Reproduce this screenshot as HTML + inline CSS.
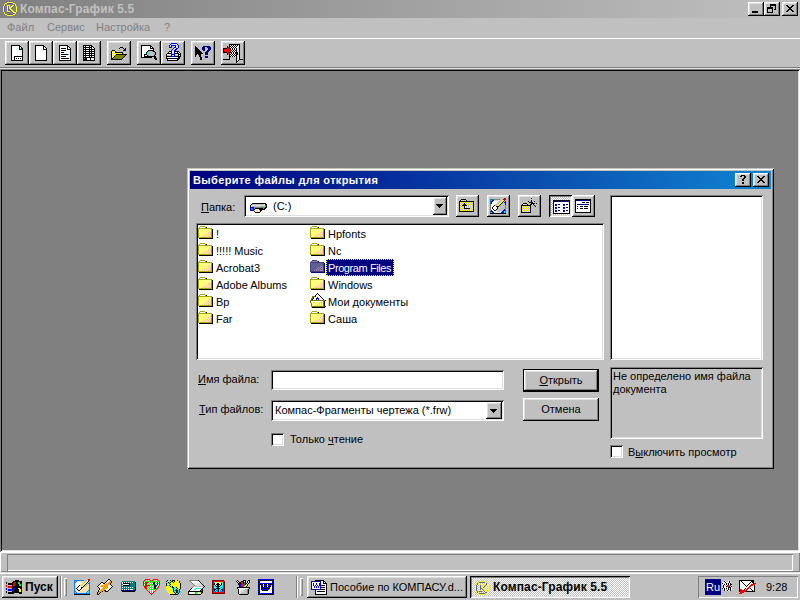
<!DOCTYPE html>
<html><head><meta charset="utf-8"><style>
*{margin:0;padding:0;box-sizing:border-box}
html,body{width:800px;height:600px;overflow:hidden;background:#c0c0c0;font-family:"Liberation Sans",sans-serif;font-size:11px;color:#000}
.a{position:absolute}
.t{position:absolute;white-space:nowrap;font-size:11px;line-height:13px}
.b{font-weight:bold}
.raised{background:#c0c0c0;box-shadow:inset -1px -1px #000,inset 1px 1px #fff,inset -2px -2px #808080,inset 2px 2px #dfdfdf}
.sunk{box-shadow:inset 1px 1px #808080,inset -1px -1px #fff,inset 2px 2px #000,inset -2px -2px #dfdfdf}
.u{text-decoration:underline}
.dith{background-color:#fff;background-image:linear-gradient(45deg,#c0c0c0 25%,transparent 25%,transparent 75%,#c0c0c0 75%),linear-gradient(45deg,#c0c0c0 25%,transparent 25%,transparent 75%,#c0c0c0 75%);background-size:2px 2px;background-position:0 0,1px 1px}
</style></head><body>
<div class="a" style="left:0px;top:0px;width:800px;height:18px;background:linear-gradient(to right,#808080,#c0c0c0)"></div>
<svg class="a" style="left:0px;top:0px" width="20" height="16" shape-rendering="crispEdges"><rect x="7" y="2" width="6" height="1" fill="#ffff00"/><rect x="5" y="3" width="2" height="1" fill="#ffff00"/><rect x="7" y="3" width="6" height="1" fill="#606090"/><rect x="13" y="3" width="2" height="1" fill="#ffff00"/><rect x="4" y="4" width="1" height="1" fill="#ffff00"/><rect x="5" y="4" width="1" height="1" fill="#606090"/><rect x="14" y="4" width="1" height="1" fill="#606090"/><rect x="15" y="4" width="1" height="1" fill="#ffff00"/><rect x="4" y="5" width="1" height="1" fill="#ffff00"/><rect x="5" y="5" width="1" height="1" fill="#606090"/><rect x="7" y="5" width="3" height="1" fill="#ffff00"/><rect x="12" y="5" width="2" height="1" fill="#ffff00"/><rect x="14" y="5" width="1" height="1" fill="#606090"/><rect x="15" y="5" width="1" height="1" fill="#ffff00"/><rect x="3" y="6" width="1" height="1" fill="#ffff00"/><rect x="4" y="6" width="1" height="1" fill="#606090"/><rect x="7" y="6" width="1" height="1" fill="#ffff00"/><rect x="8" y="6" width="1" height="1" fill="#606090"/><rect x="9" y="6" width="1" height="1" fill="#ffff00"/><rect x="11" y="6" width="2" height="1" fill="#ffff00"/><rect x="13" y="6" width="1" height="1" fill="#606090"/><rect x="16" y="6" width="1" height="1" fill="#ffff00"/><rect x="3" y="7" width="1" height="1" fill="#ffff00"/><rect x="4" y="7" width="1" height="1" fill="#606090"/><rect x="7" y="7" width="1" height="1" fill="#ffff00"/><rect x="8" y="7" width="1" height="1" fill="#606090"/><rect x="9" y="7" width="3" height="1" fill="#ffff00"/><rect x="12" y="7" width="1" height="1" fill="#606090"/><rect x="16" y="7" width="1" height="1" fill="#ffff00"/><rect x="3" y="8" width="1" height="1" fill="#ffff00"/><rect x="4" y="8" width="1" height="1" fill="#606090"/><rect x="7" y="8" width="1" height="1" fill="#ffff00"/><rect x="8" y="8" width="1" height="1" fill="#606090"/><rect x="9" y="8" width="2" height="1" fill="#ffff00"/><rect x="11" y="8" width="1" height="1" fill="#606090"/><rect x="16" y="8" width="1" height="1" fill="#ffff00"/><rect x="3" y="9" width="1" height="1" fill="#ffff00"/><rect x="4" y="9" width="1" height="1" fill="#606090"/><rect x="7" y="9" width="1" height="1" fill="#ffff00"/><rect x="8" y="9" width="2" height="1" fill="#606090"/><rect x="10" y="9" width="2" height="1" fill="#ffff00"/><rect x="16" y="9" width="1" height="1" fill="#ffff00"/><rect x="3" y="10" width="1" height="1" fill="#ffff00"/><rect x="4" y="10" width="1" height="1" fill="#606090"/><rect x="7" y="10" width="1" height="1" fill="#ffff00"/><rect x="8" y="10" width="1" height="1" fill="#606090"/><rect x="10" y="10" width="1" height="1" fill="#606090"/><rect x="11" y="10" width="2" height="1" fill="#ffff00"/><rect x="16" y="10" width="1" height="1" fill="#ffff00"/><rect x="3" y="11" width="1" height="1" fill="#ffff00"/><rect x="4" y="11" width="1" height="1" fill="#606090"/><rect x="7" y="11" width="3" height="1" fill="#ffff00"/><rect x="11" y="11" width="1" height="1" fill="#606090"/><rect x="12" y="11" width="2" height="1" fill="#ffff00"/><rect x="16" y="11" width="1" height="1" fill="#ffff00"/><rect x="4" y="12" width="1" height="1" fill="#ffff00"/><rect x="5" y="12" width="1" height="1" fill="#606090"/><rect x="7" y="12" width="3" height="1" fill="#606090"/><rect x="12" y="12" width="1" height="1" fill="#606090"/><rect x="13" y="12" width="3" height="1" fill="#ffff00"/><rect x="4" y="13" width="1" height="1" fill="#ffff00"/><rect x="5" y="13" width="1" height="1" fill="#606090"/><rect x="13" y="13" width="2" height="1" fill="#606090"/><rect x="15" y="13" width="1" height="1" fill="#ffff00"/><rect x="5" y="14" width="2" height="1" fill="#ffff00"/><rect x="7" y="14" width="6" height="1" fill="#606090"/><rect x="13" y="14" width="2" height="1" fill="#ffff00"/><rect x="7" y="15" width="6" height="1" fill="#ffff00"/></svg>
<div class="t b" style="left:20px;top:3px;font-size:12px;color:#c0c0c0;letter-spacing:0.12px">Компас-График 5.5</div>
<div class="a raised" style="left:748px;top:2px;width:16px;height:14px;"></div>
<div class="a raised" style="left:764px;top:2px;width:16px;height:14px;"></div>
<div class="a raised" style="left:782px;top:2px;width:16px;height:14px;"></div>
<div class="a" style="left:752px;top:11px;width:6px;height:2px;background:#000"></div>
<svg class="a" style="left:764px;top:2px" width="16" height="14" shape-rendering="crispEdges"><rect x="6" y="2" width="6" height="1" fill="#000"/><rect x="6" y="3" width="6" height="1" fill="#000"/><rect x="6" y="4" width="1" height="1" fill="#000"/><rect x="11" y="4" width="1" height="4" fill="#000"/><rect x="10" y="7" width="1" height="1" fill="#000"/><rect x="3" y="5" width="6" height="2" fill="#000"/><rect x="3" y="7" width="1" height="4" fill="#000"/><rect x="8" y="7" width="1" height="4" fill="#000"/><rect x="3" y="10" width="6" height="1" fill="#000"/></svg>
<svg class="a" style="left:782px;top:2px" width="16" height="14" shape-rendering="crispEdges"><rect x="4" y="3" width="2" height="1" fill="#000"/><rect x="10" y="3" width="2" height="1" fill="#000"/><rect x="5" y="4" width="2" height="1" fill="#000"/><rect x="9" y="4" width="2" height="1" fill="#000"/><rect x="6" y="5" width="2" height="1" fill="#000"/><rect x="8" y="5" width="2" height="1" fill="#000"/><rect x="7" y="6" width="2" height="1" fill="#000"/><rect x="7" y="6" width="2" height="1" fill="#000"/><rect x="8" y="7" width="2" height="1" fill="#000"/><rect x="6" y="7" width="2" height="1" fill="#000"/><rect x="9" y="8" width="2" height="1" fill="#000"/><rect x="5" y="8" width="2" height="1" fill="#000"/><rect x="10" y="9" width="2" height="1" fill="#000"/><rect x="4" y="9" width="2" height="1" fill="#000"/></svg>
<div class="t " style="left:7px;top:21px;color:#808080">Файл</div>
<div class="t " style="left:47px;top:21px;color:#808080">Сервис</div>
<div class="t " style="left:96px;top:21px;color:#808080">Настройка</div>
<div class="t " style="left:164px;top:21px;color:#808080">?</div>
<div class="a" style="left:0px;top:38px;width:800px;height:1px;background:#fff"></div>
<div class="a raised" style="left:5px;top:41px;width:24px;height:24px;"></div>
<svg class="a" style="left:9px;top:45px" width="16" height="16" shape-rendering="crispEdges"><rect x="2" y="0" width="9" height="1" fill="#000000"/><rect x="2" y="1" width="1" height="1" fill="#000000"/><rect x="3" y="1" width="7" height="1" fill="#ffffff"/><rect x="10" y="1" width="2" height="1" fill="#000000"/><rect x="2" y="2" width="1" height="1" fill="#000000"/><rect x="3" y="2" width="7" height="1" fill="#ffffff"/><rect x="10" y="2" width="1" height="1" fill="#000000"/><rect x="11" y="2" width="1" height="1" fill="#ffffff"/><rect x="12" y="2" width="1" height="1" fill="#000000"/><rect x="2" y="3" width="1" height="1" fill="#000000"/><rect x="3" y="3" width="7" height="1" fill="#ffffff"/><rect x="10" y="3" width="1" height="1" fill="#000000"/><rect x="11" y="3" width="1" height="1" fill="#00ffff"/><rect x="12" y="3" width="2" height="1" fill="#000000"/><rect x="2" y="4" width="1" height="1" fill="#000000"/><rect x="3" y="4" width="7" height="1" fill="#ffffff"/><rect x="10" y="4" width="4" height="1" fill="#000000"/><rect x="2" y="5" width="1" height="1" fill="#000000"/><rect x="3" y="5" width="10" height="1" fill="#ffffff"/><rect x="13" y="5" width="1" height="1" fill="#000000"/><rect x="2" y="6" width="1" height="1" fill="#000000"/><rect x="3" y="6" width="10" height="1" fill="#ffffff"/><rect x="13" y="6" width="1" height="1" fill="#000000"/><rect x="2" y="7" width="1" height="1" fill="#000000"/><rect x="3" y="7" width="10" height="1" fill="#ffffff"/><rect x="13" y="7" width="1" height="1" fill="#000000"/><rect x="2" y="8" width="1" height="1" fill="#000000"/><rect x="3" y="8" width="10" height="1" fill="#ffffff"/><rect x="13" y="8" width="1" height="1" fill="#000000"/><rect x="2" y="9" width="1" height="1" fill="#000000"/><rect x="3" y="9" width="10" height="1" fill="#ffffff"/><rect x="13" y="9" width="1" height="1" fill="#000000"/><rect x="2" y="10" width="1" height="1" fill="#000000"/><rect x="3" y="10" width="10" height="1" fill="#ffffff"/><rect x="13" y="10" width="1" height="1" fill="#000000"/><rect x="2" y="11" width="1" height="1" fill="#000000"/><rect x="3" y="11" width="2" height="1" fill="#ffffff"/><rect x="5" y="11" width="9" height="1" fill="#000000"/><rect x="2" y="12" width="1" height="1" fill="#000000"/><rect x="3" y="12" width="2" height="1" fill="#ffffff"/><rect x="5" y="12" width="1" height="1" fill="#000000"/><rect x="6" y="12" width="7" height="1" fill="#ffffff"/><rect x="13" y="12" width="1" height="1" fill="#000000"/><rect x="2" y="13" width="1" height="1" fill="#000000"/><rect x="3" y="13" width="2" height="1" fill="#ffffff"/><rect x="5" y="13" width="1" height="1" fill="#000000"/><rect x="6" y="13" width="1" height="1" fill="#ffffff"/><rect x="7" y="13" width="1" height="1" fill="#000000"/><rect x="8" y="13" width="1" height="1" fill="#ffffff"/><rect x="9" y="13" width="1" height="1" fill="#000000"/><rect x="10" y="13" width="1" height="1" fill="#ffffff"/><rect x="11" y="13" width="1" height="1" fill="#000000"/><rect x="12" y="13" width="1" height="1" fill="#ffffff"/><rect x="13" y="13" width="1" height="1" fill="#000000"/><rect x="2" y="14" width="1" height="1" fill="#000000"/><rect x="3" y="14" width="2" height="1" fill="#ffffff"/><rect x="5" y="14" width="1" height="1" fill="#000000"/><rect x="6" y="14" width="7" height="1" fill="#ffffff"/><rect x="13" y="14" width="1" height="1" fill="#000000"/><rect x="2" y="15" width="12" height="1" fill="#000000"/></svg>
<div class="a raised" style="left:29px;top:41px;width:24px;height:24px;"></div>
<svg class="a" style="left:33px;top:45px" width="16" height="16" shape-rendering="crispEdges"><rect x="2" y="0" width="9" height="1" fill="#000000"/><rect x="2" y="1" width="1" height="1" fill="#000000"/><rect x="3" y="1" width="7" height="1" fill="#ffffff"/><rect x="10" y="1" width="2" height="1" fill="#000000"/><rect x="2" y="2" width="1" height="1" fill="#000000"/><rect x="3" y="2" width="7" height="1" fill="#ffffff"/><rect x="10" y="2" width="1" height="1" fill="#000000"/><rect x="11" y="2" width="1" height="1" fill="#ffffff"/><rect x="12" y="2" width="1" height="1" fill="#000000"/><rect x="2" y="3" width="1" height="1" fill="#000000"/><rect x="3" y="3" width="7" height="1" fill="#ffffff"/><rect x="10" y="3" width="1" height="1" fill="#000000"/><rect x="11" y="3" width="2" height="1" fill="#ffffff"/><rect x="13" y="3" width="1" height="1" fill="#000000"/><rect x="2" y="4" width="1" height="1" fill="#000000"/><rect x="3" y="4" width="7" height="1" fill="#ffffff"/><rect x="10" y="4" width="4" height="1" fill="#000000"/><rect x="2" y="5" width="1" height="1" fill="#000000"/><rect x="3" y="5" width="10" height="1" fill="#ffffff"/><rect x="13" y="5" width="1" height="1" fill="#000000"/><rect x="2" y="6" width="1" height="1" fill="#000000"/><rect x="3" y="6" width="10" height="1" fill="#ffffff"/><rect x="13" y="6" width="1" height="1" fill="#000000"/><rect x="2" y="7" width="1" height="1" fill="#000000"/><rect x="3" y="7" width="10" height="1" fill="#ffffff"/><rect x="13" y="7" width="1" height="1" fill="#000000"/><rect x="2" y="8" width="1" height="1" fill="#000000"/><rect x="3" y="8" width="10" height="1" fill="#ffffff"/><rect x="13" y="8" width="1" height="1" fill="#000000"/><rect x="2" y="9" width="1" height="1" fill="#000000"/><rect x="3" y="9" width="10" height="1" fill="#ffffff"/><rect x="13" y="9" width="1" height="1" fill="#000000"/><rect x="2" y="10" width="1" height="1" fill="#000000"/><rect x="3" y="10" width="10" height="1" fill="#ffffff"/><rect x="13" y="10" width="1" height="1" fill="#000000"/><rect x="2" y="11" width="1" height="1" fill="#000000"/><rect x="3" y="11" width="10" height="1" fill="#ffffff"/><rect x="13" y="11" width="1" height="1" fill="#000000"/><rect x="2" y="12" width="1" height="1" fill="#000000"/><rect x="3" y="12" width="10" height="1" fill="#ffffff"/><rect x="13" y="12" width="1" height="1" fill="#000000"/><rect x="2" y="13" width="1" height="1" fill="#000000"/><rect x="3" y="13" width="10" height="1" fill="#ffffff"/><rect x="13" y="13" width="1" height="1" fill="#000000"/><rect x="2" y="14" width="1" height="1" fill="#000000"/><rect x="3" y="14" width="10" height="1" fill="#ffffff"/><rect x="13" y="14" width="1" height="1" fill="#000000"/><rect x="2" y="15" width="12" height="1" fill="#000000"/></svg>
<div class="a raised" style="left:53px;top:41px;width:24px;height:24px;"></div>
<svg class="a" style="left:57px;top:45px" width="16" height="16" shape-rendering="crispEdges"><rect x="2" y="0" width="9" height="1" fill="#000000"/><rect x="2" y="1" width="1" height="1" fill="#000000"/><rect x="3" y="1" width="7" height="1" fill="#ffffff"/><rect x="10" y="1" width="2" height="1" fill="#000000"/><rect x="2" y="2" width="1" height="1" fill="#000000"/><rect x="3" y="2" width="7" height="1" fill="#ffffff"/><rect x="10" y="2" width="1" height="1" fill="#000000"/><rect x="11" y="2" width="1" height="1" fill="#ffffff"/><rect x="12" y="2" width="1" height="1" fill="#000000"/><rect x="2" y="3" width="1" height="1" fill="#000000"/><rect x="3" y="3" width="1" height="1" fill="#ffffff"/><rect x="4" y="3" width="5" height="1" fill="#000000"/><rect x="9" y="3" width="1" height="1" fill="#ffffff"/><rect x="10" y="3" width="1" height="1" fill="#000000"/><rect x="11" y="3" width="2" height="1" fill="#ffffff"/><rect x="13" y="3" width="1" height="1" fill="#000000"/><rect x="2" y="4" width="1" height="1" fill="#000000"/><rect x="3" y="4" width="7" height="1" fill="#ffffff"/><rect x="10" y="4" width="4" height="1" fill="#000000"/><rect x="2" y="5" width="1" height="1" fill="#000000"/><rect x="3" y="5" width="1" height="1" fill="#ffffff"/><rect x="4" y="5" width="5" height="1" fill="#000000"/><rect x="9" y="5" width="4" height="1" fill="#ffffff"/><rect x="13" y="5" width="1" height="1" fill="#000000"/><rect x="2" y="6" width="1" height="1" fill="#000000"/><rect x="3" y="6" width="10" height="1" fill="#ffffff"/><rect x="13" y="6" width="1" height="1" fill="#000000"/><rect x="2" y="7" width="1" height="1" fill="#000000"/><rect x="3" y="7" width="1" height="1" fill="#ffffff"/><rect x="4" y="7" width="3" height="1" fill="#000000"/><rect x="7" y="7" width="6" height="1" fill="#ffffff"/><rect x="13" y="7" width="1" height="1" fill="#000000"/><rect x="2" y="8" width="1" height="1" fill="#000000"/><rect x="3" y="8" width="10" height="1" fill="#ffffff"/><rect x="13" y="8" width="1" height="1" fill="#000000"/><rect x="2" y="9" width="1" height="1" fill="#000000"/><rect x="3" y="9" width="1" height="1" fill="#ffffff"/><rect x="4" y="9" width="7" height="1" fill="#000000"/><rect x="11" y="9" width="1" height="1" fill="#00ffff"/><rect x="12" y="9" width="1" height="1" fill="#ffffff"/><rect x="13" y="9" width="1" height="1" fill="#000000"/><rect x="2" y="10" width="1" height="1" fill="#000000"/><rect x="3" y="10" width="10" height="1" fill="#ffffff"/><rect x="13" y="10" width="1" height="1" fill="#000000"/><rect x="2" y="11" width="1" height="1" fill="#000000"/><rect x="3" y="11" width="1" height="1" fill="#ffffff"/><rect x="4" y="11" width="5" height="1" fill="#000000"/><rect x="9" y="11" width="4" height="1" fill="#ffffff"/><rect x="13" y="11" width="1" height="1" fill="#000000"/><rect x="2" y="12" width="1" height="1" fill="#000000"/><rect x="3" y="12" width="10" height="1" fill="#ffffff"/><rect x="13" y="12" width="1" height="1" fill="#000000"/><rect x="2" y="13" width="1" height="1" fill="#000000"/><rect x="3" y="13" width="1" height="1" fill="#ffffff"/><rect x="4" y="13" width="8" height="1" fill="#000000"/><rect x="12" y="13" width="1" height="1" fill="#ffffff"/><rect x="13" y="13" width="1" height="1" fill="#000000"/><rect x="2" y="14" width="1" height="1" fill="#000000"/><rect x="3" y="14" width="10" height="1" fill="#ffffff"/><rect x="13" y="14" width="1" height="1" fill="#000000"/><rect x="2" y="15" width="12" height="1" fill="#000000"/></svg>
<div class="a raised" style="left:77px;top:41px;width:24px;height:24px;"></div>
<svg class="a" style="left:81px;top:45px" width="16" height="16" shape-rendering="crispEdges"><rect x="2" y="0" width="9" height="1" fill="#000000"/><rect x="2" y="1" width="1" height="1" fill="#000000"/><rect x="3" y="1" width="1" height="1" fill="#ffffff"/><rect x="4" y="1" width="1" height="1" fill="#000000"/><rect x="5" y="1" width="3" height="1" fill="#ffffff"/><rect x="8" y="1" width="1" height="1" fill="#000000"/><rect x="9" y="1" width="1" height="1" fill="#ffffff"/><rect x="10" y="1" width="2" height="1" fill="#000000"/><rect x="2" y="2" width="9" height="1" fill="#000000"/><rect x="11" y="2" width="1" height="1" fill="#ffffff"/><rect x="12" y="2" width="1" height="1" fill="#000000"/><rect x="2" y="3" width="1" height="1" fill="#000000"/><rect x="3" y="3" width="1" height="1" fill="#ffffff"/><rect x="4" y="3" width="1" height="1" fill="#000000"/><rect x="5" y="3" width="3" height="1" fill="#ffffff"/><rect x="8" y="3" width="1" height="1" fill="#000000"/><rect x="9" y="3" width="1" height="1" fill="#ffffff"/><rect x="10" y="3" width="1" height="1" fill="#000000"/><rect x="11" y="3" width="2" height="1" fill="#ffffff"/><rect x="13" y="3" width="1" height="1" fill="#000000"/><rect x="2" y="4" width="12" height="1" fill="#000000"/><rect x="2" y="5" width="1" height="1" fill="#000000"/><rect x="3" y="5" width="1" height="1" fill="#ffffff"/><rect x="4" y="5" width="1" height="1" fill="#000000"/><rect x="5" y="5" width="3" height="1" fill="#ffffff"/><rect x="8" y="5" width="1" height="1" fill="#000000"/><rect x="9" y="5" width="1" height="1" fill="#ffffff"/><rect x="10" y="5" width="1" height="1" fill="#000000"/><rect x="11" y="5" width="2" height="1" fill="#ffffff"/><rect x="13" y="5" width="1" height="1" fill="#000000"/><rect x="2" y="6" width="12" height="1" fill="#000000"/><rect x="2" y="7" width="1" height="1" fill="#000000"/><rect x="3" y="7" width="1" height="1" fill="#ffffff"/><rect x="4" y="7" width="1" height="1" fill="#000000"/><rect x="5" y="7" width="3" height="1" fill="#ffffff"/><rect x="8" y="7" width="1" height="1" fill="#000000"/><rect x="9" y="7" width="1" height="1" fill="#ffffff"/><rect x="10" y="7" width="1" height="1" fill="#000000"/><rect x="11" y="7" width="2" height="1" fill="#ffffff"/><rect x="13" y="7" width="1" height="1" fill="#000000"/><rect x="2" y="8" width="12" height="1" fill="#000000"/><rect x="2" y="9" width="1" height="1" fill="#000000"/><rect x="3" y="9" width="1" height="1" fill="#ffffff"/><rect x="4" y="9" width="1" height="1" fill="#000000"/><rect x="5" y="9" width="3" height="1" fill="#ffffff"/><rect x="8" y="9" width="1" height="1" fill="#000000"/><rect x="9" y="9" width="1" height="1" fill="#ffffff"/><rect x="10" y="9" width="1" height="1" fill="#000000"/><rect x="11" y="9" width="2" height="1" fill="#ffffff"/><rect x="13" y="9" width="1" height="1" fill="#000000"/><rect x="2" y="10" width="12" height="1" fill="#000000"/><rect x="2" y="11" width="1" height="1" fill="#000000"/><rect x="3" y="11" width="1" height="1" fill="#ffffff"/><rect x="4" y="11" width="1" height="1" fill="#000000"/><rect x="5" y="11" width="3" height="1" fill="#ffffff"/><rect x="8" y="11" width="1" height="1" fill="#000000"/><rect x="9" y="11" width="1" height="1" fill="#ffffff"/><rect x="10" y="11" width="1" height="1" fill="#000000"/><rect x="11" y="11" width="2" height="1" fill="#ffffff"/><rect x="13" y="11" width="1" height="1" fill="#000000"/><rect x="2" y="12" width="12" height="1" fill="#000000"/><rect x="2" y="13" width="1" height="1" fill="#000000"/><rect x="3" y="13" width="1" height="1" fill="#808080"/><rect x="4" y="13" width="2" height="1" fill="#000000"/><rect x="6" y="13" width="3" height="1" fill="#ffffff"/><rect x="9" y="13" width="1" height="1" fill="#000000"/><rect x="10" y="13" width="3" height="1" fill="#ffffff"/><rect x="13" y="13" width="1" height="1" fill="#000000"/><rect x="2" y="14" width="4" height="1" fill="#000000"/><rect x="6" y="14" width="3" height="1" fill="#ffffff"/><rect x="9" y="14" width="1" height="1" fill="#000000"/><rect x="10" y="14" width="3" height="1" fill="#ffffff"/><rect x="13" y="14" width="1" height="1" fill="#000000"/><rect x="2" y="15" width="12" height="1" fill="#000000"/></svg>
<div class="a raised" style="left:107px;top:41px;width:24px;height:24px;"></div>
<svg class="a" style="left:111px;top:45px" width="16" height="16" shape-rendering="crispEdges"><rect x="9" y="2" width="3" height="1" fill="#000000"/><rect x="8" y="3" width="1" height="1" fill="#000000"/><rect x="12" y="3" width="1" height="1" fill="#000000"/><rect x="14" y="3" width="1" height="1" fill="#000000"/><rect x="13" y="4" width="2" height="1" fill="#000000"/><rect x="1" y="5" width="3" height="1" fill="#000000"/><rect x="12" y="5" width="3" height="1" fill="#000000"/><rect x="0" y="6" width="1" height="1" fill="#000000"/><rect x="1" y="6" width="1" height="1" fill="#ffff00"/><rect x="2" y="6" width="1" height="1" fill="#ffffff"/><rect x="3" y="6" width="1" height="1" fill="#ffff00"/><rect x="4" y="6" width="1" height="1" fill="#000000"/><rect x="0" y="7" width="1" height="1" fill="#000000"/><rect x="1" y="7" width="1" height="1" fill="#ffffff"/><rect x="2" y="7" width="1" height="1" fill="#ffff00"/><rect x="3" y="7" width="1" height="1" fill="#ffffff"/><rect x="4" y="7" width="8" height="1" fill="#000000"/><rect x="0" y="8" width="1" height="1" fill="#000000"/><rect x="1" y="8" width="1" height="1" fill="#ffff00"/><rect x="2" y="8" width="1" height="1" fill="#ffffff"/><rect x="3" y="8" width="1" height="1" fill="#ffff00"/><rect x="4" y="8" width="1" height="1" fill="#ffffff"/><rect x="5" y="8" width="1" height="1" fill="#ffff00"/><rect x="6" y="8" width="1" height="1" fill="#ffffff"/><rect x="7" y="8" width="1" height="1" fill="#ffff00"/><rect x="8" y="8" width="1" height="1" fill="#ffffff"/><rect x="9" y="8" width="1" height="1" fill="#ffff00"/><rect x="10" y="8" width="1" height="1" fill="#ffffff"/><rect x="11" y="8" width="1" height="1" fill="#000000"/><rect x="0" y="9" width="1" height="1" fill="#000000"/><rect x="1" y="9" width="1" height="1" fill="#ffffff"/><rect x="2" y="9" width="1" height="1" fill="#ffff00"/><rect x="3" y="9" width="1" height="1" fill="#ffffff"/><rect x="4" y="9" width="1" height="1" fill="#ffff00"/><rect x="5" y="9" width="11" height="1" fill="#000000"/><rect x="0" y="10" width="1" height="1" fill="#000000"/><rect x="1" y="10" width="1" height="1" fill="#ffff00"/><rect x="2" y="10" width="1" height="1" fill="#ffffff"/><rect x="3" y="10" width="1" height="1" fill="#ffff00"/><rect x="4" y="10" width="1" height="1" fill="#000000"/><rect x="5" y="10" width="9" height="1" fill="#808000"/><rect x="14" y="10" width="1" height="1" fill="#000000"/><rect x="0" y="11" width="1" height="1" fill="#000000"/><rect x="1" y="11" width="1" height="1" fill="#ffffff"/><rect x="2" y="11" width="1" height="1" fill="#ffff00"/><rect x="3" y="11" width="1" height="1" fill="#000000"/><rect x="4" y="11" width="9" height="1" fill="#808000"/><rect x="13" y="11" width="1" height="1" fill="#000000"/><rect x="0" y="12" width="1" height="1" fill="#000000"/><rect x="1" y="12" width="1" height="1" fill="#ffff00"/><rect x="2" y="12" width="1" height="1" fill="#000000"/><rect x="3" y="12" width="9" height="1" fill="#808000"/><rect x="12" y="12" width="1" height="1" fill="#000000"/><rect x="0" y="13" width="2" height="1" fill="#000000"/><rect x="2" y="13" width="9" height="1" fill="#808000"/><rect x="11" y="13" width="1" height="1" fill="#000000"/><rect x="0" y="14" width="11" height="1" fill="#000000"/></svg>
<div class="a raised" style="left:137px;top:41px;width:24px;height:24px;"></div>
<svg class="a" style="left:141px;top:45px" width="16" height="16" shape-rendering="crispEdges"><rect x="0" y="0" width="10" height="1" fill="#000000"/><rect x="0" y="1" width="1" height="1" fill="#000000"/><rect x="1" y="1" width="8" height="1" fill="#ffffff"/><rect x="9" y="1" width="2" height="1" fill="#000000"/><rect x="0" y="2" width="1" height="1" fill="#000000"/><rect x="1" y="2" width="8" height="1" fill="#ffffff"/><rect x="9" y="2" width="1" height="1" fill="#000000"/><rect x="10" y="2" width="1" height="1" fill="#ffffff"/><rect x="11" y="2" width="1" height="1" fill="#000000"/><rect x="0" y="3" width="1" height="1" fill="#000000"/><rect x="1" y="3" width="8" height="1" fill="#ffffff"/><rect x="9" y="3" width="4" height="1" fill="#000000"/><rect x="0" y="4" width="1" height="1" fill="#000000"/><rect x="1" y="4" width="11" height="1" fill="#ffffff"/><rect x="12" y="4" width="1" height="1" fill="#000000"/><rect x="0" y="5" width="1" height="1" fill="#000000"/><rect x="1" y="5" width="6" height="1" fill="#ffffff"/><rect x="7" y="5" width="6" height="1" fill="#000000"/><rect x="0" y="6" width="1" height="1" fill="#000000"/><rect x="1" y="6" width="5" height="1" fill="#ffffff"/><rect x="6" y="6" width="1" height="1" fill="#000000"/><rect x="7" y="6" width="1" height="1" fill="#808080"/><rect x="8" y="6" width="3" height="1" fill="#c0c0c0"/><rect x="11" y="6" width="1" height="1" fill="#808080"/><rect x="12" y="6" width="2" height="1" fill="#000000"/><rect x="0" y="7" width="1" height="1" fill="#000000"/><rect x="1" y="7" width="4" height="1" fill="#ffffff"/><rect x="5" y="7" width="1" height="1" fill="#000000"/><rect x="6" y="7" width="1" height="1" fill="#808080"/><rect x="7" y="7" width="2" height="1" fill="#00ffff"/><rect x="9" y="7" width="4" height="1" fill="#c0c0c0"/><rect x="13" y="7" width="1" height="1" fill="#808080"/><rect x="14" y="7" width="1" height="1" fill="#000000"/><rect x="0" y="8" width="1" height="1" fill="#000000"/><rect x="1" y="8" width="4" height="1" fill="#ffffff"/><rect x="5" y="8" width="1" height="1" fill="#000000"/><rect x="6" y="8" width="1" height="1" fill="#c0c0c0"/><rect x="7" y="8" width="2" height="1" fill="#00ffff"/><rect x="9" y="8" width="5" height="1" fill="#c0c0c0"/><rect x="14" y="8" width="1" height="1" fill="#000000"/><rect x="0" y="9" width="1" height="1" fill="#000000"/><rect x="1" y="9" width="2" height="1" fill="#ffffff"/><rect x="3" y="9" width="3" height="1" fill="#000000"/><rect x="6" y="9" width="7" height="1" fill="#c0c0c0"/><rect x="13" y="9" width="1" height="1" fill="#808080"/><rect x="14" y="9" width="1" height="1" fill="#000000"/><rect x="0" y="10" width="1" height="1" fill="#000000"/><rect x="1" y="10" width="2" height="1" fill="#ffffff"/><rect x="3" y="10" width="1" height="1" fill="#000000"/><rect x="4" y="10" width="2" height="1" fill="#ffffff"/><rect x="6" y="10" width="1" height="1" fill="#000000"/><rect x="7" y="10" width="1" height="1" fill="#808080"/><rect x="8" y="10" width="5" height="1" fill="#c0c0c0"/><rect x="13" y="10" width="1" height="1" fill="#000000"/><rect x="0" y="11" width="1" height="1" fill="#000000"/><rect x="1" y="11" width="2" height="1" fill="#ffffff"/><rect x="3" y="11" width="12" height="1" fill="#000000"/><rect x="0" y="12" width="11" height="1" fill="#000000"/><rect x="13" y="12" width="2" height="1" fill="#000000"/><rect x="13" y="13" width="3" height="1" fill="#000000"/><rect x="14" y="14" width="2" height="1" fill="#000000"/></svg>
<div class="a raised" style="left:161px;top:41px;width:24px;height:24px;"></div>
<svg class="a" style="left:165px;top:43px" width="16" height="18" shape-rendering="crispEdges"><rect x="6" y="0" width="6" height="1" fill="#0000ff"/><rect x="5" y="1" width="1" height="1" fill="#0000ff"/><rect x="6" y="1" width="6" height="1" fill="#dfdfdf"/><rect x="12" y="1" width="1" height="1" fill="#0000ff"/><rect x="4" y="2" width="1" height="1" fill="#0000ff"/><rect x="5" y="2" width="1" height="1" fill="#dfdfdf"/><rect x="6" y="2" width="5" height="1" fill="#0000ff"/><rect x="11" y="2" width="2" height="1" fill="#dfdfdf"/><rect x="13" y="2" width="1" height="1" fill="#0000ff"/><rect x="4" y="3" width="1" height="1" fill="#0000ff"/><rect x="5" y="3" width="1" height="1" fill="#dfdfdf"/><rect x="6" y="3" width="1" height="1" fill="#0000ff"/><rect x="10" y="3" width="1" height="1" fill="#0000ff"/><rect x="11" y="3" width="2" height="1" fill="#dfdfdf"/><rect x="13" y="3" width="1" height="1" fill="#0000ff"/><rect x="4" y="4" width="3" height="1" fill="#0000ff"/><rect x="9" y="4" width="2" height="1" fill="#0000ff"/><rect x="11" y="4" width="2" height="1" fill="#dfdfdf"/><rect x="13" y="4" width="1" height="1" fill="#0000ff"/><rect x="8" y="5" width="1" height="1" fill="#0000ff"/><rect x="9" y="5" width="2" height="1" fill="#dfdfdf"/><rect x="11" y="5" width="2" height="1" fill="#0000ff"/><rect x="7" y="6" width="1" height="1" fill="#0000ff"/><rect x="8" y="6" width="2" height="1" fill="#dfdfdf"/><rect x="10" y="6" width="2" height="1" fill="#0000ff"/><rect x="6" y="7" width="1" height="1" fill="#0000ff"/><rect x="7" y="7" width="2" height="1" fill="#dfdfdf"/><rect x="9" y="7" width="2" height="1" fill="#0000ff"/><rect x="4" y="8" width="2" height="1" fill="#000000"/><rect x="6" y="8" width="1" height="1" fill="#0000ff"/><rect x="7" y="8" width="2" height="1" fill="#dfdfdf"/><rect x="9" y="8" width="1" height="1" fill="#0000ff"/><rect x="10" y="8" width="4" height="1" fill="#000000"/><rect x="3" y="9" width="1" height="1" fill="#000000"/><rect x="4" y="9" width="2" height="1" fill="#ffffff"/><rect x="6" y="9" width="1" height="1" fill="#0000ff"/><rect x="7" y="9" width="2" height="1" fill="#dfdfdf"/><rect x="9" y="9" width="1" height="1" fill="#0000ff"/><rect x="10" y="9" width="2" height="1" fill="#ffffff"/><rect x="12" y="9" width="1" height="1" fill="#000000"/><rect x="13" y="9" width="1" height="1" fill="#ffffff"/><rect x="14" y="9" width="1" height="1" fill="#000000"/><rect x="2" y="10" width="4" height="1" fill="#000000"/><rect x="6" y="10" width="1" height="1" fill="#0000ff"/><rect x="7" y="10" width="2" height="1" fill="#dfdfdf"/><rect x="9" y="10" width="1" height="1" fill="#0000ff"/><rect x="10" y="10" width="4" height="1" fill="#000000"/><rect x="14" y="10" width="1" height="1" fill="#ffffff"/><rect x="15" y="10" width="1" height="1" fill="#000000"/><rect x="1" y="11" width="1" height="1" fill="#000000"/><rect x="2" y="11" width="4" height="1" fill="#ffffff"/><rect x="6" y="11" width="4" height="1" fill="#0000ff"/><rect x="10" y="11" width="3" height="1" fill="#ffffff"/><rect x="13" y="11" width="3" height="1" fill="#000000"/><rect x="1" y="12" width="1" height="1" fill="#000000"/><rect x="2" y="12" width="4" height="1" fill="#c0c0c0"/><rect x="6" y="12" width="1" height="1" fill="#0000ff"/><rect x="7" y="12" width="2" height="1" fill="#dfdfdf"/><rect x="9" y="12" width="1" height="1" fill="#0000ff"/><rect x="10" y="12" width="3" height="1" fill="#c0c0c0"/><rect x="13" y="12" width="1" height="1" fill="#000000"/><rect x="14" y="12" width="1" height="1" fill="#ffffff"/><rect x="15" y="12" width="1" height="1" fill="#000000"/><rect x="1" y="13" width="5" height="1" fill="#000000"/><rect x="6" y="13" width="4" height="1" fill="#0000ff"/><rect x="10" y="13" width="6" height="1" fill="#000000"/><rect x="1" y="14" width="1" height="1" fill="#000000"/><rect x="2" y="14" width="11" height="1" fill="#ffffff"/><rect x="13" y="14" width="2" height="1" fill="#000000"/><rect x="1" y="15" width="14" height="1" fill="#000000"/><rect x="2" y="16" width="1" height="1" fill="#000000"/><rect x="3" y="16" width="9" height="1" fill="#ffffff"/><rect x="12" y="16" width="2" height="1" fill="#000000"/><rect x="2" y="17" width="11" height="1" fill="#000000"/></svg>
<div class="a raised" style="left:191px;top:41px;width:24px;height:24px;"></div>
<svg class="a" style="left:195px;top:46px" width="16" height="14" shape-rendering="crispEdges"><rect x="0" y="0" width="1" height="1" fill="#000000"/><rect x="8" y="0" width="7" height="1" fill="#000080"/><rect x="0" y="1" width="2" height="1" fill="#000000"/><rect x="7" y="1" width="3" height="1" fill="#000080"/><rect x="12" y="1" width="4" height="1" fill="#000080"/><rect x="0" y="2" width="3" height="1" fill="#000000"/><rect x="7" y="2" width="3" height="1" fill="#000080"/><rect x="13" y="2" width="3" height="1" fill="#000080"/><rect x="0" y="3" width="4" height="1" fill="#000000"/><rect x="7" y="3" width="3" height="1" fill="#000080"/><rect x="13" y="3" width="3" height="1" fill="#000080"/><rect x="0" y="4" width="5" height="1" fill="#000000"/><rect x="8" y="4" width="2" height="1" fill="#000080"/><rect x="12" y="4" width="3" height="1" fill="#000080"/><rect x="0" y="5" width="6" height="1" fill="#000000"/><rect x="11" y="5" width="3" height="1" fill="#000080"/><rect x="0" y="6" width="7" height="1" fill="#000000"/><rect x="10" y="6" width="3" height="1" fill="#000080"/><rect x="0" y="7" width="8" height="1" fill="#000000"/><rect x="10" y="7" width="3" height="1" fill="#000080"/><rect x="0" y="8" width="2" height="1" fill="#000000"/><rect x="3" y="8" width="3" height="1" fill="#000000"/><rect x="10" y="8" width="3" height="1" fill="#000080"/><rect x="0" y="9" width="1" height="1" fill="#000000"/><rect x="4" y="9" width="2" height="1" fill="#000000"/><rect x="0" y="10" width="1" height="1" fill="#000000"/><rect x="4" y="10" width="2" height="1" fill="#000000"/><rect x="10" y="10" width="3" height="1" fill="#000080"/><rect x="5" y="11" width="2" height="1" fill="#000000"/><rect x="10" y="11" width="3" height="1" fill="#000080"/><rect x="5" y="12" width="2" height="1" fill="#000000"/><rect x="5" y="13" width="2" height="1" fill="#000000"/></svg>
<div class="a raised" style="left:221px;top:41px;width:24px;height:24px;"></div>
<svg class="a" style="left:222px;top:42px" width="22" height="21" shape-rendering="crispEdges"><rect x="7" y="2" width="11" height="1" fill="#000000"/><rect x="7" y="3" width="1" height="1" fill="#000000"/><rect x="8" y="3" width="1" height="1" fill="#ffffff"/><rect x="9" y="3" width="1" height="1" fill="#000000"/><rect x="10" y="3" width="1" height="1" fill="#ffffff"/><rect x="11" y="3" width="1" height="1" fill="#000000"/><rect x="12" y="3" width="1" height="1" fill="#ffffff"/><rect x="13" y="3" width="1" height="1" fill="#000000"/><rect x="14" y="3" width="1" height="1" fill="#ffffff"/><rect x="15" y="3" width="1" height="1" fill="#000000"/><rect x="16" y="3" width="1" height="1" fill="#ffffff"/><rect x="17" y="3" width="1" height="1" fill="#000000"/><rect x="5" y="4" width="1" height="1" fill="#000000"/><rect x="7" y="4" width="2" height="1" fill="#000000"/><rect x="9" y="4" width="1" height="1" fill="#ffffff"/><rect x="10" y="4" width="1" height="1" fill="#000000"/><rect x="11" y="4" width="1" height="1" fill="#ffffff"/><rect x="12" y="4" width="1" height="1" fill="#000000"/><rect x="13" y="4" width="1" height="1" fill="#ffffff"/><rect x="14" y="4" width="1" height="1" fill="#000000"/><rect x="15" y="4" width="2" height="1" fill="#ffffff"/><rect x="17" y="4" width="1" height="1" fill="#000000"/><rect x="5" y="5" width="1" height="1" fill="#000000"/><rect x="6" y="5" width="1" height="1" fill="#ff0000"/><rect x="7" y="5" width="1" height="1" fill="#000000"/><rect x="8" y="5" width="1" height="1" fill="#ffffff"/><rect x="9" y="5" width="1" height="1" fill="#000000"/><rect x="10" y="5" width="1" height="1" fill="#ffffff"/><rect x="11" y="5" width="1" height="1" fill="#000000"/><rect x="12" y="5" width="1" height="1" fill="#ffffff"/><rect x="13" y="5" width="1" height="1" fill="#000000"/><rect x="14" y="5" width="2" height="1" fill="#ffffff"/><rect x="16" y="5" width="1" height="1" fill="#dfdfdf"/><rect x="17" y="5" width="1" height="1" fill="#000000"/><rect x="1" y="6" width="4" height="1" fill="#000000"/><rect x="5" y="6" width="2" height="1" fill="#ff0000"/><rect x="7" y="6" width="2" height="1" fill="#000000"/><rect x="9" y="6" width="1" height="1" fill="#ffffff"/><rect x="10" y="6" width="1" height="1" fill="#000000"/><rect x="11" y="6" width="1" height="1" fill="#ffffff"/><rect x="12" y="6" width="1" height="1" fill="#000000"/><rect x="13" y="6" width="1" height="1" fill="#ffffff"/><rect x="14" y="6" width="1" height="1" fill="#000000"/><rect x="15" y="6" width="2" height="1" fill="#dfdfdf"/><rect x="17" y="6" width="1" height="1" fill="#000000"/><rect x="1" y="7" width="1" height="1" fill="#000000"/><rect x="2" y="7" width="6" height="1" fill="#ff0000"/><rect x="8" y="7" width="1" height="1" fill="#000000"/><rect x="9" y="7" width="1" height="1" fill="#ffffff"/><rect x="10" y="7" width="1" height="1" fill="#000000"/><rect x="11" y="7" width="1" height="1" fill="#ffffff"/><rect x="12" y="7" width="1" height="1" fill="#000000"/><rect x="13" y="7" width="1" height="1" fill="#ffffff"/><rect x="14" y="7" width="1" height="1" fill="#000000"/><rect x="15" y="7" width="2" height="1" fill="#dfdfdf"/><rect x="17" y="7" width="1" height="1" fill="#000000"/><rect x="1" y="8" width="1" height="1" fill="#000000"/><rect x="2" y="8" width="7" height="1" fill="#ff0000"/><rect x="9" y="8" width="1" height="1" fill="#000000"/><rect x="10" y="8" width="1" height="1" fill="#ffffff"/><rect x="11" y="8" width="1" height="1" fill="#000000"/><rect x="12" y="8" width="1" height="1" fill="#ffffff"/><rect x="13" y="8" width="2" height="1" fill="#000000"/><rect x="15" y="8" width="2" height="1" fill="#dfdfdf"/><rect x="17" y="8" width="1" height="1" fill="#000000"/><rect x="1" y="9" width="1" height="1" fill="#000000"/><rect x="2" y="9" width="6" height="1" fill="#ff0000"/><rect x="8" y="9" width="1" height="1" fill="#000000"/><rect x="9" y="9" width="1" height="1" fill="#ffffff"/><rect x="10" y="9" width="1" height="1" fill="#000000"/><rect x="11" y="9" width="1" height="1" fill="#ffffff"/><rect x="12" y="9" width="1" height="1" fill="#000000"/><rect x="13" y="9" width="1" height="1" fill="#ffffff"/><rect x="14" y="9" width="1" height="1" fill="#000000"/><rect x="15" y="9" width="2" height="1" fill="#dfdfdf"/><rect x="17" y="9" width="1" height="1" fill="#000000"/><rect x="1" y="10" width="4" height="1" fill="#000000"/><rect x="5" y="10" width="2" height="1" fill="#ff0000"/><rect x="7" y="10" width="3" height="1" fill="#000000"/><rect x="10" y="10" width="1" height="1" fill="#ffffff"/><rect x="11" y="10" width="1" height="1" fill="#000000"/><rect x="12" y="10" width="1" height="1" fill="#ffffff"/><rect x="13" y="10" width="3" height="1" fill="#000000"/><rect x="16" y="10" width="1" height="1" fill="#dfdfdf"/><rect x="17" y="10" width="1" height="1" fill="#000000"/><rect x="5" y="11" width="1" height="1" fill="#000000"/><rect x="6" y="11" width="1" height="1" fill="#ff0000"/><rect x="7" y="11" width="1" height="1" fill="#000000"/><rect x="8" y="11" width="1" height="1" fill="#ffffff"/><rect x="9" y="11" width="1" height="1" fill="#000000"/><rect x="10" y="11" width="1" height="1" fill="#ffffff"/><rect x="11" y="11" width="1" height="1" fill="#000000"/><rect x="12" y="11" width="1" height="1" fill="#ffffff"/><rect x="13" y="11" width="3" height="1" fill="#000000"/><rect x="16" y="11" width="1" height="1" fill="#dfdfdf"/><rect x="17" y="11" width="1" height="1" fill="#000000"/><rect x="5" y="12" width="1" height="1" fill="#000000"/><rect x="7" y="12" width="2" height="1" fill="#000000"/><rect x="9" y="12" width="1" height="1" fill="#ffffff"/><rect x="10" y="12" width="1" height="1" fill="#000000"/><rect x="11" y="12" width="1" height="1" fill="#ffffff"/><rect x="12" y="12" width="1" height="1" fill="#000000"/><rect x="13" y="12" width="1" height="1" fill="#ffffff"/><rect x="14" y="12" width="2" height="1" fill="#000000"/><rect x="16" y="12" width="1" height="1" fill="#dfdfdf"/><rect x="17" y="12" width="1" height="1" fill="#000000"/><rect x="7" y="13" width="1" height="1" fill="#000000"/><rect x="8" y="13" width="1" height="1" fill="#ffffff"/><rect x="9" y="13" width="1" height="1" fill="#000000"/><rect x="10" y="13" width="1" height="1" fill="#ffffff"/><rect x="11" y="13" width="1" height="1" fill="#000000"/><rect x="12" y="13" width="1" height="1" fill="#ffffff"/><rect x="13" y="13" width="2" height="1" fill="#000000"/><rect x="15" y="13" width="2" height="1" fill="#dfdfdf"/><rect x="17" y="13" width="1" height="1" fill="#000000"/><rect x="7" y="14" width="2" height="1" fill="#000000"/><rect x="9" y="14" width="1" height="1" fill="#ffffff"/><rect x="10" y="14" width="1" height="1" fill="#000000"/><rect x="11" y="14" width="1" height="1" fill="#ffffff"/><rect x="12" y="14" width="1" height="1" fill="#000000"/><rect x="13" y="14" width="1" height="1" fill="#ffffff"/><rect x="14" y="14" width="1" height="1" fill="#000000"/><rect x="15" y="14" width="2" height="1" fill="#dfdfdf"/><rect x="17" y="14" width="1" height="1" fill="#000000"/><rect x="7" y="15" width="1" height="1" fill="#000000"/><rect x="14" y="15" width="1" height="1" fill="#000000"/><rect x="15" y="15" width="2" height="1" fill="#dfdfdf"/><rect x="17" y="15" width="1" height="1" fill="#000000"/><rect x="7" y="16" width="1" height="1" fill="#000000"/><rect x="14" y="16" width="1" height="1" fill="#000000"/><rect x="15" y="16" width="2" height="1" fill="#dfdfdf"/><rect x="17" y="16" width="1" height="1" fill="#000000"/><rect x="1" y="17" width="7" height="1" fill="#000000"/><rect x="14" y="17" width="1" height="1" fill="#000000"/><rect x="15" y="17" width="2" height="1" fill="#dfdfdf"/><rect x="17" y="17" width="4" height="1" fill="#000000"/><rect x="14" y="18" width="1" height="1" fill="#000000"/><rect x="15" y="18" width="1" height="1" fill="#dfdfdf"/><rect x="16" y="18" width="1" height="1" fill="#000000"/><rect x="14" y="19" width="2" height="1" fill="#000000"/><rect x="14" y="20" width="1" height="1" fill="#000000"/></svg>
<div class="a" style="left:0px;top:67px;width:800px;height:1px;background:#808080"></div>
<div class="a" style="left:0px;top:68px;width:800px;height:1px;background:#dfdfdf"></div>
<div class="a sunk" style="left:0px;top:69px;width:800px;height:483px;background:#808080"></div>
<div class="a" style="left:0px;top:552px;width:800px;height:20px;box-shadow:inset 1px 1px #fff,inset -1px -1px #808080"></div>
<div class="a" style="left:7px;top:554px;width:786px;height:17px;box-shadow:inset 1px 1px #808080,inset -1px -1px #fff"></div>
<div class="a" style="left:187px;top:168px;width:587px;height:301px;background:#c0c0c0;box-shadow:inset 1px 1px #c0c0c0,inset -1px -1px #000,inset 2px 2px #fff,inset -2px -2px #808080"></div>
<div class="a" style="left:190px;top:171px;width:581px;height:18px;background:linear-gradient(to right,#000080,#1084d0)"></div>
<div class="t b" style="left:193px;top:174px;color:#fff;letter-spacing:0.35px">Выберите файлы для открытия</div>
<div class="a raised" style="left:735px;top:173px;width:16px;height:14px;"></div>
<div class="a raised" style="left:753px;top:173px;width:16px;height:14px;"></div>
<svg class="a" style="left:740px;top:175px" width="6" height="9" shape-rendering="crispEdges"><rect x="1" y="0" width="4" height="1" fill="#000000"/><rect x="0" y="1" width="2" height="1" fill="#000000"/><rect x="4" y="1" width="2" height="1" fill="#000000"/><rect x="4" y="2" width="2" height="1" fill="#000000"/><rect x="3" y="3" width="2" height="1" fill="#000000"/><rect x="2" y="4" width="2" height="1" fill="#000000"/><rect x="2" y="5" width="2" height="1" fill="#000000"/><rect x="2" y="7" width="2" height="1" fill="#000000"/><rect x="2" y="8" width="2" height="1" fill="#000000"/></svg>
<svg class="a" style="left:753px;top:173px" width="16" height="14" shape-rendering="crispEdges"><rect x="4" y="3" width="2" height="1" fill="#000"/><rect x="10" y="3" width="2" height="1" fill="#000"/><rect x="5" y="4" width="2" height="1" fill="#000"/><rect x="9" y="4" width="2" height="1" fill="#000"/><rect x="6" y="5" width="2" height="1" fill="#000"/><rect x="8" y="5" width="2" height="1" fill="#000"/><rect x="7" y="6" width="2" height="1" fill="#000"/><rect x="7" y="6" width="2" height="1" fill="#000"/><rect x="8" y="7" width="2" height="1" fill="#000"/><rect x="6" y="7" width="2" height="1" fill="#000"/><rect x="9" y="8" width="2" height="1" fill="#000"/><rect x="5" y="8" width="2" height="1" fill="#000"/><rect x="10" y="9" width="2" height="1" fill="#000"/><rect x="4" y="9" width="2" height="1" fill="#000"/></svg>
<div class="t " style="left:201px;top:201px;"><span class="u">П</span>апка:</div>
<div class="a sunk" style="left:244px;top:195px;width:205px;height:22px;background:#fff"></div>
<div class="a raised" style="left:433px;top:197px;width:14px;height:18px;"></div>
<svg class="a" style="left:436px;top:204px" width="8" height="4" shape-rendering="crispEdges"><rect x="0" y="0" width="7" height="1"/><rect x="1" y="1" width="5" height="1"/><rect x="2" y="2" width="3" height="1"/><rect x="3" y="3" width="1" height="1"/></svg>
<svg class="a" style="left:250px;top:203px" width="17" height="10" shape-rendering="crispEdges"><rect x="2" y="0" width="14" height="1" fill="#000000"/><rect x="1" y="1" width="1" height="1" fill="#000000"/><rect x="2" y="1" width="12" height="1" fill="#c0c0c0"/><rect x="14" y="1" width="1" height="1" fill="#dfdfdf"/><rect x="15" y="1" width="2" height="1" fill="#000000"/><rect x="0" y="2" width="1" height="1" fill="#000000"/><rect x="1" y="2" width="14" height="1" fill="#dfdfdf"/><rect x="15" y="2" width="1" height="1" fill="#808080"/><rect x="16" y="2" width="1" height="1" fill="#000000"/><rect x="0" y="3" width="1" height="1" fill="#000000"/><rect x="1" y="3" width="10" height="1" fill="#c0c0c0"/><rect x="11" y="3" width="2" height="1" fill="#00ff00"/><rect x="13" y="3" width="2" height="1" fill="#c0c0c0"/><rect x="15" y="3" width="1" height="1" fill="#808080"/><rect x="16" y="3" width="1" height="1" fill="#000000"/><rect x="0" y="4" width="4" height="1" fill="#0000ff"/><rect x="4" y="4" width="11" height="1" fill="#808080"/><rect x="15" y="4" width="2" height="1" fill="#000000"/><rect x="0" y="5" width="1" height="1" fill="#0000ff"/><rect x="1" y="5" width="2" height="1" fill="#0080ff"/><rect x="3" y="5" width="1" height="1" fill="#0000ff"/><rect x="4" y="5" width="1" height="1" fill="#808080"/><rect x="5" y="5" width="8" height="1" fill="#000000"/><rect x="13" y="5" width="1" height="1" fill="#808080"/><rect x="14" y="5" width="2" height="1" fill="#000000"/><rect x="0" y="6" width="1" height="1" fill="#0000ff"/><rect x="1" y="6" width="2" height="1" fill="#0080ff"/><rect x="3" y="6" width="1" height="1" fill="#0000ff"/><rect x="4" y="6" width="1" height="1" fill="#000000"/><rect x="5" y="6" width="2" height="1" fill="#ffe0b0"/><rect x="7" y="6" width="2" height="1" fill="#ffffff"/><rect x="9" y="6" width="6" height="1" fill="#000000"/><rect x="0" y="7" width="1" height="1" fill="#0000ff"/><rect x="1" y="7" width="2" height="1" fill="#000080"/><rect x="3" y="7" width="1" height="1" fill="#0000ff"/><rect x="4" y="7" width="1" height="1" fill="#ffe0b0"/><rect x="5" y="7" width="1" height="1" fill="#ffffff"/><rect x="6" y="7" width="4" height="1" fill="#ffe0b0"/><rect x="10" y="7" width="2" height="1" fill="#000000"/><rect x="4" y="8" width="1" height="1" fill="#000000"/><rect x="5" y="8" width="5" height="1" fill="#ffe0b0"/><rect x="10" y="8" width="1" height="1" fill="#000000"/><rect x="5" y="9" width="5" height="1" fill="#000000"/></svg>
<div class="t " style="left:273px;top:200px;">(C:)</div>
<div class="a raised" style="left:456px;top:195px;width:23px;height:22px;"></div>
<svg class="a" style="left:459px;top:199px" width="16" height="13" shape-rendering="crispEdges"><rect x="2" y="0" width="5" height="1" fill="#000000"/><rect x="1" y="1" width="1" height="1" fill="#000000"/><rect x="2" y="1" width="1" height="1" fill="#ffff00"/><rect x="3" y="1" width="1" height="1" fill="#c0c0c0"/><rect x="4" y="1" width="1" height="1" fill="#ffff00"/><rect x="5" y="1" width="1" height="1" fill="#c0c0c0"/><rect x="6" y="1" width="1" height="1" fill="#ffff00"/><rect x="7" y="1" width="1" height="1" fill="#000000"/><rect x="0" y="2" width="15" height="1" fill="#000000"/><rect x="0" y="3" width="1" height="1" fill="#000000"/><rect x="1" y="3" width="1" height="1" fill="#ffff00"/><rect x="2" y="3" width="1" height="1" fill="#c0c0c0"/><rect x="3" y="3" width="1" height="1" fill="#ffff00"/><rect x="4" y="3" width="1" height="1" fill="#c0c0c0"/><rect x="5" y="3" width="1" height="1" fill="#ffff00"/><rect x="6" y="3" width="1" height="1" fill="#c0c0c0"/><rect x="7" y="3" width="1" height="1" fill="#ffff00"/><rect x="8" y="3" width="1" height="1" fill="#c0c0c0"/><rect x="9" y="3" width="1" height="1" fill="#ffff00"/><rect x="10" y="3" width="1" height="1" fill="#c0c0c0"/><rect x="11" y="3" width="1" height="1" fill="#ffff00"/><rect x="12" y="3" width="1" height="1" fill="#c0c0c0"/><rect x="13" y="3" width="1" height="1" fill="#ffff00"/><rect x="14" y="3" width="1" height="1" fill="#000000"/><rect x="0" y="4" width="1" height="1" fill="#000000"/><rect x="1" y="4" width="1" height="1" fill="#c0c0c0"/><rect x="2" y="4" width="1" height="1" fill="#ffff00"/><rect x="3" y="4" width="1" height="1" fill="#c0c0c0"/><rect x="4" y="4" width="1" height="1" fill="#ffff00"/><rect x="5" y="4" width="1" height="1" fill="#000000"/><rect x="6" y="4" width="1" height="1" fill="#ffff00"/><rect x="7" y="4" width="1" height="1" fill="#c0c0c0"/><rect x="8" y="4" width="1" height="1" fill="#ffff00"/><rect x="9" y="4" width="1" height="1" fill="#c0c0c0"/><rect x="10" y="4" width="1" height="1" fill="#ffff00"/><rect x="11" y="4" width="1" height="1" fill="#c0c0c0"/><rect x="12" y="4" width="1" height="1" fill="#ffff00"/><rect x="13" y="4" width="1" height="1" fill="#c0c0c0"/><rect x="14" y="4" width="1" height="1" fill="#000000"/><rect x="0" y="5" width="1" height="1" fill="#000000"/><rect x="1" y="5" width="1" height="1" fill="#ffff00"/><rect x="2" y="5" width="1" height="1" fill="#c0c0c0"/><rect x="3" y="5" width="1" height="1" fill="#ffff00"/><rect x="4" y="5" width="3" height="1" fill="#000000"/><rect x="7" y="5" width="1" height="1" fill="#ffff00"/><rect x="8" y="5" width="1" height="1" fill="#c0c0c0"/><rect x="9" y="5" width="1" height="1" fill="#ffff00"/><rect x="10" y="5" width="1" height="1" fill="#c0c0c0"/><rect x="11" y="5" width="1" height="1" fill="#ffff00"/><rect x="12" y="5" width="1" height="1" fill="#c0c0c0"/><rect x="13" y="5" width="1" height="1" fill="#ffff00"/><rect x="14" y="5" width="1" height="1" fill="#000000"/><rect x="0" y="6" width="1" height="1" fill="#000000"/><rect x="1" y="6" width="1" height="1" fill="#c0c0c0"/><rect x="2" y="6" width="1" height="1" fill="#ffff00"/><rect x="3" y="6" width="5" height="1" fill="#000000"/><rect x="8" y="6" width="1" height="1" fill="#ffff00"/><rect x="9" y="6" width="1" height="1" fill="#c0c0c0"/><rect x="10" y="6" width="1" height="1" fill="#ffff00"/><rect x="11" y="6" width="1" height="1" fill="#c0c0c0"/><rect x="12" y="6" width="1" height="1" fill="#ffff00"/><rect x="13" y="6" width="1" height="1" fill="#c0c0c0"/><rect x="14" y="6" width="1" height="1" fill="#000000"/><rect x="0" y="7" width="1" height="1" fill="#000000"/><rect x="1" y="7" width="1" height="1" fill="#ffff00"/><rect x="2" y="7" width="1" height="1" fill="#c0c0c0"/><rect x="3" y="7" width="1" height="1" fill="#ffff00"/><rect x="4" y="7" width="1" height="1" fill="#c0c0c0"/><rect x="5" y="7" width="1" height="1" fill="#000000"/><rect x="6" y="7" width="1" height="1" fill="#ffff00"/><rect x="7" y="7" width="1" height="1" fill="#c0c0c0"/><rect x="8" y="7" width="1" height="1" fill="#ffff00"/><rect x="9" y="7" width="1" height="1" fill="#c0c0c0"/><rect x="10" y="7" width="1" height="1" fill="#ffff00"/><rect x="11" y="7" width="1" height="1" fill="#c0c0c0"/><rect x="12" y="7" width="2" height="1" fill="#ffff00"/><rect x="14" y="7" width="1" height="1" fill="#000000"/><rect x="0" y="8" width="1" height="1" fill="#000000"/><rect x="1" y="8" width="1" height="1" fill="#c0c0c0"/><rect x="2" y="8" width="1" height="1" fill="#ffff00"/><rect x="3" y="8" width="1" height="1" fill="#c0c0c0"/><rect x="4" y="8" width="1" height="1" fill="#ffff00"/><rect x="5" y="8" width="1" height="1" fill="#000000"/><rect x="6" y="8" width="1" height="1" fill="#ffff00"/><rect x="7" y="8" width="1" height="1" fill="#c0c0c0"/><rect x="8" y="8" width="1" height="1" fill="#ffff00"/><rect x="9" y="8" width="1" height="1" fill="#c0c0c0"/><rect x="10" y="8" width="1" height="1" fill="#ffff00"/><rect x="11" y="8" width="1" height="1" fill="#c0c0c0"/><rect x="12" y="8" width="1" height="1" fill="#ffff00"/><rect x="13" y="8" width="1" height="1" fill="#c0c0c0"/><rect x="14" y="8" width="1" height="1" fill="#000000"/><rect x="0" y="9" width="1" height="1" fill="#000000"/><rect x="1" y="9" width="1" height="1" fill="#ffff00"/><rect x="2" y="9" width="1" height="1" fill="#c0c0c0"/><rect x="3" y="9" width="1" height="1" fill="#ffff00"/><rect x="4" y="9" width="1" height="1" fill="#c0c0c0"/><rect x="5" y="9" width="6" height="1" fill="#000000"/><rect x="11" y="9" width="1" height="1" fill="#ffff00"/><rect x="12" y="9" width="1" height="1" fill="#c0c0c0"/><rect x="13" y="9" width="1" height="1" fill="#ffff00"/><rect x="14" y="9" width="1" height="1" fill="#000000"/><rect x="0" y="10" width="1" height="1" fill="#000000"/><rect x="1" y="10" width="1" height="1" fill="#c0c0c0"/><rect x="2" y="10" width="1" height="1" fill="#ffff00"/><rect x="3" y="10" width="1" height="1" fill="#c0c0c0"/><rect x="4" y="10" width="1" height="1" fill="#ffff00"/><rect x="5" y="10" width="1" height="1" fill="#c0c0c0"/><rect x="6" y="10" width="1" height="1" fill="#ffff00"/><rect x="7" y="10" width="1" height="1" fill="#c0c0c0"/><rect x="8" y="10" width="1" height="1" fill="#ffff00"/><rect x="9" y="10" width="1" height="1" fill="#c0c0c0"/><rect x="10" y="10" width="1" height="1" fill="#ffff00"/><rect x="11" y="10" width="1" height="1" fill="#c0c0c0"/><rect x="12" y="10" width="1" height="1" fill="#ffff00"/><rect x="13" y="10" width="1" height="1" fill="#c0c0c0"/><rect x="14" y="10" width="1" height="1" fill="#000000"/><rect x="0" y="11" width="1" height="1" fill="#000000"/><rect x="1" y="11" width="1" height="1" fill="#ffff00"/><rect x="2" y="11" width="1" height="1" fill="#c0c0c0"/><rect x="3" y="11" width="1" height="1" fill="#ffff00"/><rect x="4" y="11" width="1" height="1" fill="#c0c0c0"/><rect x="5" y="11" width="1" height="1" fill="#ffff00"/><rect x="6" y="11" width="1" height="1" fill="#c0c0c0"/><rect x="7" y="11" width="1" height="1" fill="#ffff00"/><rect x="8" y="11" width="1" height="1" fill="#c0c0c0"/><rect x="9" y="11" width="1" height="1" fill="#ffff00"/><rect x="10" y="11" width="1" height="1" fill="#c0c0c0"/><rect x="11" y="11" width="1" height="1" fill="#ffff00"/><rect x="12" y="11" width="1" height="1" fill="#c0c0c0"/><rect x="13" y="11" width="1" height="1" fill="#ffff00"/><rect x="14" y="11" width="1" height="1" fill="#000000"/><rect x="0" y="12" width="15" height="1" fill="#000000"/></svg>
<div class="a raised" style="left:487px;top:195px;width:23px;height:22px;"></div>
<svg class="a" style="left:490px;top:198px" width="16" height="16" shape-rendering="crispEdges"><rect x="14" y="0" width="1" height="1" fill="#800000"/><rect x="15" y="0" width="1" height="1" fill="#ff0000"/><rect x="0" y="1" width="4" height="1" fill="#008080"/><rect x="4" y="1" width="6" height="1" fill="#808080"/><rect x="13" y="1" width="1" height="1" fill="#800000"/><rect x="14" y="1" width="1" height="1" fill="#ff0000"/><rect x="15" y="1" width="1" height="1" fill="#800000"/><rect x="0" y="2" width="1" height="1" fill="#008080"/><rect x="1" y="2" width="1" height="1" fill="#00ffff"/><rect x="2" y="2" width="2" height="1" fill="#0000ff"/><rect x="4" y="2" width="6" height="1" fill="#dfdfdf"/><rect x="12" y="2" width="2" height="1" fill="#ffff00"/><rect x="14" y="2" width="1" height="1" fill="#800000"/><rect x="0" y="3" width="1" height="1" fill="#008080"/><rect x="1" y="3" width="2" height="1" fill="#0000ff"/><rect x="3" y="3" width="5" height="1" fill="#ffffff"/><rect x="8" y="3" width="1" height="1" fill="#dfdfdf"/><rect x="11" y="3" width="2" height="1" fill="#ffff00"/><rect x="13" y="3" width="1" height="1" fill="#000000"/><rect x="15" y="3" width="1" height="1" fill="#0000ff"/><rect x="0" y="4" width="1" height="1" fill="#008080"/><rect x="1" y="4" width="1" height="1" fill="#0000ff"/><rect x="2" y="4" width="5" height="1" fill="#ffffff"/><rect x="7" y="4" width="1" height="1" fill="#dfdfdf"/><rect x="10" y="4" width="2" height="1" fill="#ffff00"/><rect x="12" y="4" width="1" height="1" fill="#000000"/><rect x="14" y="4" width="2" height="1" fill="#0000ff"/><rect x="0" y="5" width="1" height="1" fill="#008080"/><rect x="1" y="5" width="1" height="1" fill="#0000ff"/><rect x="2" y="5" width="4" height="1" fill="#ffffff"/><rect x="6" y="5" width="1" height="1" fill="#dfdfdf"/><rect x="9" y="5" width="2" height="1" fill="#ffff00"/><rect x="11" y="5" width="1" height="1" fill="#000000"/><rect x="15" y="5" width="1" height="1" fill="#0000ff"/><rect x="0" y="6" width="1" height="1" fill="#808080"/><rect x="1" y="6" width="4" height="1" fill="#ffffff"/><rect x="5" y="6" width="1" height="1" fill="#dfdfdf"/><rect x="8" y="6" width="2" height="1" fill="#ffff00"/><rect x="10" y="6" width="1" height="1" fill="#000000"/><rect x="15" y="6" width="1" height="1" fill="#0000ff"/><rect x="0" y="7" width="1" height="1" fill="#808080"/><rect x="1" y="7" width="3" height="1" fill="#ffffff"/><rect x="4" y="7" width="1" height="1" fill="#000000"/><rect x="7" y="7" width="2" height="1" fill="#ffff00"/><rect x="9" y="7" width="1" height="1" fill="#000000"/><rect x="15" y="7" width="1" height="1" fill="#808080"/><rect x="0" y="8" width="1" height="1" fill="#808080"/><rect x="1" y="8" width="2" height="1" fill="#ffffff"/><rect x="3" y="8" width="1" height="1" fill="#000000"/><rect x="4" y="8" width="2" height="1" fill="#ffffff"/><rect x="6" y="8" width="3" height="1" fill="#000000"/><rect x="15" y="8" width="1" height="1" fill="#808080"/><rect x="0" y="9" width="1" height="1" fill="#808080"/><rect x="1" y="9" width="1" height="1" fill="#ffffff"/><rect x="2" y="9" width="1" height="1" fill="#000000"/><rect x="3" y="9" width="4" height="1" fill="#ffffff"/><rect x="7" y="9" width="1" height="1" fill="#000000"/><rect x="15" y="9" width="1" height="1" fill="#808080"/><rect x="0" y="10" width="1" height="1" fill="#808080"/><rect x="1" y="10" width="1" height="1" fill="#ffffff"/><rect x="2" y="10" width="1" height="1" fill="#000000"/><rect x="3" y="10" width="4" height="1" fill="#ffffff"/><rect x="7" y="10" width="1" height="1" fill="#000000"/><rect x="15" y="10" width="1" height="1" fill="#808080"/><rect x="0" y="11" width="1" height="1" fill="#808080"/><rect x="1" y="11" width="2" height="1" fill="#ffffff"/><rect x="3" y="11" width="1" height="1" fill="#000000"/><rect x="4" y="11" width="2" height="1" fill="#ffffff"/><rect x="6" y="11" width="1" height="1" fill="#000000"/><rect x="14" y="11" width="1" height="1" fill="#0000ff"/><rect x="15" y="11" width="1" height="1" fill="#808080"/><rect x="0" y="12" width="1" height="1" fill="#808080"/><rect x="1" y="12" width="1" height="1" fill="#0000ff"/><rect x="2" y="12" width="2" height="1" fill="#ffffff"/><rect x="4" y="12" width="2" height="1" fill="#000000"/><rect x="13" y="12" width="2" height="1" fill="#0000ff"/><rect x="15" y="12" width="1" height="1" fill="#008080"/><rect x="0" y="13" width="1" height="1" fill="#008080"/><rect x="1" y="13" width="2" height="1" fill="#0000ff"/><rect x="3" y="13" width="4" height="1" fill="#ffffff"/><rect x="10" y="13" width="2" height="1" fill="#dfdfdf"/><rect x="12" y="13" width="2" height="1" fill="#0000ff"/><rect x="14" y="13" width="1" height="1" fill="#00ffff"/><rect x="15" y="13" width="1" height="1" fill="#008080"/><rect x="0" y="14" width="1" height="1" fill="#008080"/><rect x="1" y="14" width="1" height="1" fill="#00ffff"/><rect x="2" y="14" width="2" height="1" fill="#0000ff"/><rect x="4" y="14" width="7" height="1" fill="#dfdfdf"/><rect x="11" y="14" width="3" height="1" fill="#0000ff"/><rect x="14" y="14" width="1" height="1" fill="#00ffff"/><rect x="15" y="14" width="1" height="1" fill="#008080"/><rect x="0" y="15" width="16" height="1" fill="#000000"/></svg>
<div class="a raised" style="left:518px;top:195px;width:23px;height:22px;"></div>
<svg class="a" style="left:521px;top:198px" width="16" height="15" shape-rendering="crispEdges"><rect x="10" y="0" width="1" height="1" fill="#000000"/><rect x="10" y="2" width="1" height="1" fill="#000000"/><rect x="7" y="3" width="1" height="1" fill="#000000"/><rect x="10" y="3" width="1" height="1" fill="#000000"/><rect x="13" y="3" width="1" height="1" fill="#000000"/><rect x="8" y="4" width="4" height="1" fill="#000000"/><rect x="2" y="5" width="4" height="1" fill="#000000"/><rect x="10" y="5" width="4" height="1" fill="#000000"/><rect x="15" y="5" width="1" height="1" fill="#000000"/><rect x="1" y="6" width="1" height="1" fill="#000000"/><rect x="2" y="6" width="1" height="1" fill="#ffff00"/><rect x="3" y="6" width="1" height="1" fill="#c0c0c0"/><rect x="4" y="6" width="1" height="1" fill="#ffff00"/><rect x="5" y="6" width="1" height="1" fill="#c0c0c0"/><rect x="6" y="6" width="1" height="1" fill="#000000"/><rect x="9" y="6" width="2" height="1" fill="#000000"/><rect x="12" y="6" width="1" height="1" fill="#000000"/><rect x="0" y="7" width="10" height="1" fill="#000000"/><rect x="13" y="7" width="1" height="1" fill="#000000"/><rect x="0" y="8" width="1" height="1" fill="#000000"/><rect x="1" y="8" width="1" height="1" fill="#ffff00"/><rect x="2" y="8" width="1" height="1" fill="#c0c0c0"/><rect x="3" y="8" width="1" height="1" fill="#ffff00"/><rect x="4" y="8" width="1" height="1" fill="#c0c0c0"/><rect x="5" y="8" width="1" height="1" fill="#ffff00"/><rect x="6" y="8" width="1" height="1" fill="#c0c0c0"/><rect x="7" y="8" width="1" height="1" fill="#ffff00"/><rect x="8" y="8" width="1" height="1" fill="#c0c0c0"/><rect x="9" y="8" width="1" height="1" fill="#000000"/><rect x="14" y="8" width="1" height="1" fill="#000000"/><rect x="0" y="9" width="1" height="1" fill="#000000"/><rect x="1" y="9" width="1" height="1" fill="#c0c0c0"/><rect x="2" y="9" width="1" height="1" fill="#ffff00"/><rect x="3" y="9" width="1" height="1" fill="#c0c0c0"/><rect x="4" y="9" width="1" height="1" fill="#ffff00"/><rect x="5" y="9" width="1" height="1" fill="#c0c0c0"/><rect x="6" y="9" width="1" height="1" fill="#ffff00"/><rect x="7" y="9" width="1" height="1" fill="#c0c0c0"/><rect x="8" y="9" width="1" height="1" fill="#ffff00"/><rect x="9" y="9" width="1" height="1" fill="#000000"/><rect x="0" y="10" width="1" height="1" fill="#000000"/><rect x="1" y="10" width="1" height="1" fill="#ffff00"/><rect x="2" y="10" width="1" height="1" fill="#c0c0c0"/><rect x="3" y="10" width="1" height="1" fill="#ffff00"/><rect x="4" y="10" width="1" height="1" fill="#c0c0c0"/><rect x="5" y="10" width="1" height="1" fill="#ffff00"/><rect x="6" y="10" width="1" height="1" fill="#c0c0c0"/><rect x="7" y="10" width="1" height="1" fill="#ffff00"/><rect x="8" y="10" width="1" height="1" fill="#c0c0c0"/><rect x="9" y="10" width="1" height="1" fill="#000000"/><rect x="0" y="11" width="1" height="1" fill="#000000"/><rect x="1" y="11" width="1" height="1" fill="#c0c0c0"/><rect x="2" y="11" width="1" height="1" fill="#ffff00"/><rect x="3" y="11" width="1" height="1" fill="#c0c0c0"/><rect x="4" y="11" width="1" height="1" fill="#ffff00"/><rect x="5" y="11" width="1" height="1" fill="#c0c0c0"/><rect x="6" y="11" width="1" height="1" fill="#ffff00"/><rect x="7" y="11" width="1" height="1" fill="#c0c0c0"/><rect x="8" y="11" width="1" height="1" fill="#ffff00"/><rect x="9" y="11" width="1" height="1" fill="#000000"/><rect x="0" y="12" width="1" height="1" fill="#000000"/><rect x="1" y="12" width="1" height="1" fill="#ffff00"/><rect x="2" y="12" width="1" height="1" fill="#c0c0c0"/><rect x="3" y="12" width="1" height="1" fill="#ffff00"/><rect x="4" y="12" width="1" height="1" fill="#c0c0c0"/><rect x="5" y="12" width="1" height="1" fill="#ffff00"/><rect x="6" y="12" width="1" height="1" fill="#c0c0c0"/><rect x="7" y="12" width="1" height="1" fill="#ffff00"/><rect x="8" y="12" width="1" height="1" fill="#c0c0c0"/><rect x="9" y="12" width="1" height="1" fill="#000000"/><rect x="0" y="13" width="1" height="1" fill="#000000"/><rect x="1" y="13" width="1" height="1" fill="#c0c0c0"/><rect x="2" y="13" width="1" height="1" fill="#ffff00"/><rect x="3" y="13" width="1" height="1" fill="#c0c0c0"/><rect x="4" y="13" width="1" height="1" fill="#ffff00"/><rect x="5" y="13" width="1" height="1" fill="#c0c0c0"/><rect x="6" y="13" width="1" height="1" fill="#ffff00"/><rect x="7" y="13" width="1" height="1" fill="#c0c0c0"/><rect x="8" y="13" width="1" height="1" fill="#ffff00"/><rect x="9" y="13" width="1" height="1" fill="#000000"/><rect x="0" y="14" width="10" height="1" fill="#000000"/></svg>
<div class="a dith" style="left:549px;top:195px;width:23px;height:22px;box-shadow:inset 1px 1px #000,inset -1px -1px #fff,inset 2px 2px #808080,inset -2px -2px #dfdfdf"></div>
<svg class="a" style="left:553px;top:200px" width="17" height="14" shape-rendering="crispEdges"><rect x="0" y="0" width="17" height="1" fill="#000000"/><rect x="0" y="1" width="1" height="1" fill="#000000"/><rect x="1" y="1" width="15" height="1" fill="#000080"/><rect x="16" y="1" width="1" height="1" fill="#000000"/><rect x="0" y="2" width="1" height="1" fill="#000000"/><rect x="1" y="2" width="15" height="1" fill="#ffffff"/><rect x="16" y="2" width="1" height="1" fill="#000000"/><rect x="0" y="3" width="1" height="1" fill="#000000"/><rect x="1" y="3" width="15" height="1" fill="#ffffff"/><rect x="16" y="3" width="1" height="1" fill="#000000"/><rect x="0" y="4" width="1" height="1" fill="#000000"/><rect x="1" y="4" width="1" height="1" fill="#ffffff"/><rect x="2" y="4" width="1" height="1" fill="#000080"/><rect x="3" y="4" width="1" height="1" fill="#0000ff"/><rect x="4" y="4" width="1" height="1" fill="#ffffff"/><rect x="5" y="4" width="2" height="1" fill="#000000"/><rect x="7" y="4" width="3" height="1" fill="#ffffff"/><rect x="10" y="4" width="1" height="1" fill="#000080"/><rect x="11" y="4" width="1" height="1" fill="#0000ff"/><rect x="12" y="4" width="1" height="1" fill="#ffffff"/><rect x="13" y="4" width="2" height="1" fill="#000000"/><rect x="15" y="4" width="1" height="1" fill="#ffffff"/><rect x="16" y="4" width="1" height="1" fill="#000000"/><rect x="0" y="5" width="1" height="1" fill="#000000"/><rect x="1" y="5" width="1" height="1" fill="#ffffff"/><rect x="2" y="5" width="2" height="1" fill="#0000ff"/><rect x="4" y="5" width="6" height="1" fill="#ffffff"/><rect x="10" y="5" width="2" height="1" fill="#0000ff"/><rect x="12" y="5" width="4" height="1" fill="#ffffff"/><rect x="16" y="5" width="1" height="1" fill="#000000"/><rect x="0" y="6" width="1" height="1" fill="#000000"/><rect x="1" y="6" width="15" height="1" fill="#ffffff"/><rect x="16" y="6" width="1" height="1" fill="#000000"/><rect x="0" y="7" width="1" height="1" fill="#000000"/><rect x="1" y="7" width="1" height="1" fill="#ffffff"/><rect x="2" y="7" width="1" height="1" fill="#000080"/><rect x="3" y="7" width="1" height="1" fill="#0000ff"/><rect x="4" y="7" width="1" height="1" fill="#ffffff"/><rect x="5" y="7" width="2" height="1" fill="#000000"/><rect x="7" y="7" width="3" height="1" fill="#ffffff"/><rect x="10" y="7" width="1" height="1" fill="#000080"/><rect x="11" y="7" width="1" height="1" fill="#0000ff"/><rect x="12" y="7" width="1" height="1" fill="#ffffff"/><rect x="13" y="7" width="2" height="1" fill="#000000"/><rect x="15" y="7" width="1" height="1" fill="#ffffff"/><rect x="16" y="7" width="1" height="1" fill="#000000"/><rect x="0" y="8" width="1" height="1" fill="#000000"/><rect x="1" y="8" width="1" height="1" fill="#ffffff"/><rect x="2" y="8" width="2" height="1" fill="#0000ff"/><rect x="4" y="8" width="6" height="1" fill="#ffffff"/><rect x="10" y="8" width="2" height="1" fill="#0000ff"/><rect x="12" y="8" width="4" height="1" fill="#ffffff"/><rect x="16" y="8" width="1" height="1" fill="#000000"/><rect x="0" y="9" width="1" height="1" fill="#000000"/><rect x="1" y="9" width="15" height="1" fill="#ffffff"/><rect x="16" y="9" width="1" height="1" fill="#000000"/><rect x="0" y="10" width="1" height="1" fill="#000000"/><rect x="1" y="10" width="1" height="1" fill="#ffffff"/><rect x="2" y="10" width="1" height="1" fill="#000080"/><rect x="3" y="10" width="1" height="1" fill="#0000ff"/><rect x="4" y="10" width="1" height="1" fill="#ffffff"/><rect x="5" y="10" width="2" height="1" fill="#000000"/><rect x="7" y="10" width="3" height="1" fill="#ffffff"/><rect x="10" y="10" width="1" height="1" fill="#000080"/><rect x="11" y="10" width="1" height="1" fill="#0000ff"/><rect x="12" y="10" width="1" height="1" fill="#ffffff"/><rect x="13" y="10" width="2" height="1" fill="#000000"/><rect x="15" y="10" width="1" height="1" fill="#ffffff"/><rect x="16" y="10" width="1" height="1" fill="#000000"/><rect x="0" y="11" width="1" height="1" fill="#000000"/><rect x="1" y="11" width="1" height="1" fill="#ffffff"/><rect x="2" y="11" width="2" height="1" fill="#0000ff"/><rect x="4" y="11" width="6" height="1" fill="#ffffff"/><rect x="10" y="11" width="2" height="1" fill="#0000ff"/><rect x="12" y="11" width="4" height="1" fill="#ffffff"/><rect x="16" y="11" width="1" height="1" fill="#000000"/><rect x="0" y="12" width="1" height="1" fill="#000000"/><rect x="1" y="12" width="15" height="1" fill="#ffffff"/><rect x="16" y="12" width="1" height="1" fill="#000000"/><rect x="0" y="13" width="17" height="1" fill="#000000"/></svg>
<div class="a raised" style="left:572px;top:195px;width:23px;height:22px;"></div>
<svg class="a" style="left:575px;top:199px" width="16" height="14" shape-rendering="crispEdges"><rect x="0" y="0" width="16" height="1" fill="#000000"/><rect x="0" y="1" width="1" height="1" fill="#000000"/><rect x="1" y="1" width="14" height="1" fill="#000080"/><rect x="15" y="1" width="1" height="1" fill="#000000"/><rect x="0" y="2" width="1" height="1" fill="#000000"/><rect x="1" y="2" width="14" height="1" fill="#ffffff"/><rect x="15" y="2" width="1" height="1" fill="#000000"/><rect x="0" y="3" width="1" height="1" fill="#000000"/><rect x="1" y="3" width="6" height="1" fill="#ffffff"/><rect x="7" y="3" width="3" height="1" fill="#000000"/><rect x="10" y="3" width="1" height="1" fill="#ffffff"/><rect x="11" y="3" width="3" height="1" fill="#000000"/><rect x="14" y="3" width="1" height="1" fill="#ffffff"/><rect x="15" y="3" width="1" height="1" fill="#000000"/><rect x="0" y="4" width="1" height="1" fill="#000000"/><rect x="1" y="4" width="14" height="1" fill="#ffffff"/><rect x="15" y="4" width="1" height="1" fill="#000000"/><rect x="0" y="5" width="1" height="1" fill="#000000"/><rect x="1" y="5" width="1" height="1" fill="#ffffff"/><rect x="2" y="5" width="12" height="1" fill="#000080"/><rect x="14" y="5" width="1" height="1" fill="#ffffff"/><rect x="15" y="5" width="1" height="1" fill="#000000"/><rect x="0" y="6" width="1" height="1" fill="#000000"/><rect x="1" y="6" width="14" height="1" fill="#ffffff"/><rect x="15" y="6" width="1" height="1" fill="#000000"/><rect x="0" y="7" width="1" height="1" fill="#000000"/><rect x="1" y="7" width="1" height="1" fill="#ffffff"/><rect x="2" y="7" width="1" height="1" fill="#000080"/><rect x="3" y="7" width="2" height="1" fill="#ffffff"/><rect x="5" y="7" width="3" height="1" fill="#000000"/><rect x="8" y="7" width="1" height="1" fill="#ffffff"/><rect x="9" y="7" width="4" height="1" fill="#000000"/><rect x="13" y="7" width="2" height="1" fill="#ffffff"/><rect x="15" y="7" width="1" height="1" fill="#000000"/><rect x="0" y="8" width="1" height="1" fill="#000000"/><rect x="1" y="8" width="14" height="1" fill="#ffffff"/><rect x="15" y="8" width="1" height="1" fill="#000000"/><rect x="0" y="9" width="1" height="1" fill="#000000"/><rect x="1" y="9" width="1" height="1" fill="#ffffff"/><rect x="2" y="9" width="1" height="1" fill="#000080"/><rect x="3" y="9" width="2" height="1" fill="#ffffff"/><rect x="5" y="9" width="3" height="1" fill="#000000"/><rect x="8" y="9" width="1" height="1" fill="#ffffff"/><rect x="9" y="9" width="4" height="1" fill="#000000"/><rect x="13" y="9" width="2" height="1" fill="#ffffff"/><rect x="15" y="9" width="1" height="1" fill="#000000"/><rect x="0" y="10" width="1" height="1" fill="#000000"/><rect x="1" y="10" width="14" height="1" fill="#ffffff"/><rect x="15" y="10" width="1" height="1" fill="#000000"/><rect x="0" y="11" width="1" height="1" fill="#000000"/><rect x="1" y="11" width="14" height="1" fill="#ffffff"/><rect x="15" y="11" width="1" height="1" fill="#000000"/><rect x="0" y="12" width="1" height="1" fill="#000000"/><rect x="1" y="12" width="14" height="1" fill="#ffffff"/><rect x="15" y="12" width="1" height="1" fill="#000000"/><rect x="0" y="13" width="16" height="1" fill="#000000"/></svg>
<div class="a sunk" style="left:196px;top:223px;width:408px;height:137px;background:#fff"></div>
<div class="a sunk" style="left:610px;top:195px;width:153px;height:165px;background:#fff"></div>
<svg class="a" style="left:197px;top:226px" width="16" height="13" shape-rendering="crispEdges"><rect x="3" y="0" width="5" height="1" fill="#a8a800"/><rect x="2" y="1" width="1" height="1" fill="#a8a800"/><rect x="3" y="1" width="5" height="1" fill="#ffffff"/><rect x="8" y="1" width="1" height="1" fill="#a8a800"/><rect x="9" y="1" width="1" height="1" fill="#000000"/><rect x="1" y="2" width="14" height="1" fill="#a8a800"/><rect x="1" y="3" width="1" height="1" fill="#a8a800"/><rect x="2" y="3" width="1" height="1" fill="#ffffff"/><rect x="3" y="3" width="11" height="1" fill="#ffff80"/><rect x="14" y="3" width="1" height="1" fill="#a8a800"/><rect x="15" y="3" width="1" height="1" fill="#000000"/><rect x="1" y="4" width="1" height="1" fill="#a8a800"/><rect x="2" y="4" width="12" height="1" fill="#ffff80"/><rect x="14" y="4" width="1" height="1" fill="#a8a800"/><rect x="15" y="4" width="1" height="1" fill="#000000"/><rect x="1" y="5" width="1" height="1" fill="#a8a800"/><rect x="2" y="5" width="10" height="1" fill="#ffff80"/><rect x="12" y="5" width="1" height="1" fill="#ffcc99"/><rect x="13" y="5" width="1" height="1" fill="#ffff80"/><rect x="14" y="5" width="1" height="1" fill="#a8a800"/><rect x="15" y="5" width="1" height="1" fill="#000000"/><rect x="1" y="6" width="1" height="1" fill="#a8a800"/><rect x="2" y="6" width="9" height="1" fill="#ffff80"/><rect x="11" y="6" width="1" height="1" fill="#ffcc99"/><rect x="12" y="6" width="1" height="1" fill="#ffff80"/><rect x="13" y="6" width="1" height="1" fill="#ffcc99"/><rect x="14" y="6" width="1" height="1" fill="#a8a800"/><rect x="15" y="6" width="1" height="1" fill="#000000"/><rect x="1" y="7" width="1" height="1" fill="#a8a800"/><rect x="2" y="7" width="7" height="1" fill="#ffff80"/><rect x="9" y="7" width="1" height="1" fill="#ffcc99"/><rect x="10" y="7" width="1" height="1" fill="#ffff80"/><rect x="11" y="7" width="1" height="1" fill="#ffcc99"/><rect x="12" y="7" width="1" height="1" fill="#ffff80"/><rect x="13" y="7" width="1" height="1" fill="#ffcc99"/><rect x="14" y="7" width="1" height="1" fill="#a8a800"/><rect x="15" y="7" width="1" height="1" fill="#000000"/><rect x="1" y="8" width="1" height="1" fill="#a8a800"/><rect x="2" y="8" width="6" height="1" fill="#ffff80"/><rect x="8" y="8" width="1" height="1" fill="#ffcc99"/><rect x="9" y="8" width="1" height="1" fill="#ffff80"/><rect x="10" y="8" width="1" height="1" fill="#ffcc99"/><rect x="11" y="8" width="1" height="1" fill="#ffff80"/><rect x="12" y="8" width="2" height="1" fill="#ffcc99"/><rect x="14" y="8" width="1" height="1" fill="#a8a800"/><rect x="15" y="8" width="1" height="1" fill="#000000"/><rect x="1" y="9" width="1" height="1" fill="#a8a800"/><rect x="2" y="9" width="5" height="1" fill="#ffff80"/><rect x="7" y="9" width="1" height="1" fill="#ffcc99"/><rect x="8" y="9" width="1" height="1" fill="#ffff80"/><rect x="9" y="9" width="1" height="1" fill="#ffcc99"/><rect x="10" y="9" width="1" height="1" fill="#ffff80"/><rect x="11" y="9" width="1" height="1" fill="#ffcc99"/><rect x="12" y="9" width="1" height="1" fill="#ffff80"/><rect x="13" y="9" width="1" height="1" fill="#ffcc99"/><rect x="14" y="9" width="1" height="1" fill="#a8a800"/><rect x="15" y="9" width="1" height="1" fill="#000000"/><rect x="1" y="10" width="1" height="1" fill="#a8a800"/><rect x="2" y="10" width="3" height="1" fill="#ffff80"/><rect x="5" y="10" width="1" height="1" fill="#ffcc99"/><rect x="6" y="10" width="1" height="1" fill="#ffff80"/><rect x="7" y="10" width="1" height="1" fill="#ffcc99"/><rect x="8" y="10" width="1" height="1" fill="#ffff80"/><rect x="9" y="10" width="1" height="1" fill="#ffcc99"/><rect x="10" y="10" width="1" height="1" fill="#ffff80"/><rect x="11" y="10" width="3" height="1" fill="#ffcc99"/><rect x="14" y="10" width="1" height="1" fill="#a8a800"/><rect x="15" y="10" width="1" height="1" fill="#000000"/><rect x="1" y="11" width="14" height="1" fill="#a8a800"/><rect x="15" y="11" width="1" height="1" fill="#000000"/><rect x="2" y="12" width="14" height="1" fill="#000000"/></svg>
<div class="t " style="left:216px;top:228px;">!</div>
<svg class="a" style="left:197px;top:243px" width="16" height="13" shape-rendering="crispEdges"><rect x="3" y="0" width="5" height="1" fill="#a8a800"/><rect x="2" y="1" width="1" height="1" fill="#a8a800"/><rect x="3" y="1" width="5" height="1" fill="#ffffff"/><rect x="8" y="1" width="1" height="1" fill="#a8a800"/><rect x="9" y="1" width="1" height="1" fill="#000000"/><rect x="1" y="2" width="14" height="1" fill="#a8a800"/><rect x="1" y="3" width="1" height="1" fill="#a8a800"/><rect x="2" y="3" width="1" height="1" fill="#ffffff"/><rect x="3" y="3" width="11" height="1" fill="#ffff80"/><rect x="14" y="3" width="1" height="1" fill="#a8a800"/><rect x="15" y="3" width="1" height="1" fill="#000000"/><rect x="1" y="4" width="1" height="1" fill="#a8a800"/><rect x="2" y="4" width="12" height="1" fill="#ffff80"/><rect x="14" y="4" width="1" height="1" fill="#a8a800"/><rect x="15" y="4" width="1" height="1" fill="#000000"/><rect x="1" y="5" width="1" height="1" fill="#a8a800"/><rect x="2" y="5" width="10" height="1" fill="#ffff80"/><rect x="12" y="5" width="1" height="1" fill="#ffcc99"/><rect x="13" y="5" width="1" height="1" fill="#ffff80"/><rect x="14" y="5" width="1" height="1" fill="#a8a800"/><rect x="15" y="5" width="1" height="1" fill="#000000"/><rect x="1" y="6" width="1" height="1" fill="#a8a800"/><rect x="2" y="6" width="9" height="1" fill="#ffff80"/><rect x="11" y="6" width="1" height="1" fill="#ffcc99"/><rect x="12" y="6" width="1" height="1" fill="#ffff80"/><rect x="13" y="6" width="1" height="1" fill="#ffcc99"/><rect x="14" y="6" width="1" height="1" fill="#a8a800"/><rect x="15" y="6" width="1" height="1" fill="#000000"/><rect x="1" y="7" width="1" height="1" fill="#a8a800"/><rect x="2" y="7" width="7" height="1" fill="#ffff80"/><rect x="9" y="7" width="1" height="1" fill="#ffcc99"/><rect x="10" y="7" width="1" height="1" fill="#ffff80"/><rect x="11" y="7" width="1" height="1" fill="#ffcc99"/><rect x="12" y="7" width="1" height="1" fill="#ffff80"/><rect x="13" y="7" width="1" height="1" fill="#ffcc99"/><rect x="14" y="7" width="1" height="1" fill="#a8a800"/><rect x="15" y="7" width="1" height="1" fill="#000000"/><rect x="1" y="8" width="1" height="1" fill="#a8a800"/><rect x="2" y="8" width="6" height="1" fill="#ffff80"/><rect x="8" y="8" width="1" height="1" fill="#ffcc99"/><rect x="9" y="8" width="1" height="1" fill="#ffff80"/><rect x="10" y="8" width="1" height="1" fill="#ffcc99"/><rect x="11" y="8" width="1" height="1" fill="#ffff80"/><rect x="12" y="8" width="2" height="1" fill="#ffcc99"/><rect x="14" y="8" width="1" height="1" fill="#a8a800"/><rect x="15" y="8" width="1" height="1" fill="#000000"/><rect x="1" y="9" width="1" height="1" fill="#a8a800"/><rect x="2" y="9" width="5" height="1" fill="#ffff80"/><rect x="7" y="9" width="1" height="1" fill="#ffcc99"/><rect x="8" y="9" width="1" height="1" fill="#ffff80"/><rect x="9" y="9" width="1" height="1" fill="#ffcc99"/><rect x="10" y="9" width="1" height="1" fill="#ffff80"/><rect x="11" y="9" width="1" height="1" fill="#ffcc99"/><rect x="12" y="9" width="1" height="1" fill="#ffff80"/><rect x="13" y="9" width="1" height="1" fill="#ffcc99"/><rect x="14" y="9" width="1" height="1" fill="#a8a800"/><rect x="15" y="9" width="1" height="1" fill="#000000"/><rect x="1" y="10" width="1" height="1" fill="#a8a800"/><rect x="2" y="10" width="3" height="1" fill="#ffff80"/><rect x="5" y="10" width="1" height="1" fill="#ffcc99"/><rect x="6" y="10" width="1" height="1" fill="#ffff80"/><rect x="7" y="10" width="1" height="1" fill="#ffcc99"/><rect x="8" y="10" width="1" height="1" fill="#ffff80"/><rect x="9" y="10" width="1" height="1" fill="#ffcc99"/><rect x="10" y="10" width="1" height="1" fill="#ffff80"/><rect x="11" y="10" width="3" height="1" fill="#ffcc99"/><rect x="14" y="10" width="1" height="1" fill="#a8a800"/><rect x="15" y="10" width="1" height="1" fill="#000000"/><rect x="1" y="11" width="14" height="1" fill="#a8a800"/><rect x="15" y="11" width="1" height="1" fill="#000000"/><rect x="2" y="12" width="14" height="1" fill="#000000"/></svg>
<div class="t " style="left:216px;top:245px;">!!!!! Music</div>
<svg class="a" style="left:197px;top:260px" width="16" height="13" shape-rendering="crispEdges"><rect x="3" y="0" width="5" height="1" fill="#a8a800"/><rect x="2" y="1" width="1" height="1" fill="#a8a800"/><rect x="3" y="1" width="5" height="1" fill="#ffffff"/><rect x="8" y="1" width="1" height="1" fill="#a8a800"/><rect x="9" y="1" width="1" height="1" fill="#000000"/><rect x="1" y="2" width="14" height="1" fill="#a8a800"/><rect x="1" y="3" width="1" height="1" fill="#a8a800"/><rect x="2" y="3" width="1" height="1" fill="#ffffff"/><rect x="3" y="3" width="11" height="1" fill="#ffff80"/><rect x="14" y="3" width="1" height="1" fill="#a8a800"/><rect x="15" y="3" width="1" height="1" fill="#000000"/><rect x="1" y="4" width="1" height="1" fill="#a8a800"/><rect x="2" y="4" width="12" height="1" fill="#ffff80"/><rect x="14" y="4" width="1" height="1" fill="#a8a800"/><rect x="15" y="4" width="1" height="1" fill="#000000"/><rect x="1" y="5" width="1" height="1" fill="#a8a800"/><rect x="2" y="5" width="10" height="1" fill="#ffff80"/><rect x="12" y="5" width="1" height="1" fill="#ffcc99"/><rect x="13" y="5" width="1" height="1" fill="#ffff80"/><rect x="14" y="5" width="1" height="1" fill="#a8a800"/><rect x="15" y="5" width="1" height="1" fill="#000000"/><rect x="1" y="6" width="1" height="1" fill="#a8a800"/><rect x="2" y="6" width="9" height="1" fill="#ffff80"/><rect x="11" y="6" width="1" height="1" fill="#ffcc99"/><rect x="12" y="6" width="1" height="1" fill="#ffff80"/><rect x="13" y="6" width="1" height="1" fill="#ffcc99"/><rect x="14" y="6" width="1" height="1" fill="#a8a800"/><rect x="15" y="6" width="1" height="1" fill="#000000"/><rect x="1" y="7" width="1" height="1" fill="#a8a800"/><rect x="2" y="7" width="7" height="1" fill="#ffff80"/><rect x="9" y="7" width="1" height="1" fill="#ffcc99"/><rect x="10" y="7" width="1" height="1" fill="#ffff80"/><rect x="11" y="7" width="1" height="1" fill="#ffcc99"/><rect x="12" y="7" width="1" height="1" fill="#ffff80"/><rect x="13" y="7" width="1" height="1" fill="#ffcc99"/><rect x="14" y="7" width="1" height="1" fill="#a8a800"/><rect x="15" y="7" width="1" height="1" fill="#000000"/><rect x="1" y="8" width="1" height="1" fill="#a8a800"/><rect x="2" y="8" width="6" height="1" fill="#ffff80"/><rect x="8" y="8" width="1" height="1" fill="#ffcc99"/><rect x="9" y="8" width="1" height="1" fill="#ffff80"/><rect x="10" y="8" width="1" height="1" fill="#ffcc99"/><rect x="11" y="8" width="1" height="1" fill="#ffff80"/><rect x="12" y="8" width="2" height="1" fill="#ffcc99"/><rect x="14" y="8" width="1" height="1" fill="#a8a800"/><rect x="15" y="8" width="1" height="1" fill="#000000"/><rect x="1" y="9" width="1" height="1" fill="#a8a800"/><rect x="2" y="9" width="5" height="1" fill="#ffff80"/><rect x="7" y="9" width="1" height="1" fill="#ffcc99"/><rect x="8" y="9" width="1" height="1" fill="#ffff80"/><rect x="9" y="9" width="1" height="1" fill="#ffcc99"/><rect x="10" y="9" width="1" height="1" fill="#ffff80"/><rect x="11" y="9" width="1" height="1" fill="#ffcc99"/><rect x="12" y="9" width="1" height="1" fill="#ffff80"/><rect x="13" y="9" width="1" height="1" fill="#ffcc99"/><rect x="14" y="9" width="1" height="1" fill="#a8a800"/><rect x="15" y="9" width="1" height="1" fill="#000000"/><rect x="1" y="10" width="1" height="1" fill="#a8a800"/><rect x="2" y="10" width="3" height="1" fill="#ffff80"/><rect x="5" y="10" width="1" height="1" fill="#ffcc99"/><rect x="6" y="10" width="1" height="1" fill="#ffff80"/><rect x="7" y="10" width="1" height="1" fill="#ffcc99"/><rect x="8" y="10" width="1" height="1" fill="#ffff80"/><rect x="9" y="10" width="1" height="1" fill="#ffcc99"/><rect x="10" y="10" width="1" height="1" fill="#ffff80"/><rect x="11" y="10" width="3" height="1" fill="#ffcc99"/><rect x="14" y="10" width="1" height="1" fill="#a8a800"/><rect x="15" y="10" width="1" height="1" fill="#000000"/><rect x="1" y="11" width="14" height="1" fill="#a8a800"/><rect x="15" y="11" width="1" height="1" fill="#000000"/><rect x="2" y="12" width="14" height="1" fill="#000000"/></svg>
<div class="t " style="left:216px;top:262px;">Acrobat3</div>
<svg class="a" style="left:197px;top:277px" width="16" height="13" shape-rendering="crispEdges"><rect x="3" y="0" width="5" height="1" fill="#a8a800"/><rect x="2" y="1" width="1" height="1" fill="#a8a800"/><rect x="3" y="1" width="5" height="1" fill="#ffffff"/><rect x="8" y="1" width="1" height="1" fill="#a8a800"/><rect x="9" y="1" width="1" height="1" fill="#000000"/><rect x="1" y="2" width="14" height="1" fill="#a8a800"/><rect x="1" y="3" width="1" height="1" fill="#a8a800"/><rect x="2" y="3" width="1" height="1" fill="#ffffff"/><rect x="3" y="3" width="11" height="1" fill="#ffff80"/><rect x="14" y="3" width="1" height="1" fill="#a8a800"/><rect x="15" y="3" width="1" height="1" fill="#000000"/><rect x="1" y="4" width="1" height="1" fill="#a8a800"/><rect x="2" y="4" width="12" height="1" fill="#ffff80"/><rect x="14" y="4" width="1" height="1" fill="#a8a800"/><rect x="15" y="4" width="1" height="1" fill="#000000"/><rect x="1" y="5" width="1" height="1" fill="#a8a800"/><rect x="2" y="5" width="10" height="1" fill="#ffff80"/><rect x="12" y="5" width="1" height="1" fill="#ffcc99"/><rect x="13" y="5" width="1" height="1" fill="#ffff80"/><rect x="14" y="5" width="1" height="1" fill="#a8a800"/><rect x="15" y="5" width="1" height="1" fill="#000000"/><rect x="1" y="6" width="1" height="1" fill="#a8a800"/><rect x="2" y="6" width="9" height="1" fill="#ffff80"/><rect x="11" y="6" width="1" height="1" fill="#ffcc99"/><rect x="12" y="6" width="1" height="1" fill="#ffff80"/><rect x="13" y="6" width="1" height="1" fill="#ffcc99"/><rect x="14" y="6" width="1" height="1" fill="#a8a800"/><rect x="15" y="6" width="1" height="1" fill="#000000"/><rect x="1" y="7" width="1" height="1" fill="#a8a800"/><rect x="2" y="7" width="7" height="1" fill="#ffff80"/><rect x="9" y="7" width="1" height="1" fill="#ffcc99"/><rect x="10" y="7" width="1" height="1" fill="#ffff80"/><rect x="11" y="7" width="1" height="1" fill="#ffcc99"/><rect x="12" y="7" width="1" height="1" fill="#ffff80"/><rect x="13" y="7" width="1" height="1" fill="#ffcc99"/><rect x="14" y="7" width="1" height="1" fill="#a8a800"/><rect x="15" y="7" width="1" height="1" fill="#000000"/><rect x="1" y="8" width="1" height="1" fill="#a8a800"/><rect x="2" y="8" width="6" height="1" fill="#ffff80"/><rect x="8" y="8" width="1" height="1" fill="#ffcc99"/><rect x="9" y="8" width="1" height="1" fill="#ffff80"/><rect x="10" y="8" width="1" height="1" fill="#ffcc99"/><rect x="11" y="8" width="1" height="1" fill="#ffff80"/><rect x="12" y="8" width="2" height="1" fill="#ffcc99"/><rect x="14" y="8" width="1" height="1" fill="#a8a800"/><rect x="15" y="8" width="1" height="1" fill="#000000"/><rect x="1" y="9" width="1" height="1" fill="#a8a800"/><rect x="2" y="9" width="5" height="1" fill="#ffff80"/><rect x="7" y="9" width="1" height="1" fill="#ffcc99"/><rect x="8" y="9" width="1" height="1" fill="#ffff80"/><rect x="9" y="9" width="1" height="1" fill="#ffcc99"/><rect x="10" y="9" width="1" height="1" fill="#ffff80"/><rect x="11" y="9" width="1" height="1" fill="#ffcc99"/><rect x="12" y="9" width="1" height="1" fill="#ffff80"/><rect x="13" y="9" width="1" height="1" fill="#ffcc99"/><rect x="14" y="9" width="1" height="1" fill="#a8a800"/><rect x="15" y="9" width="1" height="1" fill="#000000"/><rect x="1" y="10" width="1" height="1" fill="#a8a800"/><rect x="2" y="10" width="3" height="1" fill="#ffff80"/><rect x="5" y="10" width="1" height="1" fill="#ffcc99"/><rect x="6" y="10" width="1" height="1" fill="#ffff80"/><rect x="7" y="10" width="1" height="1" fill="#ffcc99"/><rect x="8" y="10" width="1" height="1" fill="#ffff80"/><rect x="9" y="10" width="1" height="1" fill="#ffcc99"/><rect x="10" y="10" width="1" height="1" fill="#ffff80"/><rect x="11" y="10" width="3" height="1" fill="#ffcc99"/><rect x="14" y="10" width="1" height="1" fill="#a8a800"/><rect x="15" y="10" width="1" height="1" fill="#000000"/><rect x="1" y="11" width="14" height="1" fill="#a8a800"/><rect x="15" y="11" width="1" height="1" fill="#000000"/><rect x="2" y="12" width="14" height="1" fill="#000000"/></svg>
<div class="t " style="left:216px;top:279px;">Adobe Albums</div>
<svg class="a" style="left:197px;top:294px" width="16" height="13" shape-rendering="crispEdges"><rect x="3" y="0" width="5" height="1" fill="#a8a800"/><rect x="2" y="1" width="1" height="1" fill="#a8a800"/><rect x="3" y="1" width="5" height="1" fill="#ffffff"/><rect x="8" y="1" width="1" height="1" fill="#a8a800"/><rect x="9" y="1" width="1" height="1" fill="#000000"/><rect x="1" y="2" width="14" height="1" fill="#a8a800"/><rect x="1" y="3" width="1" height="1" fill="#a8a800"/><rect x="2" y="3" width="1" height="1" fill="#ffffff"/><rect x="3" y="3" width="11" height="1" fill="#ffff80"/><rect x="14" y="3" width="1" height="1" fill="#a8a800"/><rect x="15" y="3" width="1" height="1" fill="#000000"/><rect x="1" y="4" width="1" height="1" fill="#a8a800"/><rect x="2" y="4" width="12" height="1" fill="#ffff80"/><rect x="14" y="4" width="1" height="1" fill="#a8a800"/><rect x="15" y="4" width="1" height="1" fill="#000000"/><rect x="1" y="5" width="1" height="1" fill="#a8a800"/><rect x="2" y="5" width="10" height="1" fill="#ffff80"/><rect x="12" y="5" width="1" height="1" fill="#ffcc99"/><rect x="13" y="5" width="1" height="1" fill="#ffff80"/><rect x="14" y="5" width="1" height="1" fill="#a8a800"/><rect x="15" y="5" width="1" height="1" fill="#000000"/><rect x="1" y="6" width="1" height="1" fill="#a8a800"/><rect x="2" y="6" width="9" height="1" fill="#ffff80"/><rect x="11" y="6" width="1" height="1" fill="#ffcc99"/><rect x="12" y="6" width="1" height="1" fill="#ffff80"/><rect x="13" y="6" width="1" height="1" fill="#ffcc99"/><rect x="14" y="6" width="1" height="1" fill="#a8a800"/><rect x="15" y="6" width="1" height="1" fill="#000000"/><rect x="1" y="7" width="1" height="1" fill="#a8a800"/><rect x="2" y="7" width="7" height="1" fill="#ffff80"/><rect x="9" y="7" width="1" height="1" fill="#ffcc99"/><rect x="10" y="7" width="1" height="1" fill="#ffff80"/><rect x="11" y="7" width="1" height="1" fill="#ffcc99"/><rect x="12" y="7" width="1" height="1" fill="#ffff80"/><rect x="13" y="7" width="1" height="1" fill="#ffcc99"/><rect x="14" y="7" width="1" height="1" fill="#a8a800"/><rect x="15" y="7" width="1" height="1" fill="#000000"/><rect x="1" y="8" width="1" height="1" fill="#a8a800"/><rect x="2" y="8" width="6" height="1" fill="#ffff80"/><rect x="8" y="8" width="1" height="1" fill="#ffcc99"/><rect x="9" y="8" width="1" height="1" fill="#ffff80"/><rect x="10" y="8" width="1" height="1" fill="#ffcc99"/><rect x="11" y="8" width="1" height="1" fill="#ffff80"/><rect x="12" y="8" width="2" height="1" fill="#ffcc99"/><rect x="14" y="8" width="1" height="1" fill="#a8a800"/><rect x="15" y="8" width="1" height="1" fill="#000000"/><rect x="1" y="9" width="1" height="1" fill="#a8a800"/><rect x="2" y="9" width="5" height="1" fill="#ffff80"/><rect x="7" y="9" width="1" height="1" fill="#ffcc99"/><rect x="8" y="9" width="1" height="1" fill="#ffff80"/><rect x="9" y="9" width="1" height="1" fill="#ffcc99"/><rect x="10" y="9" width="1" height="1" fill="#ffff80"/><rect x="11" y="9" width="1" height="1" fill="#ffcc99"/><rect x="12" y="9" width="1" height="1" fill="#ffff80"/><rect x="13" y="9" width="1" height="1" fill="#ffcc99"/><rect x="14" y="9" width="1" height="1" fill="#a8a800"/><rect x="15" y="9" width="1" height="1" fill="#000000"/><rect x="1" y="10" width="1" height="1" fill="#a8a800"/><rect x="2" y="10" width="3" height="1" fill="#ffff80"/><rect x="5" y="10" width="1" height="1" fill="#ffcc99"/><rect x="6" y="10" width="1" height="1" fill="#ffff80"/><rect x="7" y="10" width="1" height="1" fill="#ffcc99"/><rect x="8" y="10" width="1" height="1" fill="#ffff80"/><rect x="9" y="10" width="1" height="1" fill="#ffcc99"/><rect x="10" y="10" width="1" height="1" fill="#ffff80"/><rect x="11" y="10" width="3" height="1" fill="#ffcc99"/><rect x="14" y="10" width="1" height="1" fill="#a8a800"/><rect x="15" y="10" width="1" height="1" fill="#000000"/><rect x="1" y="11" width="14" height="1" fill="#a8a800"/><rect x="15" y="11" width="1" height="1" fill="#000000"/><rect x="2" y="12" width="14" height="1" fill="#000000"/></svg>
<div class="t " style="left:216px;top:296px;">Bp</div>
<svg class="a" style="left:197px;top:311px" width="16" height="13" shape-rendering="crispEdges"><rect x="3" y="0" width="5" height="1" fill="#a8a800"/><rect x="2" y="1" width="1" height="1" fill="#a8a800"/><rect x="3" y="1" width="5" height="1" fill="#ffffff"/><rect x="8" y="1" width="1" height="1" fill="#a8a800"/><rect x="9" y="1" width="1" height="1" fill="#000000"/><rect x="1" y="2" width="14" height="1" fill="#a8a800"/><rect x="1" y="3" width="1" height="1" fill="#a8a800"/><rect x="2" y="3" width="1" height="1" fill="#ffffff"/><rect x="3" y="3" width="11" height="1" fill="#ffff80"/><rect x="14" y="3" width="1" height="1" fill="#a8a800"/><rect x="15" y="3" width="1" height="1" fill="#000000"/><rect x="1" y="4" width="1" height="1" fill="#a8a800"/><rect x="2" y="4" width="12" height="1" fill="#ffff80"/><rect x="14" y="4" width="1" height="1" fill="#a8a800"/><rect x="15" y="4" width="1" height="1" fill="#000000"/><rect x="1" y="5" width="1" height="1" fill="#a8a800"/><rect x="2" y="5" width="10" height="1" fill="#ffff80"/><rect x="12" y="5" width="1" height="1" fill="#ffcc99"/><rect x="13" y="5" width="1" height="1" fill="#ffff80"/><rect x="14" y="5" width="1" height="1" fill="#a8a800"/><rect x="15" y="5" width="1" height="1" fill="#000000"/><rect x="1" y="6" width="1" height="1" fill="#a8a800"/><rect x="2" y="6" width="9" height="1" fill="#ffff80"/><rect x="11" y="6" width="1" height="1" fill="#ffcc99"/><rect x="12" y="6" width="1" height="1" fill="#ffff80"/><rect x="13" y="6" width="1" height="1" fill="#ffcc99"/><rect x="14" y="6" width="1" height="1" fill="#a8a800"/><rect x="15" y="6" width="1" height="1" fill="#000000"/><rect x="1" y="7" width="1" height="1" fill="#a8a800"/><rect x="2" y="7" width="7" height="1" fill="#ffff80"/><rect x="9" y="7" width="1" height="1" fill="#ffcc99"/><rect x="10" y="7" width="1" height="1" fill="#ffff80"/><rect x="11" y="7" width="1" height="1" fill="#ffcc99"/><rect x="12" y="7" width="1" height="1" fill="#ffff80"/><rect x="13" y="7" width="1" height="1" fill="#ffcc99"/><rect x="14" y="7" width="1" height="1" fill="#a8a800"/><rect x="15" y="7" width="1" height="1" fill="#000000"/><rect x="1" y="8" width="1" height="1" fill="#a8a800"/><rect x="2" y="8" width="6" height="1" fill="#ffff80"/><rect x="8" y="8" width="1" height="1" fill="#ffcc99"/><rect x="9" y="8" width="1" height="1" fill="#ffff80"/><rect x="10" y="8" width="1" height="1" fill="#ffcc99"/><rect x="11" y="8" width="1" height="1" fill="#ffff80"/><rect x="12" y="8" width="2" height="1" fill="#ffcc99"/><rect x="14" y="8" width="1" height="1" fill="#a8a800"/><rect x="15" y="8" width="1" height="1" fill="#000000"/><rect x="1" y="9" width="1" height="1" fill="#a8a800"/><rect x="2" y="9" width="5" height="1" fill="#ffff80"/><rect x="7" y="9" width="1" height="1" fill="#ffcc99"/><rect x="8" y="9" width="1" height="1" fill="#ffff80"/><rect x="9" y="9" width="1" height="1" fill="#ffcc99"/><rect x="10" y="9" width="1" height="1" fill="#ffff80"/><rect x="11" y="9" width="1" height="1" fill="#ffcc99"/><rect x="12" y="9" width="1" height="1" fill="#ffff80"/><rect x="13" y="9" width="1" height="1" fill="#ffcc99"/><rect x="14" y="9" width="1" height="1" fill="#a8a800"/><rect x="15" y="9" width="1" height="1" fill="#000000"/><rect x="1" y="10" width="1" height="1" fill="#a8a800"/><rect x="2" y="10" width="3" height="1" fill="#ffff80"/><rect x="5" y="10" width="1" height="1" fill="#ffcc99"/><rect x="6" y="10" width="1" height="1" fill="#ffff80"/><rect x="7" y="10" width="1" height="1" fill="#ffcc99"/><rect x="8" y="10" width="1" height="1" fill="#ffff80"/><rect x="9" y="10" width="1" height="1" fill="#ffcc99"/><rect x="10" y="10" width="1" height="1" fill="#ffff80"/><rect x="11" y="10" width="3" height="1" fill="#ffcc99"/><rect x="14" y="10" width="1" height="1" fill="#a8a800"/><rect x="15" y="10" width="1" height="1" fill="#000000"/><rect x="1" y="11" width="14" height="1" fill="#a8a800"/><rect x="15" y="11" width="1" height="1" fill="#000000"/><rect x="2" y="12" width="14" height="1" fill="#000000"/></svg>
<div class="t " style="left:216px;top:313px;">Far</div>
<svg class="a" style="left:309px;top:226px" width="16" height="13" shape-rendering="crispEdges"><rect x="3" y="0" width="5" height="1" fill="#a8a800"/><rect x="2" y="1" width="1" height="1" fill="#a8a800"/><rect x="3" y="1" width="5" height="1" fill="#ffffff"/><rect x="8" y="1" width="1" height="1" fill="#a8a800"/><rect x="9" y="1" width="1" height="1" fill="#000000"/><rect x="1" y="2" width="14" height="1" fill="#a8a800"/><rect x="1" y="3" width="1" height="1" fill="#a8a800"/><rect x="2" y="3" width="1" height="1" fill="#ffffff"/><rect x="3" y="3" width="11" height="1" fill="#ffff80"/><rect x="14" y="3" width="1" height="1" fill="#a8a800"/><rect x="15" y="3" width="1" height="1" fill="#000000"/><rect x="1" y="4" width="1" height="1" fill="#a8a800"/><rect x="2" y="4" width="12" height="1" fill="#ffff80"/><rect x="14" y="4" width="1" height="1" fill="#a8a800"/><rect x="15" y="4" width="1" height="1" fill="#000000"/><rect x="1" y="5" width="1" height="1" fill="#a8a800"/><rect x="2" y="5" width="10" height="1" fill="#ffff80"/><rect x="12" y="5" width="1" height="1" fill="#ffcc99"/><rect x="13" y="5" width="1" height="1" fill="#ffff80"/><rect x="14" y="5" width="1" height="1" fill="#a8a800"/><rect x="15" y="5" width="1" height="1" fill="#000000"/><rect x="1" y="6" width="1" height="1" fill="#a8a800"/><rect x="2" y="6" width="9" height="1" fill="#ffff80"/><rect x="11" y="6" width="1" height="1" fill="#ffcc99"/><rect x="12" y="6" width="1" height="1" fill="#ffff80"/><rect x="13" y="6" width="1" height="1" fill="#ffcc99"/><rect x="14" y="6" width="1" height="1" fill="#a8a800"/><rect x="15" y="6" width="1" height="1" fill="#000000"/><rect x="1" y="7" width="1" height="1" fill="#a8a800"/><rect x="2" y="7" width="7" height="1" fill="#ffff80"/><rect x="9" y="7" width="1" height="1" fill="#ffcc99"/><rect x="10" y="7" width="1" height="1" fill="#ffff80"/><rect x="11" y="7" width="1" height="1" fill="#ffcc99"/><rect x="12" y="7" width="1" height="1" fill="#ffff80"/><rect x="13" y="7" width="1" height="1" fill="#ffcc99"/><rect x="14" y="7" width="1" height="1" fill="#a8a800"/><rect x="15" y="7" width="1" height="1" fill="#000000"/><rect x="1" y="8" width="1" height="1" fill="#a8a800"/><rect x="2" y="8" width="6" height="1" fill="#ffff80"/><rect x="8" y="8" width="1" height="1" fill="#ffcc99"/><rect x="9" y="8" width="1" height="1" fill="#ffff80"/><rect x="10" y="8" width="1" height="1" fill="#ffcc99"/><rect x="11" y="8" width="1" height="1" fill="#ffff80"/><rect x="12" y="8" width="2" height="1" fill="#ffcc99"/><rect x="14" y="8" width="1" height="1" fill="#a8a800"/><rect x="15" y="8" width="1" height="1" fill="#000000"/><rect x="1" y="9" width="1" height="1" fill="#a8a800"/><rect x="2" y="9" width="5" height="1" fill="#ffff80"/><rect x="7" y="9" width="1" height="1" fill="#ffcc99"/><rect x="8" y="9" width="1" height="1" fill="#ffff80"/><rect x="9" y="9" width="1" height="1" fill="#ffcc99"/><rect x="10" y="9" width="1" height="1" fill="#ffff80"/><rect x="11" y="9" width="1" height="1" fill="#ffcc99"/><rect x="12" y="9" width="1" height="1" fill="#ffff80"/><rect x="13" y="9" width="1" height="1" fill="#ffcc99"/><rect x="14" y="9" width="1" height="1" fill="#a8a800"/><rect x="15" y="9" width="1" height="1" fill="#000000"/><rect x="1" y="10" width="1" height="1" fill="#a8a800"/><rect x="2" y="10" width="3" height="1" fill="#ffff80"/><rect x="5" y="10" width="1" height="1" fill="#ffcc99"/><rect x="6" y="10" width="1" height="1" fill="#ffff80"/><rect x="7" y="10" width="1" height="1" fill="#ffcc99"/><rect x="8" y="10" width="1" height="1" fill="#ffff80"/><rect x="9" y="10" width="1" height="1" fill="#ffcc99"/><rect x="10" y="10" width="1" height="1" fill="#ffff80"/><rect x="11" y="10" width="3" height="1" fill="#ffcc99"/><rect x="14" y="10" width="1" height="1" fill="#a8a800"/><rect x="15" y="10" width="1" height="1" fill="#000000"/><rect x="1" y="11" width="14" height="1" fill="#a8a800"/><rect x="15" y="11" width="1" height="1" fill="#000000"/><rect x="2" y="12" width="14" height="1" fill="#000000"/></svg>
<div class="t " style="left:328px;top:228px;">Hpfonts</div>
<svg class="a" style="left:309px;top:243px" width="16" height="13" shape-rendering="crispEdges"><rect x="3" y="0" width="5" height="1" fill="#a8a800"/><rect x="2" y="1" width="1" height="1" fill="#a8a800"/><rect x="3" y="1" width="5" height="1" fill="#ffffff"/><rect x="8" y="1" width="1" height="1" fill="#a8a800"/><rect x="9" y="1" width="1" height="1" fill="#000000"/><rect x="1" y="2" width="14" height="1" fill="#a8a800"/><rect x="1" y="3" width="1" height="1" fill="#a8a800"/><rect x="2" y="3" width="1" height="1" fill="#ffffff"/><rect x="3" y="3" width="11" height="1" fill="#ffff80"/><rect x="14" y="3" width="1" height="1" fill="#a8a800"/><rect x="15" y="3" width="1" height="1" fill="#000000"/><rect x="1" y="4" width="1" height="1" fill="#a8a800"/><rect x="2" y="4" width="12" height="1" fill="#ffff80"/><rect x="14" y="4" width="1" height="1" fill="#a8a800"/><rect x="15" y="4" width="1" height="1" fill="#000000"/><rect x="1" y="5" width="1" height="1" fill="#a8a800"/><rect x="2" y="5" width="10" height="1" fill="#ffff80"/><rect x="12" y="5" width="1" height="1" fill="#ffcc99"/><rect x="13" y="5" width="1" height="1" fill="#ffff80"/><rect x="14" y="5" width="1" height="1" fill="#a8a800"/><rect x="15" y="5" width="1" height="1" fill="#000000"/><rect x="1" y="6" width="1" height="1" fill="#a8a800"/><rect x="2" y="6" width="9" height="1" fill="#ffff80"/><rect x="11" y="6" width="1" height="1" fill="#ffcc99"/><rect x="12" y="6" width="1" height="1" fill="#ffff80"/><rect x="13" y="6" width="1" height="1" fill="#ffcc99"/><rect x="14" y="6" width="1" height="1" fill="#a8a800"/><rect x="15" y="6" width="1" height="1" fill="#000000"/><rect x="1" y="7" width="1" height="1" fill="#a8a800"/><rect x="2" y="7" width="7" height="1" fill="#ffff80"/><rect x="9" y="7" width="1" height="1" fill="#ffcc99"/><rect x="10" y="7" width="1" height="1" fill="#ffff80"/><rect x="11" y="7" width="1" height="1" fill="#ffcc99"/><rect x="12" y="7" width="1" height="1" fill="#ffff80"/><rect x="13" y="7" width="1" height="1" fill="#ffcc99"/><rect x="14" y="7" width="1" height="1" fill="#a8a800"/><rect x="15" y="7" width="1" height="1" fill="#000000"/><rect x="1" y="8" width="1" height="1" fill="#a8a800"/><rect x="2" y="8" width="6" height="1" fill="#ffff80"/><rect x="8" y="8" width="1" height="1" fill="#ffcc99"/><rect x="9" y="8" width="1" height="1" fill="#ffff80"/><rect x="10" y="8" width="1" height="1" fill="#ffcc99"/><rect x="11" y="8" width="1" height="1" fill="#ffff80"/><rect x="12" y="8" width="2" height="1" fill="#ffcc99"/><rect x="14" y="8" width="1" height="1" fill="#a8a800"/><rect x="15" y="8" width="1" height="1" fill="#000000"/><rect x="1" y="9" width="1" height="1" fill="#a8a800"/><rect x="2" y="9" width="5" height="1" fill="#ffff80"/><rect x="7" y="9" width="1" height="1" fill="#ffcc99"/><rect x="8" y="9" width="1" height="1" fill="#ffff80"/><rect x="9" y="9" width="1" height="1" fill="#ffcc99"/><rect x="10" y="9" width="1" height="1" fill="#ffff80"/><rect x="11" y="9" width="1" height="1" fill="#ffcc99"/><rect x="12" y="9" width="1" height="1" fill="#ffff80"/><rect x="13" y="9" width="1" height="1" fill="#ffcc99"/><rect x="14" y="9" width="1" height="1" fill="#a8a800"/><rect x="15" y="9" width="1" height="1" fill="#000000"/><rect x="1" y="10" width="1" height="1" fill="#a8a800"/><rect x="2" y="10" width="3" height="1" fill="#ffff80"/><rect x="5" y="10" width="1" height="1" fill="#ffcc99"/><rect x="6" y="10" width="1" height="1" fill="#ffff80"/><rect x="7" y="10" width="1" height="1" fill="#ffcc99"/><rect x="8" y="10" width="1" height="1" fill="#ffff80"/><rect x="9" y="10" width="1" height="1" fill="#ffcc99"/><rect x="10" y="10" width="1" height="1" fill="#ffff80"/><rect x="11" y="10" width="3" height="1" fill="#ffcc99"/><rect x="14" y="10" width="1" height="1" fill="#a8a800"/><rect x="15" y="10" width="1" height="1" fill="#000000"/><rect x="1" y="11" width="14" height="1" fill="#a8a800"/><rect x="15" y="11" width="1" height="1" fill="#000000"/><rect x="2" y="12" width="14" height="1" fill="#000000"/></svg>
<div class="t " style="left:328px;top:245px;">Nc</div>
<svg class="a" style="left:309px;top:260px" width="16" height="13" shape-rendering="crispEdges"><rect x="3" y="0" width="5" height="1" fill="#404080"/><rect x="2" y="1" width="1" height="1" fill="#404080"/><rect x="3" y="1" width="5" height="1" fill="#8080a8"/><rect x="8" y="1" width="1" height="1" fill="#404080"/><rect x="9" y="1" width="1" height="1" fill="#000080"/><rect x="1" y="2" width="14" height="1" fill="#404080"/><rect x="1" y="3" width="1" height="1" fill="#404080"/><rect x="2" y="3" width="1" height="1" fill="#8080a8"/><rect x="3" y="3" width="11" height="1" fill="#606090"/><rect x="14" y="3" width="1" height="1" fill="#404080"/><rect x="15" y="3" width="1" height="1" fill="#000080"/><rect x="1" y="4" width="1" height="1" fill="#404080"/><rect x="2" y="4" width="12" height="1" fill="#606090"/><rect x="14" y="4" width="1" height="1" fill="#404080"/><rect x="15" y="4" width="1" height="1" fill="#000080"/><rect x="1" y="5" width="1" height="1" fill="#404080"/><rect x="2" y="5" width="10" height="1" fill="#606090"/><rect x="12" y="5" width="1" height="1" fill="#a080b0"/><rect x="13" y="5" width="1" height="1" fill="#606090"/><rect x="14" y="5" width="1" height="1" fill="#404080"/><rect x="15" y="5" width="1" height="1" fill="#000080"/><rect x="1" y="6" width="1" height="1" fill="#404080"/><rect x="2" y="6" width="9" height="1" fill="#606090"/><rect x="11" y="6" width="1" height="1" fill="#a080b0"/><rect x="12" y="6" width="1" height="1" fill="#606090"/><rect x="13" y="6" width="1" height="1" fill="#a080b0"/><rect x="14" y="6" width="1" height="1" fill="#404080"/><rect x="15" y="6" width="1" height="1" fill="#000080"/><rect x="1" y="7" width="1" height="1" fill="#404080"/><rect x="2" y="7" width="7" height="1" fill="#606090"/><rect x="9" y="7" width="1" height="1" fill="#a080b0"/><rect x="10" y="7" width="1" height="1" fill="#606090"/><rect x="11" y="7" width="1" height="1" fill="#a080b0"/><rect x="12" y="7" width="1" height="1" fill="#606090"/><rect x="13" y="7" width="1" height="1" fill="#a080b0"/><rect x="14" y="7" width="1" height="1" fill="#404080"/><rect x="15" y="7" width="1" height="1" fill="#000080"/><rect x="1" y="8" width="1" height="1" fill="#404080"/><rect x="2" y="8" width="6" height="1" fill="#606090"/><rect x="8" y="8" width="1" height="1" fill="#a080b0"/><rect x="9" y="8" width="1" height="1" fill="#606090"/><rect x="10" y="8" width="1" height="1" fill="#a080b0"/><rect x="11" y="8" width="1" height="1" fill="#606090"/><rect x="12" y="8" width="2" height="1" fill="#a080b0"/><rect x="14" y="8" width="1" height="1" fill="#404080"/><rect x="15" y="8" width="1" height="1" fill="#000080"/><rect x="1" y="9" width="1" height="1" fill="#404080"/><rect x="2" y="9" width="5" height="1" fill="#606090"/><rect x="7" y="9" width="1" height="1" fill="#a080b0"/><rect x="8" y="9" width="1" height="1" fill="#606090"/><rect x="9" y="9" width="1" height="1" fill="#a080b0"/><rect x="10" y="9" width="1" height="1" fill="#606090"/><rect x="11" y="9" width="1" height="1" fill="#a080b0"/><rect x="12" y="9" width="1" height="1" fill="#606090"/><rect x="13" y="9" width="1" height="1" fill="#a080b0"/><rect x="14" y="9" width="1" height="1" fill="#404080"/><rect x="15" y="9" width="1" height="1" fill="#000080"/><rect x="1" y="10" width="1" height="1" fill="#404080"/><rect x="2" y="10" width="3" height="1" fill="#606090"/><rect x="5" y="10" width="1" height="1" fill="#a080b0"/><rect x="6" y="10" width="1" height="1" fill="#606090"/><rect x="7" y="10" width="1" height="1" fill="#a080b0"/><rect x="8" y="10" width="1" height="1" fill="#606090"/><rect x="9" y="10" width="1" height="1" fill="#a080b0"/><rect x="10" y="10" width="1" height="1" fill="#606090"/><rect x="11" y="10" width="3" height="1" fill="#a080b0"/><rect x="14" y="10" width="1" height="1" fill="#404080"/><rect x="15" y="10" width="1" height="1" fill="#000080"/><rect x="1" y="11" width="14" height="1" fill="#404080"/><rect x="15" y="11" width="1" height="1" fill="#000080"/><rect x="2" y="12" width="14" height="1" fill="#000080"/></svg>
<div class="a" style="left:326px;top:259px;width:68px;height:17px;background:#000080;outline:1px dotted #ffff00;outline-offset:-1px"></div>
<div class="t " style="left:328px;top:262px;color:#fff;letter-spacing:-0.42px">Program Files</div>
<svg class="a" style="left:309px;top:277px" width="16" height="13" shape-rendering="crispEdges"><rect x="3" y="0" width="5" height="1" fill="#a8a800"/><rect x="2" y="1" width="1" height="1" fill="#a8a800"/><rect x="3" y="1" width="5" height="1" fill="#ffffff"/><rect x="8" y="1" width="1" height="1" fill="#a8a800"/><rect x="9" y="1" width="1" height="1" fill="#000000"/><rect x="1" y="2" width="14" height="1" fill="#a8a800"/><rect x="1" y="3" width="1" height="1" fill="#a8a800"/><rect x="2" y="3" width="1" height="1" fill="#ffffff"/><rect x="3" y="3" width="11" height="1" fill="#ffff80"/><rect x="14" y="3" width="1" height="1" fill="#a8a800"/><rect x="15" y="3" width="1" height="1" fill="#000000"/><rect x="1" y="4" width="1" height="1" fill="#a8a800"/><rect x="2" y="4" width="12" height="1" fill="#ffff80"/><rect x="14" y="4" width="1" height="1" fill="#a8a800"/><rect x="15" y="4" width="1" height="1" fill="#000000"/><rect x="1" y="5" width="1" height="1" fill="#a8a800"/><rect x="2" y="5" width="10" height="1" fill="#ffff80"/><rect x="12" y="5" width="1" height="1" fill="#ffcc99"/><rect x="13" y="5" width="1" height="1" fill="#ffff80"/><rect x="14" y="5" width="1" height="1" fill="#a8a800"/><rect x="15" y="5" width="1" height="1" fill="#000000"/><rect x="1" y="6" width="1" height="1" fill="#a8a800"/><rect x="2" y="6" width="9" height="1" fill="#ffff80"/><rect x="11" y="6" width="1" height="1" fill="#ffcc99"/><rect x="12" y="6" width="1" height="1" fill="#ffff80"/><rect x="13" y="6" width="1" height="1" fill="#ffcc99"/><rect x="14" y="6" width="1" height="1" fill="#a8a800"/><rect x="15" y="6" width="1" height="1" fill="#000000"/><rect x="1" y="7" width="1" height="1" fill="#a8a800"/><rect x="2" y="7" width="7" height="1" fill="#ffff80"/><rect x="9" y="7" width="1" height="1" fill="#ffcc99"/><rect x="10" y="7" width="1" height="1" fill="#ffff80"/><rect x="11" y="7" width="1" height="1" fill="#ffcc99"/><rect x="12" y="7" width="1" height="1" fill="#ffff80"/><rect x="13" y="7" width="1" height="1" fill="#ffcc99"/><rect x="14" y="7" width="1" height="1" fill="#a8a800"/><rect x="15" y="7" width="1" height="1" fill="#000000"/><rect x="1" y="8" width="1" height="1" fill="#a8a800"/><rect x="2" y="8" width="6" height="1" fill="#ffff80"/><rect x="8" y="8" width="1" height="1" fill="#ffcc99"/><rect x="9" y="8" width="1" height="1" fill="#ffff80"/><rect x="10" y="8" width="1" height="1" fill="#ffcc99"/><rect x="11" y="8" width="1" height="1" fill="#ffff80"/><rect x="12" y="8" width="2" height="1" fill="#ffcc99"/><rect x="14" y="8" width="1" height="1" fill="#a8a800"/><rect x="15" y="8" width="1" height="1" fill="#000000"/><rect x="1" y="9" width="1" height="1" fill="#a8a800"/><rect x="2" y="9" width="5" height="1" fill="#ffff80"/><rect x="7" y="9" width="1" height="1" fill="#ffcc99"/><rect x="8" y="9" width="1" height="1" fill="#ffff80"/><rect x="9" y="9" width="1" height="1" fill="#ffcc99"/><rect x="10" y="9" width="1" height="1" fill="#ffff80"/><rect x="11" y="9" width="1" height="1" fill="#ffcc99"/><rect x="12" y="9" width="1" height="1" fill="#ffff80"/><rect x="13" y="9" width="1" height="1" fill="#ffcc99"/><rect x="14" y="9" width="1" height="1" fill="#a8a800"/><rect x="15" y="9" width="1" height="1" fill="#000000"/><rect x="1" y="10" width="1" height="1" fill="#a8a800"/><rect x="2" y="10" width="3" height="1" fill="#ffff80"/><rect x="5" y="10" width="1" height="1" fill="#ffcc99"/><rect x="6" y="10" width="1" height="1" fill="#ffff80"/><rect x="7" y="10" width="1" height="1" fill="#ffcc99"/><rect x="8" y="10" width="1" height="1" fill="#ffff80"/><rect x="9" y="10" width="1" height="1" fill="#ffcc99"/><rect x="10" y="10" width="1" height="1" fill="#ffff80"/><rect x="11" y="10" width="3" height="1" fill="#ffcc99"/><rect x="14" y="10" width="1" height="1" fill="#a8a800"/><rect x="15" y="10" width="1" height="1" fill="#000000"/><rect x="1" y="11" width="14" height="1" fill="#a8a800"/><rect x="15" y="11" width="1" height="1" fill="#000000"/><rect x="2" y="12" width="14" height="1" fill="#000000"/></svg>
<div class="t " style="left:328px;top:279px;">Windows</div>
<svg class="a" style="left:310px;top:293px" width="16" height="15" shape-rendering="crispEdges"><rect x="7" y="0" width="1" height="1" fill="#000000"/><rect x="6" y="1" width="1" height="1" fill="#000000"/><rect x="7" y="1" width="1" height="1" fill="#ffffff"/><rect x="8" y="1" width="1" height="1" fill="#000000"/><rect x="5" y="2" width="1" height="1" fill="#000000"/><rect x="6" y="2" width="3" height="1" fill="#ffffff"/><rect x="9" y="2" width="1" height="1" fill="#000000"/><rect x="2" y="3" width="3" height="1" fill="#808000"/><rect x="5" y="3" width="1" height="1" fill="#000000"/><rect x="6" y="3" width="4" height="1" fill="#ffffff"/><rect x="10" y="3" width="1" height="1" fill="#000000"/><rect x="2" y="4" width="1" height="1" fill="#808000"/><rect x="3" y="4" width="1" height="1" fill="#000000"/><rect x="4" y="4" width="3" height="1" fill="#ffffff"/><rect x="7" y="4" width="1" height="1" fill="#0000ff"/><rect x="8" y="4" width="3" height="1" fill="#ffffff"/><rect x="11" y="4" width="1" height="1" fill="#000000"/><rect x="1" y="5" width="2" height="1" fill="#808000"/><rect x="3" y="5" width="1" height="1" fill="#000000"/><rect x="4" y="5" width="2" height="1" fill="#ffffff"/><rect x="6" y="5" width="3" height="1" fill="#0000ff"/><rect x="9" y="5" width="3" height="1" fill="#ffffff"/><rect x="12" y="5" width="1" height="1" fill="#000000"/><rect x="1" y="6" width="1" height="1" fill="#808000"/><rect x="2" y="6" width="1" height="1" fill="#000000"/><rect x="3" y="6" width="3" height="1" fill="#ffffff"/><rect x="6" y="6" width="1" height="1" fill="#0000ff"/><rect x="7" y="6" width="1" height="1" fill="#ffffff"/><rect x="8" y="6" width="1" height="1" fill="#0000ff"/><rect x="9" y="6" width="4" height="1" fill="#ffffff"/><rect x="13" y="6" width="1" height="1" fill="#000000"/><rect x="0" y="7" width="15" height="1" fill="#808000"/><rect x="15" y="7" width="1" height="1" fill="#000000"/><rect x="0" y="8" width="1" height="1" fill="#808000"/><rect x="1" y="8" width="12" height="1" fill="#ffffff"/><rect x="13" y="8" width="1" height="1" fill="#808000"/><rect x="14" y="8" width="1" height="1" fill="#000000"/><rect x="0" y="9" width="1" height="1" fill="#808000"/><rect x="1" y="9" width="10" height="1" fill="#ffff80"/><rect x="11" y="9" width="1" height="1" fill="#ffcc99"/><rect x="12" y="9" width="1" height="1" fill="#ffff80"/><rect x="13" y="9" width="1" height="1" fill="#808000"/><rect x="14" y="9" width="1" height="1" fill="#000000"/><rect x="1" y="10" width="1" height="1" fill="#808000"/><rect x="2" y="10" width="7" height="1" fill="#ffff80"/><rect x="9" y="10" width="1" height="1" fill="#ffcc99"/><rect x="10" y="10" width="1" height="1" fill="#ffff80"/><rect x="11" y="10" width="1" height="1" fill="#ffcc99"/><rect x="12" y="10" width="1" height="1" fill="#ffff80"/><rect x="13" y="10" width="1" height="1" fill="#808000"/><rect x="14" y="10" width="1" height="1" fill="#000000"/><rect x="1" y="11" width="1" height="1" fill="#808000"/><rect x="2" y="11" width="5" height="1" fill="#ffff80"/><rect x="7" y="11" width="1" height="1" fill="#ffcc99"/><rect x="8" y="11" width="1" height="1" fill="#ffff80"/><rect x="9" y="11" width="1" height="1" fill="#ffcc99"/><rect x="10" y="11" width="1" height="1" fill="#ffff80"/><rect x="11" y="11" width="1" height="1" fill="#ffcc99"/><rect x="12" y="11" width="1" height="1" fill="#ffff80"/><rect x="13" y="11" width="1" height="1" fill="#808000"/><rect x="14" y="11" width="1" height="1" fill="#000000"/><rect x="1" y="12" width="1" height="1" fill="#808000"/><rect x="2" y="12" width="1" height="1" fill="#ffff80"/><rect x="3" y="12" width="1" height="1" fill="#ffcc99"/><rect x="4" y="12" width="1" height="1" fill="#ffff80"/><rect x="5" y="12" width="1" height="1" fill="#ffcc99"/><rect x="6" y="12" width="1" height="1" fill="#ffff80"/><rect x="7" y="12" width="1" height="1" fill="#ffcc99"/><rect x="8" y="12" width="1" height="1" fill="#ffff80"/><rect x="9" y="12" width="1" height="1" fill="#ffcc99"/><rect x="10" y="12" width="1" height="1" fill="#ffff80"/><rect x="11" y="12" width="1" height="1" fill="#ffcc99"/><rect x="12" y="12" width="1" height="1" fill="#ffff80"/><rect x="13" y="12" width="1" height="1" fill="#808000"/><rect x="14" y="12" width="1" height="1" fill="#000000"/><rect x="1" y="13" width="14" height="1" fill="#808000"/><rect x="15" y="13" width="1" height="1" fill="#000000"/><rect x="2" y="14" width="13" height="1" fill="#000000"/></svg>
<div class="t " style="left:328px;top:296px;">Мои документы</div>
<svg class="a" style="left:309px;top:311px" width="16" height="13" shape-rendering="crispEdges"><rect x="3" y="0" width="5" height="1" fill="#a8a800"/><rect x="2" y="1" width="1" height="1" fill="#a8a800"/><rect x="3" y="1" width="5" height="1" fill="#ffffff"/><rect x="8" y="1" width="1" height="1" fill="#a8a800"/><rect x="9" y="1" width="1" height="1" fill="#000000"/><rect x="1" y="2" width="14" height="1" fill="#a8a800"/><rect x="1" y="3" width="1" height="1" fill="#a8a800"/><rect x="2" y="3" width="1" height="1" fill="#ffffff"/><rect x="3" y="3" width="11" height="1" fill="#ffff80"/><rect x="14" y="3" width="1" height="1" fill="#a8a800"/><rect x="15" y="3" width="1" height="1" fill="#000000"/><rect x="1" y="4" width="1" height="1" fill="#a8a800"/><rect x="2" y="4" width="12" height="1" fill="#ffff80"/><rect x="14" y="4" width="1" height="1" fill="#a8a800"/><rect x="15" y="4" width="1" height="1" fill="#000000"/><rect x="1" y="5" width="1" height="1" fill="#a8a800"/><rect x="2" y="5" width="10" height="1" fill="#ffff80"/><rect x="12" y="5" width="1" height="1" fill="#ffcc99"/><rect x="13" y="5" width="1" height="1" fill="#ffff80"/><rect x="14" y="5" width="1" height="1" fill="#a8a800"/><rect x="15" y="5" width="1" height="1" fill="#000000"/><rect x="1" y="6" width="1" height="1" fill="#a8a800"/><rect x="2" y="6" width="9" height="1" fill="#ffff80"/><rect x="11" y="6" width="1" height="1" fill="#ffcc99"/><rect x="12" y="6" width="1" height="1" fill="#ffff80"/><rect x="13" y="6" width="1" height="1" fill="#ffcc99"/><rect x="14" y="6" width="1" height="1" fill="#a8a800"/><rect x="15" y="6" width="1" height="1" fill="#000000"/><rect x="1" y="7" width="1" height="1" fill="#a8a800"/><rect x="2" y="7" width="7" height="1" fill="#ffff80"/><rect x="9" y="7" width="1" height="1" fill="#ffcc99"/><rect x="10" y="7" width="1" height="1" fill="#ffff80"/><rect x="11" y="7" width="1" height="1" fill="#ffcc99"/><rect x="12" y="7" width="1" height="1" fill="#ffff80"/><rect x="13" y="7" width="1" height="1" fill="#ffcc99"/><rect x="14" y="7" width="1" height="1" fill="#a8a800"/><rect x="15" y="7" width="1" height="1" fill="#000000"/><rect x="1" y="8" width="1" height="1" fill="#a8a800"/><rect x="2" y="8" width="6" height="1" fill="#ffff80"/><rect x="8" y="8" width="1" height="1" fill="#ffcc99"/><rect x="9" y="8" width="1" height="1" fill="#ffff80"/><rect x="10" y="8" width="1" height="1" fill="#ffcc99"/><rect x="11" y="8" width="1" height="1" fill="#ffff80"/><rect x="12" y="8" width="2" height="1" fill="#ffcc99"/><rect x="14" y="8" width="1" height="1" fill="#a8a800"/><rect x="15" y="8" width="1" height="1" fill="#000000"/><rect x="1" y="9" width="1" height="1" fill="#a8a800"/><rect x="2" y="9" width="5" height="1" fill="#ffff80"/><rect x="7" y="9" width="1" height="1" fill="#ffcc99"/><rect x="8" y="9" width="1" height="1" fill="#ffff80"/><rect x="9" y="9" width="1" height="1" fill="#ffcc99"/><rect x="10" y="9" width="1" height="1" fill="#ffff80"/><rect x="11" y="9" width="1" height="1" fill="#ffcc99"/><rect x="12" y="9" width="1" height="1" fill="#ffff80"/><rect x="13" y="9" width="1" height="1" fill="#ffcc99"/><rect x="14" y="9" width="1" height="1" fill="#a8a800"/><rect x="15" y="9" width="1" height="1" fill="#000000"/><rect x="1" y="10" width="1" height="1" fill="#a8a800"/><rect x="2" y="10" width="3" height="1" fill="#ffff80"/><rect x="5" y="10" width="1" height="1" fill="#ffcc99"/><rect x="6" y="10" width="1" height="1" fill="#ffff80"/><rect x="7" y="10" width="1" height="1" fill="#ffcc99"/><rect x="8" y="10" width="1" height="1" fill="#ffff80"/><rect x="9" y="10" width="1" height="1" fill="#ffcc99"/><rect x="10" y="10" width="1" height="1" fill="#ffff80"/><rect x="11" y="10" width="3" height="1" fill="#ffcc99"/><rect x="14" y="10" width="1" height="1" fill="#a8a800"/><rect x="15" y="10" width="1" height="1" fill="#000000"/><rect x="1" y="11" width="14" height="1" fill="#a8a800"/><rect x="15" y="11" width="1" height="1" fill="#000000"/><rect x="2" y="12" width="14" height="1" fill="#000000"/></svg>
<div class="t " style="left:328px;top:313px;">Саша</div>
<div class="t " style="left:198px;top:373px;"><span class="u">И</span>мя файла:</div>
<div class="a sunk" style="left:271px;top:370px;width:233px;height:20px;background:#fff"></div>
<div class="t " style="left:199px;top:403px;"><span class="u">Т</span>ип файлов:</div>
<div class="a sunk" style="left:271px;top:400px;width:233px;height:21px;background:#fff"></div>
<div class="a raised" style="left:486px;top:402px;width:16px;height:17px;"></div>
<svg class="a" style="left:490px;top:409px" width="8" height="4" shape-rendering="crispEdges"><rect x="0" y="0" width="7" height="1"/><rect x="1" y="1" width="5" height="1"/><rect x="2" y="2" width="3" height="1"/><rect x="3" y="3" width="1" height="1"/></svg>
<div class="t " style="left:275px;top:404px;">Компас-Фрагменты чертежа (*.frw)</div>
<div class="a sunk" style="left:271px;top:433px;width:13px;height:13px;background:#fff"></div>
<div class="t " style="left:290px;top:433px;">Только <span class="u">ч</span>тение</div>
<div class="a" style="left:523px;top:369px;width:76px;height:23px;border:1px solid #000;background:#c0c0c0;box-shadow:inset -1px -1px #000,inset 1px 1px #fff,inset -2px -2px #808080,inset 2px 2px #dfdfdf"></div>
<div class="t " style="left:523px;top:374px;width:76px;text-align:center"><span class="u">О</span>ткрыть</div>
<div class="a raised" style="left:523px;top:398px;width:76px;height:23px;"></div>
<div class="t " style="left:523px;top:403px;width:76px;text-align:center">Отмена</div>
<div class="a sunk" style="left:610px;top:367px;width:153px;height:72px;background:transparent"></div>
<div class="t " style="left:613px;top:370px;">Не определено имя файла<br>документа</div>
<div class="a sunk" style="left:610px;top:445px;width:13px;height:13px;background:#fff"></div>
<div class="t " style="left:628px;top:446px;">В<span class="u">ы</span>ключить просмотр</div>
<div class="a" style="left:0px;top:572px;width:800px;height:28px;background:#c0c0c0;box-shadow:inset 0 1px #dfdfdf,inset 0 2px #fff"></div>
<div class="a raised" style="left:2px;top:576px;width:56px;height:22px;"></div>
<svg class="a" style="left:4px;top:578px" width="18" height="16" shape-rendering="crispEdges"><rect x="11" y="2" width="4" height="1" fill="#000000"/><rect x="9" y="3" width="9" height="1" fill="#000000"/><rect x="2" y="4" width="1" height="1" fill="#000000"/><rect x="8" y="4" width="2" height="1" fill="#000000"/><rect x="10" y="4" width="2" height="1" fill="#ff0000"/><rect x="12" y="4" width="2" height="1" fill="#000000"/><rect x="14" y="4" width="2" height="1" fill="#00ff00"/><rect x="16" y="4" width="2" height="1" fill="#000000"/><rect x="2" y="5" width="1" height="1" fill="#000000"/><rect x="4" y="5" width="5" height="1" fill="#000000"/><rect x="9" y="5" width="2" height="1" fill="#ff0000"/><rect x="11" y="5" width="3" height="1" fill="#000000"/><rect x="14" y="5" width="2" height="1" fill="#00ff00"/><rect x="16" y="5" width="2" height="1" fill="#000000"/><rect x="4" y="6" width="5" height="1" fill="#000000"/><rect x="9" y="6" width="2" height="1" fill="#ff0000"/><rect x="11" y="6" width="4" height="1" fill="#000000"/><rect x="15" y="6" width="2" height="1" fill="#00ff00"/><rect x="17" y="6" width="1" height="1" fill="#000000"/><rect x="2" y="7" width="1" height="1" fill="#ff0000"/><rect x="8" y="7" width="1" height="1" fill="#000000"/><rect x="9" y="7" width="2" height="1" fill="#ff0000"/><rect x="11" y="7" width="4" height="1" fill="#000000"/><rect x="15" y="7" width="2" height="1" fill="#00ff00"/><rect x="17" y="7" width="1" height="1" fill="#000000"/><rect x="2" y="8" width="1" height="1" fill="#ff0000"/><rect x="4" y="8" width="4" height="1" fill="#ff0000"/><rect x="8" y="8" width="10" height="1" fill="#000000"/><rect x="4" y="9" width="4" height="1" fill="#ff0000"/><rect x="8" y="9" width="10" height="1" fill="#000000"/><rect x="2" y="10" width="1" height="1" fill="#0000ff"/><rect x="8" y="10" width="1" height="1" fill="#000000"/><rect x="9" y="10" width="2" height="1" fill="#0000ff"/><rect x="11" y="10" width="3" height="1" fill="#000000"/><rect x="14" y="10" width="2" height="1" fill="#ffff00"/><rect x="16" y="10" width="2" height="1" fill="#000000"/><rect x="2" y="11" width="1" height="1" fill="#0000ff"/><rect x="4" y="11" width="4" height="1" fill="#0000ff"/><rect x="8" y="11" width="1" height="1" fill="#000000"/><rect x="9" y="11" width="2" height="1" fill="#0000ff"/><rect x="11" y="11" width="4" height="1" fill="#000000"/><rect x="15" y="11" width="2" height="1" fill="#ffff00"/><rect x="17" y="11" width="1" height="1" fill="#000000"/><rect x="4" y="12" width="6" height="1" fill="#0000ff"/><rect x="10" y="12" width="5" height="1" fill="#000000"/><rect x="15" y="12" width="2" height="1" fill="#ffff00"/><rect x="17" y="12" width="1" height="1" fill="#000000"/><rect x="2" y="13" width="1" height="1" fill="#000000"/><rect x="8" y="13" width="1" height="1" fill="#000000"/><rect x="9" y="13" width="1" height="1" fill="#0000ff"/><rect x="10" y="13" width="5" height="1" fill="#000000"/><rect x="15" y="13" width="2" height="1" fill="#ffff00"/><rect x="17" y="13" width="1" height="1" fill="#000000"/><rect x="2" y="14" width="1" height="1" fill="#000000"/><rect x="4" y="14" width="14" height="1" fill="#000000"/><rect x="4" y="15" width="6" height="1" fill="#000000"/><rect x="15" y="15" width="3" height="1" fill="#000000"/></svg>
<div class="t b" style="left:25px;top:581px;font-size:12px">Пуск</div>
<div class="a" style="left:60px;top:576px;width:1px;height:22px;background:#808080"></div>
<div class="a" style="left:61px;top:576px;width:1px;height:22px;background:#fff"></div>
<div class="a" style="left:64px;top:578px;width:3px;height:18px;box-shadow:inset 1px 1px #fff,inset -1px -1px #808080"></div>
<svg class="a" style="left:74px;top:579px" width="16" height="16" shape-rendering="crispEdges"><rect x="14" y="0" width="2" height="1" fill="#ff0000"/><rect x="0" y="1" width="10" height="1" fill="#0080ff"/><rect x="13" y="1" width="1" height="1" fill="#ffff00"/><rect x="14" y="1" width="1" height="1" fill="#800000"/><rect x="15" y="1" width="1" height="1" fill="#ff0000"/><rect x="0" y="2" width="1" height="1" fill="#0080ff"/><rect x="1" y="2" width="1" height="1" fill="#00ffff"/><rect x="2" y="2" width="1" height="1" fill="#0080ff"/><rect x="3" y="2" width="7" height="1" fill="#ffe0b0"/><rect x="12" y="2" width="2" height="1" fill="#ffff00"/><rect x="14" y="2" width="1" height="1" fill="#000000"/><rect x="0" y="3" width="2" height="1" fill="#0080ff"/><rect x="2" y="3" width="1" height="1" fill="#ffe0b0"/><rect x="3" y="3" width="3" height="1" fill="#ffffff"/><rect x="6" y="3" width="4" height="1" fill="#ffe0b0"/><rect x="11" y="3" width="2" height="1" fill="#ffff00"/><rect x="13" y="3" width="1" height="1" fill="#000000"/><rect x="15" y="3" width="1" height="1" fill="#0080ff"/><rect x="0" y="4" width="1" height="1" fill="#0080ff"/><rect x="1" y="4" width="1" height="1" fill="#ffe0b0"/><rect x="2" y="4" width="5" height="1" fill="#ffffff"/><rect x="7" y="4" width="2" height="1" fill="#ffe0b0"/><rect x="10" y="4" width="2" height="1" fill="#ffff00"/><rect x="12" y="4" width="1" height="1" fill="#000000"/><rect x="14" y="4" width="2" height="1" fill="#0080ff"/><rect x="0" y="5" width="1" height="1" fill="#0080ff"/><rect x="1" y="5" width="1" height="1" fill="#ffe0b0"/><rect x="2" y="5" width="4" height="1" fill="#ffffff"/><rect x="6" y="5" width="2" height="1" fill="#ffe0b0"/><rect x="9" y="5" width="2" height="1" fill="#ffff00"/><rect x="11" y="5" width="1" height="1" fill="#000000"/><rect x="14" y="5" width="1" height="1" fill="#ffe0b0"/><rect x="15" y="5" width="1" height="1" fill="#0080ff"/><rect x="0" y="6" width="1" height="1" fill="#0080ff"/><rect x="1" y="6" width="1" height="1" fill="#ffe0b0"/><rect x="2" y="6" width="3" height="1" fill="#ffffff"/><rect x="5" y="6" width="1" height="1" fill="#000000"/><rect x="6" y="6" width="1" height="1" fill="#ffe0b0"/><rect x="8" y="6" width="2" height="1" fill="#ffff00"/><rect x="10" y="6" width="1" height="1" fill="#000000"/><rect x="13" y="6" width="2" height="1" fill="#ffe0b0"/><rect x="15" y="6" width="1" height="1" fill="#0080ff"/><rect x="0" y="7" width="1" height="1" fill="#0080ff"/><rect x="1" y="7" width="1" height="1" fill="#ffe0b0"/><rect x="2" y="7" width="2" height="1" fill="#ffffff"/><rect x="4" y="7" width="1" height="1" fill="#000000"/><rect x="5" y="7" width="2" height="1" fill="#ffffff"/><rect x="7" y="7" width="2" height="1" fill="#ffff00"/><rect x="9" y="7" width="1" height="1" fill="#000000"/><rect x="12" y="7" width="3" height="1" fill="#ffe0b0"/><rect x="15" y="7" width="1" height="1" fill="#0080ff"/><rect x="0" y="8" width="1" height="1" fill="#0080ff"/><rect x="1" y="8" width="1" height="1" fill="#ffe0b0"/><rect x="2" y="8" width="1" height="1" fill="#ffffff"/><rect x="3" y="8" width="1" height="1" fill="#000000"/><rect x="4" y="8" width="3" height="1" fill="#ffffff"/><rect x="7" y="8" width="2" height="1" fill="#000000"/><rect x="9" y="8" width="6" height="1" fill="#ffe0b0"/><rect x="15" y="8" width="1" height="1" fill="#0080ff"/><rect x="0" y="9" width="1" height="1" fill="#0080ff"/><rect x="1" y="9" width="1" height="1" fill="#ffe0b0"/><rect x="2" y="9" width="1" height="1" fill="#000000"/><rect x="3" y="9" width="4" height="1" fill="#ffffff"/><rect x="7" y="9" width="1" height="1" fill="#000000"/><rect x="8" y="9" width="7" height="1" fill="#ffe0b0"/><rect x="15" y="9" width="1" height="1" fill="#0080ff"/><rect x="0" y="10" width="1" height="1" fill="#0080ff"/><rect x="1" y="10" width="1" height="1" fill="#ffe0b0"/><rect x="2" y="10" width="1" height="1" fill="#ffffff"/><rect x="3" y="10" width="1" height="1" fill="#000000"/><rect x="4" y="10" width="2" height="1" fill="#ffffff"/><rect x="6" y="10" width="1" height="1" fill="#000000"/><rect x="7" y="10" width="8" height="1" fill="#ffe0b0"/><rect x="15" y="10" width="1" height="1" fill="#0080ff"/><rect x="0" y="11" width="1" height="1" fill="#0080ff"/><rect x="1" y="11" width="2" height="1" fill="#ffe0b0"/><rect x="3" y="11" width="1" height="1" fill="#ffffff"/><rect x="4" y="11" width="2" height="1" fill="#000000"/><rect x="6" y="11" width="8" height="1" fill="#ffe0b0"/><rect x="14" y="11" width="2" height="1" fill="#0080ff"/><rect x="0" y="12" width="2" height="1" fill="#0080ff"/><rect x="2" y="12" width="11" height="1" fill="#ffe0b0"/><rect x="13" y="12" width="1" height="1" fill="#0080ff"/><rect x="14" y="12" width="1" height="1" fill="#00ffff"/><rect x="15" y="12" width="1" height="1" fill="#0080ff"/><rect x="0" y="13" width="1" height="1" fill="#0080ff"/><rect x="1" y="13" width="1" height="1" fill="#00ffff"/><rect x="2" y="13" width="1" height="1" fill="#0080ff"/><rect x="3" y="13" width="9" height="1" fill="#ffe0b0"/><rect x="12" y="13" width="1" height="1" fill="#0080ff"/><rect x="13" y="13" width="2" height="1" fill="#00ffff"/><rect x="15" y="13" width="1" height="1" fill="#0080ff"/><rect x="0" y="14" width="16" height="1" fill="#0080ff"/><rect x="0" y="15" width="16" height="1" fill="#000000"/></svg>
<svg class="a" style="left:97px;top:579px" width="16" height="16" shape-rendering="crispEdges"><rect x="11" y="0" width="2" height="1" fill="#000000"/><rect x="10" y="1" width="1" height="1" fill="#000000"/><rect x="11" y="1" width="2" height="1" fill="#ffffff"/><rect x="13" y="1" width="1" height="1" fill="#000000"/><rect x="9" y="2" width="1" height="1" fill="#000000"/><rect x="10" y="2" width="2" height="1" fill="#ffffff"/><rect x="12" y="2" width="2" height="1" fill="#ffa000"/><rect x="14" y="2" width="1" height="1" fill="#000000"/><rect x="4" y="3" width="2" height="1" fill="#000000"/><rect x="8" y="3" width="1" height="1" fill="#000000"/><rect x="9" y="3" width="2" height="1" fill="#ffffff"/><rect x="11" y="3" width="3" height="1" fill="#ffa000"/><rect x="14" y="3" width="1" height="1" fill="#000000"/><rect x="3" y="4" width="1" height="1" fill="#000000"/><rect x="4" y="4" width="2" height="1" fill="#ffffff"/><rect x="6" y="4" width="2" height="1" fill="#000000"/><rect x="8" y="4" width="1" height="1" fill="#ffffff"/><rect x="9" y="4" width="4" height="1" fill="#ffa000"/><rect x="13" y="4" width="1" height="1" fill="#000000"/><rect x="2" y="5" width="1" height="1" fill="#000000"/><rect x="3" y="5" width="4" height="1" fill="#ffffff"/><rect x="7" y="5" width="5" height="1" fill="#ffa000"/><rect x="12" y="5" width="1" height="1" fill="#ffffff"/><rect x="13" y="5" width="1" height="1" fill="#000000"/><rect x="1" y="6" width="1" height="1" fill="#000000"/><rect x="2" y="6" width="2" height="1" fill="#ffffff"/><rect x="4" y="6" width="7" height="1" fill="#ffa000"/><rect x="11" y="6" width="3" height="1" fill="#ffffff"/><rect x="14" y="6" width="1" height="1" fill="#000000"/><rect x="0" y="7" width="1" height="1" fill="#000000"/><rect x="1" y="7" width="2" height="1" fill="#ffffff"/><rect x="3" y="7" width="8" height="1" fill="#ffa000"/><rect x="11" y="7" width="4" height="1" fill="#ffffff"/><rect x="15" y="7" width="1" height="1" fill="#000000"/><rect x="1" y="8" width="1" height="1" fill="#000000"/><rect x="2" y="8" width="4" height="1" fill="#ffffff"/><rect x="6" y="8" width="5" height="1" fill="#ffa000"/><rect x="11" y="8" width="3" height="1" fill="#ffffff"/><rect x="14" y="8" width="1" height="1" fill="#000000"/><rect x="2" y="9" width="1" height="1" fill="#000000"/><rect x="3" y="9" width="2" height="1" fill="#ffffff"/><rect x="5" y="9" width="5" height="1" fill="#ffa000"/><rect x="10" y="9" width="3" height="1" fill="#ffffff"/><rect x="13" y="9" width="1" height="1" fill="#000000"/><rect x="2" y="10" width="1" height="1" fill="#000000"/><rect x="3" y="10" width="1" height="1" fill="#ffffff"/><rect x="4" y="10" width="4" height="1" fill="#ffa000"/><rect x="8" y="10" width="4" height="1" fill="#ffffff"/><rect x="12" y="10" width="1" height="1" fill="#000000"/><rect x="1" y="11" width="1" height="1" fill="#000000"/><rect x="2" y="11" width="1" height="1" fill="#ffffff"/><rect x="3" y="11" width="4" height="1" fill="#ffa000"/><rect x="7" y="11" width="2" height="1" fill="#000000"/><rect x="9" y="11" width="2" height="1" fill="#ffffff"/><rect x="11" y="11" width="1" height="1" fill="#000000"/><rect x="1" y="12" width="1" height="1" fill="#000000"/><rect x="2" y="12" width="3" height="1" fill="#ffa000"/><rect x="5" y="12" width="1" height="1" fill="#000000"/><rect x="8" y="12" width="3" height="1" fill="#000000"/><rect x="0" y="13" width="1" height="1" fill="#000000"/><rect x="1" y="13" width="2" height="1" fill="#ffa000"/><rect x="3" y="13" width="1" height="1" fill="#000000"/><rect x="0" y="14" width="1" height="1" fill="#000000"/><rect x="1" y="14" width="1" height="1" fill="#ffa000"/><rect x="2" y="14" width="1" height="1" fill="#000000"/><rect x="0" y="15" width="2" height="1" fill="#000000"/></svg>
<svg class="a" style="left:120px;top:579px" width="16" height="16" shape-rendering="crispEdges"><rect x="2" y="2" width="13" height="1" fill="#008080"/><rect x="1" y="3" width="1" height="1" fill="#008080"/><rect x="2" y="3" width="1" height="1" fill="#ffffff"/><rect x="3" y="3" width="1" height="1" fill="#008080"/><rect x="4" y="3" width="1" height="1" fill="#ffffff"/><rect x="5" y="3" width="1" height="1" fill="#008080"/><rect x="6" y="3" width="1" height="1" fill="#ffffff"/><rect x="7" y="3" width="1" height="1" fill="#008080"/><rect x="8" y="3" width="1" height="1" fill="#ffffff"/><rect x="9" y="3" width="1" height="1" fill="#008080"/><rect x="10" y="3" width="1" height="1" fill="#ffffff"/><rect x="11" y="3" width="1" height="1" fill="#008080"/><rect x="12" y="3" width="1" height="1" fill="#ffffff"/><rect x="13" y="3" width="2" height="1" fill="#008080"/><rect x="15" y="3" width="1" height="1" fill="#000080"/><rect x="1" y="4" width="1" height="1" fill="#008080"/><rect x="2" y="4" width="1" height="1" fill="#ffffff"/><rect x="3" y="4" width="7" height="1" fill="#000000"/><rect x="10" y="4" width="5" height="1" fill="#008080"/><rect x="15" y="4" width="1" height="1" fill="#000080"/><rect x="1" y="5" width="2" height="1" fill="#008080"/><rect x="3" y="5" width="6" height="1" fill="#ffffff"/><rect x="9" y="5" width="1" height="1" fill="#000000"/><rect x="10" y="5" width="5" height="1" fill="#008080"/><rect x="15" y="5" width="1" height="1" fill="#000080"/><rect x="1" y="6" width="1" height="1" fill="#008080"/><rect x="2" y="6" width="1" height="1" fill="#ffffff"/><rect x="3" y="6" width="7" height="1" fill="#000000"/><rect x="10" y="6" width="5" height="1" fill="#008080"/><rect x="15" y="6" width="1" height="1" fill="#000080"/><rect x="1" y="7" width="14" height="1" fill="#008080"/><rect x="15" y="7" width="1" height="1" fill="#000080"/><rect x="1" y="8" width="1" height="1" fill="#008080"/><rect x="2" y="8" width="1" height="1" fill="#ffffff"/><rect x="3" y="8" width="1" height="1" fill="#008080"/><rect x="4" y="8" width="1" height="1" fill="#ffffff"/><rect x="5" y="8" width="1" height="1" fill="#008080"/><rect x="6" y="8" width="1" height="1" fill="#ffffff"/><rect x="7" y="8" width="1" height="1" fill="#008080"/><rect x="8" y="8" width="1" height="1" fill="#ffffff"/><rect x="9" y="8" width="1" height="1" fill="#008080"/><rect x="10" y="8" width="1" height="1" fill="#ffffff"/><rect x="11" y="8" width="1" height="1" fill="#008080"/><rect x="12" y="8" width="1" height="1" fill="#ffffff"/><rect x="13" y="8" width="2" height="1" fill="#008080"/><rect x="15" y="8" width="1" height="1" fill="#000080"/><rect x="1" y="9" width="14" height="1" fill="#008080"/><rect x="15" y="9" width="1" height="1" fill="#000080"/><rect x="1" y="10" width="1" height="1" fill="#008080"/><rect x="2" y="10" width="1" height="1" fill="#ffffff"/><rect x="3" y="10" width="1" height="1" fill="#008080"/><rect x="4" y="10" width="1" height="1" fill="#ffffff"/><rect x="5" y="10" width="1" height="1" fill="#008080"/><rect x="6" y="10" width="1" height="1" fill="#ffffff"/><rect x="7" y="10" width="1" height="1" fill="#008080"/><rect x="8" y="10" width="1" height="1" fill="#ffffff"/><rect x="9" y="10" width="1" height="1" fill="#008080"/><rect x="10" y="10" width="3" height="1" fill="#ffffff"/><rect x="13" y="10" width="2" height="1" fill="#008080"/><rect x="15" y="10" width="1" height="1" fill="#000080"/><rect x="1" y="11" width="15" height="1" fill="#000080"/><rect x="2" y="12" width="13" height="1" fill="#000000"/></svg>
<svg class="a" style="left:143px;top:579px" width="17" height="16" shape-rendering="crispEdges"><rect x="2" y="0" width="5" height="1" fill="#ff0000"/><rect x="10" y="0" width="5" height="1" fill="#ff0000"/><rect x="1" y="1" width="1" height="1" fill="#ff0000"/><rect x="2" y="1" width="1" height="1" fill="#00ff00"/><rect x="3" y="1" width="1" height="1" fill="#ffffff"/><rect x="4" y="1" width="1" height="1" fill="#00ff00"/><rect x="5" y="1" width="1" height="1" fill="#ffffff"/><rect x="6" y="1" width="1" height="1" fill="#00ff00"/><rect x="7" y="1" width="1" height="1" fill="#ff0000"/><rect x="9" y="1" width="1" height="1" fill="#ff0000"/><rect x="10" y="1" width="1" height="1" fill="#00ff00"/><rect x="11" y="1" width="1" height="1" fill="#ffffff"/><rect x="12" y="1" width="1" height="1" fill="#00ff00"/><rect x="13" y="1" width="1" height="1" fill="#ffffff"/><rect x="14" y="1" width="1" height="1" fill="#00ff00"/><rect x="15" y="1" width="1" height="1" fill="#ff0000"/><rect x="0" y="2" width="1" height="1" fill="#ff0000"/><rect x="1" y="2" width="1" height="1" fill="#00ff00"/><rect x="2" y="2" width="1" height="1" fill="#ffffff"/><rect x="3" y="2" width="1" height="1" fill="#00ff00"/><rect x="4" y="2" width="1" height="1" fill="#ffffff"/><rect x="5" y="2" width="1" height="1" fill="#00ff00"/><rect x="6" y="2" width="1" height="1" fill="#ffffff"/><rect x="7" y="2" width="1" height="1" fill="#00ff00"/><rect x="8" y="2" width="1" height="1" fill="#ff0000"/><rect x="9" y="2" width="1" height="1" fill="#00ff00"/><rect x="10" y="2" width="1" height="1" fill="#ffffff"/><rect x="11" y="2" width="1" height="1" fill="#00ff00"/><rect x="12" y="2" width="1" height="1" fill="#ffffff"/><rect x="13" y="2" width="1" height="1" fill="#00ff00"/><rect x="14" y="2" width="1" height="1" fill="#ffffff"/><rect x="15" y="2" width="1" height="1" fill="#00ff00"/><rect x="16" y="2" width="1" height="1" fill="#ff0000"/><rect x="0" y="3" width="1" height="1" fill="#ff0000"/><rect x="1" y="3" width="1" height="1" fill="#ffffff"/><rect x="2" y="3" width="4" height="1" fill="#ff0000"/><rect x="6" y="3" width="1" height="1" fill="#ffffff"/><rect x="7" y="3" width="1" height="1" fill="#00ff00"/><rect x="8" y="3" width="1" height="1" fill="#ffffff"/><rect x="9" y="3" width="1" height="1" fill="#00ff00"/><rect x="10" y="3" width="2" height="1" fill="#000080"/><rect x="12" y="3" width="1" height="1" fill="#00ff00"/><rect x="13" y="3" width="1" height="1" fill="#ffffff"/><rect x="14" y="3" width="1" height="1" fill="#000080"/><rect x="15" y="3" width="1" height="1" fill="#ffffff"/><rect x="16" y="3" width="1" height="1" fill="#ff0000"/><rect x="0" y="4" width="1" height="1" fill="#ff0000"/><rect x="1" y="4" width="1" height="1" fill="#00ff00"/><rect x="2" y="4" width="2" height="1" fill="#ff0000"/><rect x="4" y="4" width="1" height="1" fill="#00ff00"/><rect x="5" y="4" width="1" height="1" fill="#ffffff"/><rect x="6" y="4" width="1" height="1" fill="#00ff00"/><rect x="7" y="4" width="1" height="1" fill="#ffffff"/><rect x="8" y="4" width="1" height="1" fill="#00ff00"/><rect x="9" y="4" width="1" height="1" fill="#ffffff"/><rect x="10" y="4" width="2" height="1" fill="#000080"/><rect x="12" y="4" width="1" height="1" fill="#ffffff"/><rect x="13" y="4" width="1" height="1" fill="#00ff00"/><rect x="14" y="4" width="1" height="1" fill="#000080"/><rect x="15" y="4" width="1" height="1" fill="#00ff00"/><rect x="16" y="4" width="1" height="1" fill="#ff0000"/><rect x="0" y="5" width="1" height="1" fill="#ff0000"/><rect x="1" y="5" width="1" height="1" fill="#ffffff"/><rect x="2" y="5" width="2" height="1" fill="#ff0000"/><rect x="4" y="5" width="1" height="1" fill="#ffffff"/><rect x="5" y="5" width="1" height="1" fill="#00ff00"/><rect x="6" y="5" width="1" height="1" fill="#ffffff"/><rect x="7" y="5" width="1" height="1" fill="#00ff00"/><rect x="8" y="5" width="1" height="1" fill="#ffffff"/><rect x="9" y="5" width="1" height="1" fill="#00ff00"/><rect x="10" y="5" width="2" height="1" fill="#000080"/><rect x="12" y="5" width="1" height="1" fill="#00ff00"/><rect x="13" y="5" width="1" height="1" fill="#ffffff"/><rect x="14" y="5" width="1" height="1" fill="#000080"/><rect x="15" y="5" width="1" height="1" fill="#ffffff"/><rect x="16" y="5" width="1" height="1" fill="#ff0000"/><rect x="0" y="6" width="1" height="1" fill="#ff0000"/><rect x="1" y="6" width="1" height="1" fill="#00ff00"/><rect x="2" y="6" width="5" height="1" fill="#ff0000"/><rect x="7" y="6" width="1" height="1" fill="#00ff00"/><rect x="8" y="6" width="1" height="1" fill="#ffffff"/><rect x="9" y="6" width="1" height="1" fill="#00ff00"/><rect x="10" y="6" width="1" height="1" fill="#ffffff"/><rect x="11" y="6" width="3" height="1" fill="#000080"/><rect x="14" y="6" width="1" height="1" fill="#00ff00"/><rect x="15" y="6" width="1" height="1" fill="#ffffff"/><rect x="16" y="6" width="1" height="1" fill="#ff0000"/><rect x="1" y="7" width="3" height="1" fill="#ff0000"/><rect x="4" y="7" width="1" height="1" fill="#00ff00"/><rect x="5" y="7" width="1" height="1" fill="#ffffff"/><rect x="6" y="7" width="1" height="1" fill="#00ff00"/><rect x="7" y="7" width="1" height="1" fill="#ffffff"/><rect x="8" y="7" width="1" height="1" fill="#00ff00"/><rect x="9" y="7" width="1" height="1" fill="#ffffff"/><rect x="10" y="7" width="1" height="1" fill="#00ff00"/><rect x="11" y="7" width="2" height="1" fill="#000080"/><rect x="13" y="7" width="1" height="1" fill="#00ff00"/><rect x="14" y="7" width="1" height="1" fill="#ffffff"/><rect x="15" y="7" width="1" height="1" fill="#ff0000"/><rect x="1" y="8" width="3" height="1" fill="#ff0000"/><rect x="4" y="8" width="1" height="1" fill="#ffffff"/><rect x="5" y="8" width="1" height="1" fill="#00ff00"/><rect x="6" y="8" width="1" height="1" fill="#ffffff"/><rect x="7" y="8" width="1" height="1" fill="#00ff00"/><rect x="8" y="8" width="1" height="1" fill="#ffffff"/><rect x="9" y="8" width="1" height="1" fill="#00ff00"/><rect x="10" y="8" width="1" height="1" fill="#ffffff"/><rect x="11" y="8" width="2" height="1" fill="#000080"/><rect x="13" y="8" width="1" height="1" fill="#ffffff"/><rect x="14" y="8" width="1" height="1" fill="#00ff00"/><rect x="15" y="8" width="1" height="1" fill="#ff0000"/><rect x="2" y="9" width="2" height="1" fill="#ff0000"/><rect x="4" y="9" width="1" height="1" fill="#00ff00"/><rect x="5" y="9" width="1" height="1" fill="#ffffff"/><rect x="6" y="9" width="1" height="1" fill="#00ff00"/><rect x="7" y="9" width="1" height="1" fill="#ffffff"/><rect x="8" y="9" width="1" height="1" fill="#00ff00"/><rect x="9" y="9" width="1" height="1" fill="#ffffff"/><rect x="10" y="9" width="1" height="1" fill="#00ff00"/><rect x="11" y="9" width="2" height="1" fill="#000080"/><rect x="13" y="9" width="1" height="1" fill="#00ff00"/><rect x="14" y="9" width="1" height="1" fill="#ff0000"/><rect x="3" y="10" width="1" height="1" fill="#ff0000"/><rect x="4" y="10" width="1" height="1" fill="#ffffff"/><rect x="5" y="10" width="1" height="1" fill="#00ff00"/><rect x="6" y="10" width="1" height="1" fill="#ffffff"/><rect x="7" y="10" width="1" height="1" fill="#00ff00"/><rect x="8" y="10" width="1" height="1" fill="#ffffff"/><rect x="9" y="10" width="1" height="1" fill="#00ff00"/><rect x="10" y="10" width="1" height="1" fill="#ffffff"/><rect x="11" y="10" width="1" height="1" fill="#00ff00"/><rect x="12" y="10" width="1" height="1" fill="#ffffff"/><rect x="13" y="10" width="1" height="1" fill="#ff0000"/><rect x="4" y="11" width="1" height="1" fill="#ff0000"/><rect x="5" y="11" width="1" height="1" fill="#ffffff"/><rect x="6" y="11" width="1" height="1" fill="#00ff00"/><rect x="7" y="11" width="1" height="1" fill="#ffffff"/><rect x="8" y="11" width="1" height="1" fill="#00ff00"/><rect x="9" y="11" width="1" height="1" fill="#ffffff"/><rect x="10" y="11" width="1" height="1" fill="#00ff00"/><rect x="11" y="11" width="1" height="1" fill="#ffffff"/><rect x="12" y="11" width="1" height="1" fill="#ff0000"/><rect x="5" y="12" width="1" height="1" fill="#ff0000"/><rect x="6" y="12" width="1" height="1" fill="#00ff00"/><rect x="7" y="12" width="1" height="1" fill="#ffffff"/><rect x="8" y="12" width="1" height="1" fill="#00ff00"/><rect x="9" y="12" width="1" height="1" fill="#ffffff"/><rect x="10" y="12" width="1" height="1" fill="#00ff00"/><rect x="11" y="12" width="1" height="1" fill="#ff0000"/><rect x="6" y="13" width="1" height="1" fill="#ff0000"/><rect x="7" y="13" width="1" height="1" fill="#ffffff"/><rect x="8" y="13" width="1" height="1" fill="#00ff00"/><rect x="9" y="13" width="1" height="1" fill="#ffffff"/><rect x="10" y="13" width="1" height="1" fill="#ff0000"/><rect x="7" y="14" width="1" height="1" fill="#ff0000"/><rect x="8" y="14" width="1" height="1" fill="#00ff00"/><rect x="9" y="14" width="1" height="1" fill="#ff0000"/><rect x="8" y="15" width="1" height="1" fill="#ff0000"/></svg>
<svg class="a" style="left:166px;top:580px" width="16" height="15" shape-rendering="crispEdges"><rect x="1" y="0" width="1" height="1" fill="#000000"/><rect x="2" y="0" width="2" height="1" fill="#00ffff"/><rect x="4" y="0" width="1" height="1" fill="#000000"/><rect x="6" y="0" width="3" height="1" fill="#000000"/><rect x="9" y="0" width="2" height="1" fill="#ffff00"/><rect x="11" y="0" width="1" height="1" fill="#000000"/><rect x="0" y="1" width="1" height="1" fill="#000000"/><rect x="1" y="1" width="1" height="1" fill="#00ffff"/><rect x="2" y="1" width="2" height="1" fill="#ffff00"/><rect x="4" y="1" width="1" height="1" fill="#00ffff"/><rect x="5" y="1" width="2" height="1" fill="#000000"/><rect x="7" y="1" width="1" height="1" fill="#ffff00"/><rect x="8" y="1" width="1" height="1" fill="#000000"/><rect x="9" y="1" width="4" height="1" fill="#ffff00"/><rect x="13" y="1" width="1" height="1" fill="#000000"/><rect x="2" y="2" width="1" height="1" fill="#000000"/><rect x="3" y="2" width="1" height="1" fill="#00ffff"/><rect x="4" y="2" width="1" height="1" fill="#000000"/><rect x="5" y="2" width="2" height="1" fill="#ffff00"/><rect x="7" y="2" width="1" height="1" fill="#000000"/><rect x="8" y="2" width="5" height="1" fill="#ffff00"/><rect x="13" y="2" width="1" height="1" fill="#000000"/><rect x="0" y="3" width="1" height="1" fill="#000000"/><rect x="1" y="3" width="2" height="1" fill="#00ffff"/><rect x="3" y="3" width="1" height="1" fill="#000000"/><rect x="4" y="3" width="10" height="1" fill="#ffff00"/><rect x="14" y="3" width="1" height="1" fill="#000000"/><rect x="0" y="4" width="1" height="1" fill="#000000"/><rect x="1" y="4" width="2" height="1" fill="#ffff00"/><rect x="3" y="4" width="1" height="1" fill="#00ffff"/><rect x="4" y="4" width="1" height="1" fill="#000000"/><rect x="5" y="4" width="9" height="1" fill="#ffff00"/><rect x="14" y="4" width="1" height="1" fill="#000000"/><rect x="0" y="5" width="1" height="1" fill="#000000"/><rect x="1" y="5" width="2" height="1" fill="#00ffff"/><rect x="3" y="5" width="1" height="1" fill="#000000"/><rect x="4" y="5" width="10" height="1" fill="#ffff00"/><rect x="14" y="5" width="1" height="1" fill="#000000"/><rect x="0" y="6" width="4" height="1" fill="#ffff00"/><rect x="4" y="6" width="1" height="1" fill="#000000"/><rect x="5" y="6" width="1" height="1" fill="#00ffff"/><rect x="6" y="6" width="1" height="1" fill="#000000"/><rect x="7" y="6" width="7" height="1" fill="#ffff00"/><rect x="14" y="6" width="1" height="1" fill="#000000"/><rect x="0" y="7" width="5" height="1" fill="#ffff00"/><rect x="5" y="7" width="1" height="1" fill="#00ffff"/><rect x="6" y="7" width="2" height="1" fill="#000000"/><rect x="8" y="7" width="2" height="1" fill="#00ffff"/><rect x="10" y="7" width="1" height="1" fill="#000000"/><rect x="11" y="7" width="3" height="1" fill="#ffff00"/><rect x="14" y="7" width="1" height="1" fill="#000000"/><rect x="0" y="8" width="6" height="1" fill="#ffff00"/><rect x="6" y="8" width="1" height="1" fill="#00ffff"/><rect x="7" y="8" width="1" height="1" fill="#000000"/><rect x="8" y="8" width="1" height="1" fill="#00ffff"/><rect x="9" y="8" width="2" height="1" fill="#ffff00"/><rect x="11" y="8" width="1" height="1" fill="#000000"/><rect x="12" y="8" width="2" height="1" fill="#ffff00"/><rect x="14" y="8" width="1" height="1" fill="#000000"/><rect x="0" y="9" width="7" height="1" fill="#ffff00"/><rect x="7" y="9" width="1" height="1" fill="#000000"/><rect x="8" y="9" width="2" height="1" fill="#00ffff"/><rect x="10" y="9" width="1" height="1" fill="#000000"/><rect x="11" y="9" width="2" height="1" fill="#00ffff"/><rect x="13" y="9" width="1" height="1" fill="#000000"/><rect x="1" y="10" width="6" height="1" fill="#ffff00"/><rect x="7" y="10" width="1" height="1" fill="#000000"/><rect x="8" y="10" width="1" height="1" fill="#00ffff"/><rect x="9" y="10" width="3" height="1" fill="#000000"/><rect x="12" y="10" width="1" height="1" fill="#00ffff"/><rect x="13" y="10" width="1" height="1" fill="#000000"/><rect x="1" y="11" width="6" height="1" fill="#ffff00"/><rect x="7" y="11" width="1" height="1" fill="#000000"/><rect x="8" y="11" width="2" height="1" fill="#00ffff"/><rect x="10" y="11" width="2" height="1" fill="#000000"/><rect x="12" y="11" width="1" height="1" fill="#00ffff"/><rect x="13" y="11" width="1" height="1" fill="#000000"/><rect x="2" y="12" width="6" height="1" fill="#ffff00"/><rect x="8" y="12" width="1" height="1" fill="#000000"/><rect x="9" y="12" width="1" height="1" fill="#00ffff"/><rect x="10" y="12" width="2" height="1" fill="#000000"/><rect x="12" y="12" width="1" height="1" fill="#00ffff"/><rect x="13" y="12" width="1" height="1" fill="#000000"/><rect x="3" y="13" width="6" height="1" fill="#ffff00"/><rect x="9" y="13" width="1" height="1" fill="#000000"/><rect x="10" y="13" width="2" height="1" fill="#00ffff"/><rect x="12" y="13" width="1" height="1" fill="#000000"/><rect x="4" y="14" width="8" height="1" fill="#000000"/></svg>
<svg class="a" style="left:187px;top:580px" width="18" height="15" shape-rendering="crispEdges"><rect x="2" y="0" width="9" height="1" fill="#808080"/><rect x="11" y="0" width="1" height="1" fill="#000000"/><rect x="3" y="1" width="1" height="1" fill="#808080"/><rect x="4" y="1" width="8" height="1" fill="#ffffff"/><rect x="12" y="1" width="1" height="1" fill="#000000"/><rect x="4" y="2" width="1" height="1" fill="#808080"/><rect x="5" y="2" width="8" height="1" fill="#ffffff"/><rect x="13" y="2" width="1" height="1" fill="#000000"/><rect x="5" y="3" width="1" height="1" fill="#808080"/><rect x="6" y="3" width="8" height="1" fill="#dfdfdf"/><rect x="14" y="3" width="1" height="1" fill="#000000"/><rect x="6" y="4" width="1" height="1" fill="#808080"/><rect x="7" y="4" width="8" height="1" fill="#dfdfdf"/><rect x="15" y="4" width="1" height="1" fill="#000000"/><rect x="7" y="5" width="1" height="1" fill="#808080"/><rect x="8" y="5" width="8" height="1" fill="#dfdfdf"/><rect x="16" y="5" width="1" height="1" fill="#000000"/><rect x="6" y="6" width="1" height="1" fill="#808080"/><rect x="7" y="6" width="10" height="1" fill="#c0c0c0"/><rect x="17" y="6" width="1" height="1" fill="#000000"/><rect x="5" y="7" width="1" height="1" fill="#808080"/><rect x="6" y="7" width="10" height="1" fill="#ffffff"/><rect x="16" y="7" width="1" height="1" fill="#000000"/><rect x="4" y="8" width="1" height="1" fill="#000000"/><rect x="5" y="8" width="3" height="1" fill="#ffffff"/><rect x="8" y="8" width="2" height="1" fill="#00ffff"/><rect x="10" y="8" width="1" height="1" fill="#ffffff"/><rect x="11" y="8" width="3" height="1" fill="#00ffff"/><rect x="14" y="8" width="1" height="1" fill="#ffffff"/><rect x="15" y="8" width="1" height="1" fill="#000000"/><rect x="3" y="9" width="1" height="1" fill="#000000"/><rect x="4" y="9" width="3" height="1" fill="#ffffff"/><rect x="7" y="9" width="2" height="1" fill="#00ffff"/><rect x="9" y="9" width="5" height="1" fill="#ffffff"/><rect x="14" y="9" width="2" height="1" fill="#000000"/><rect x="2" y="10" width="1" height="1" fill="#000000"/><rect x="3" y="10" width="10" height="1" fill="#ffffff"/><rect x="13" y="10" width="1" height="1" fill="#000000"/><rect x="14" y="10" width="1" height="1" fill="#808080"/><rect x="15" y="10" width="1" height="1" fill="#000000"/><rect x="1" y="11" width="15" height="1" fill="#000000"/><rect x="1" y="12" width="1" height="1" fill="#000000"/><rect x="2" y="12" width="6" height="1" fill="#ffffff"/><rect x="8" y="12" width="2" height="1" fill="#00ff00"/><rect x="10" y="12" width="2" height="1" fill="#ffffff"/><rect x="12" y="12" width="2" height="1" fill="#ffff00"/><rect x="14" y="12" width="2" height="1" fill="#000000"/><rect x="1" y="13" width="1" height="1" fill="#000000"/><rect x="2" y="13" width="6" height="1" fill="#ffffff"/><rect x="8" y="13" width="2" height="1" fill="#00ff00"/><rect x="10" y="13" width="2" height="1" fill="#ffffff"/><rect x="12" y="13" width="2" height="1" fill="#ffff00"/><rect x="14" y="13" width="1" height="1" fill="#000000"/><rect x="1" y="14" width="13" height="1" fill="#000000"/></svg>
<svg class="a" style="left:212px;top:580px" width="15" height="14" shape-rendering="crispEdges"><rect x="0" y="0" width="12" height="1" fill="#800000"/><rect x="0" y="1" width="1" height="1" fill="#800000"/><rect x="1" y="1" width="11" height="1" fill="#ff0000"/><rect x="12" y="1" width="1" height="1" fill="#800000"/><rect x="0" y="2" width="1" height="1" fill="#800000"/><rect x="1" y="2" width="1" height="1" fill="#ff0000"/><rect x="2" y="2" width="1" height="1" fill="#00ffff"/><rect x="3" y="2" width="1" height="1" fill="#ffff00"/><rect x="4" y="2" width="1" height="1" fill="#ffe0b0"/><rect x="5" y="2" width="2" height="1" fill="#ffff00"/><rect x="7" y="2" width="1" height="1" fill="#ffe0b0"/><rect x="8" y="2" width="1" height="1" fill="#ffff00"/><rect x="9" y="2" width="2" height="1" fill="#00ffff"/><rect x="11" y="2" width="1" height="1" fill="#ff0000"/><rect x="12" y="2" width="1" height="1" fill="#800000"/><rect x="0" y="3" width="1" height="1" fill="#800000"/><rect x="1" y="3" width="1" height="1" fill="#ff0000"/><rect x="2" y="3" width="1" height="1" fill="#000000"/><rect x="3" y="3" width="2" height="1" fill="#ffe0b0"/><rect x="5" y="3" width="2" height="1" fill="#000000"/><rect x="7" y="3" width="2" height="1" fill="#ffe0b0"/><rect x="9" y="3" width="1" height="1" fill="#000000"/><rect x="10" y="3" width="1" height="1" fill="#00ffff"/><rect x="11" y="3" width="1" height="1" fill="#ff0000"/><rect x="12" y="3" width="1" height="1" fill="#800000"/><rect x="0" y="4" width="1" height="1" fill="#800000"/><rect x="1" y="4" width="1" height="1" fill="#ff0000"/><rect x="2" y="4" width="1" height="1" fill="#000000"/><rect x="3" y="4" width="1" height="1" fill="#ffe0b0"/><rect x="4" y="4" width="4" height="1" fill="#000000"/><rect x="8" y="4" width="1" height="1" fill="#ffe0b0"/><rect x="9" y="4" width="1" height="1" fill="#000000"/><rect x="10" y="4" width="1" height="1" fill="#00ffff"/><rect x="11" y="4" width="1" height="1" fill="#ff0000"/><rect x="12" y="4" width="1" height="1" fill="#800000"/><rect x="0" y="5" width="1" height="1" fill="#800000"/><rect x="1" y="5" width="1" height="1" fill="#ff0000"/><rect x="2" y="5" width="1" height="1" fill="#00ffff"/><rect x="3" y="5" width="1" height="1" fill="#000000"/><rect x="4" y="5" width="1" height="1" fill="#ffe0b0"/><rect x="5" y="5" width="2" height="1" fill="#000000"/><rect x="7" y="5" width="1" height="1" fill="#ffe0b0"/><rect x="8" y="5" width="1" height="1" fill="#000000"/><rect x="9" y="5" width="2" height="1" fill="#00ffff"/><rect x="11" y="5" width="1" height="1" fill="#ff0000"/><rect x="12" y="5" width="1" height="1" fill="#800000"/><rect x="0" y="6" width="1" height="1" fill="#800000"/><rect x="1" y="6" width="1" height="1" fill="#ff0000"/><rect x="2" y="6" width="2" height="1" fill="#00ffff"/><rect x="4" y="6" width="4" height="1" fill="#000000"/><rect x="8" y="6" width="3" height="1" fill="#00ffff"/><rect x="11" y="6" width="1" height="1" fill="#ff0000"/><rect x="12" y="6" width="1" height="1" fill="#800000"/><rect x="0" y="7" width="1" height="1" fill="#800000"/><rect x="1" y="7" width="1" height="1" fill="#ff0000"/><rect x="2" y="7" width="3" height="1" fill="#00ffff"/><rect x="5" y="7" width="2" height="1" fill="#000000"/><rect x="7" y="7" width="2" height="1" fill="#00ffff"/><rect x="9" y="7" width="1" height="1" fill="#0080ff"/><rect x="10" y="7" width="1" height="1" fill="#00ffff"/><rect x="11" y="7" width="1" height="1" fill="#ff0000"/><rect x="12" y="7" width="1" height="1" fill="#800000"/><rect x="0" y="8" width="1" height="1" fill="#800000"/><rect x="1" y="8" width="1" height="1" fill="#ff0000"/><rect x="2" y="8" width="1" height="1" fill="#0080ff"/><rect x="3" y="8" width="1" height="1" fill="#00ffff"/><rect x="4" y="8" width="4" height="1" fill="#000000"/><rect x="8" y="8" width="2" height="1" fill="#00ffff"/><rect x="10" y="8" width="1" height="1" fill="#0080ff"/><rect x="11" y="8" width="1" height="1" fill="#ff0000"/><rect x="12" y="8" width="1" height="1" fill="#800000"/><rect x="0" y="9" width="1" height="1" fill="#800000"/><rect x="1" y="9" width="1" height="1" fill="#ff0000"/><rect x="2" y="9" width="2" height="1" fill="#000000"/><rect x="4" y="9" width="1" height="1" fill="#00ffff"/><rect x="5" y="9" width="1" height="1" fill="#0080ff"/><rect x="6" y="9" width="1" height="1" fill="#000000"/><rect x="7" y="9" width="2" height="1" fill="#00ffff"/><rect x="9" y="9" width="2" height="1" fill="#000000"/><rect x="11" y="9" width="1" height="1" fill="#ff0000"/><rect x="12" y="9" width="1" height="1" fill="#800000"/><rect x="0" y="10" width="1" height="1" fill="#800000"/><rect x="1" y="10" width="1" height="1" fill="#ff0000"/><rect x="2" y="10" width="1" height="1" fill="#000000"/><rect x="3" y="10" width="1" height="1" fill="#00ffff"/><rect x="4" y="10" width="2" height="1" fill="#0080ff"/><rect x="6" y="10" width="1" height="1" fill="#000000"/><rect x="7" y="10" width="1" height="1" fill="#00ffff"/><rect x="8" y="10" width="1" height="1" fill="#0080ff"/><rect x="9" y="10" width="1" height="1" fill="#00ffff"/><rect x="10" y="10" width="1" height="1" fill="#000000"/><rect x="11" y="10" width="1" height="1" fill="#ff0000"/><rect x="12" y="10" width="1" height="1" fill="#800000"/><rect x="0" y="11" width="1" height="1" fill="#800000"/><rect x="1" y="11" width="1" height="1" fill="#ff0000"/><rect x="2" y="11" width="2" height="1" fill="#0080ff"/><rect x="4" y="11" width="1" height="1" fill="#00ffff"/><rect x="5" y="11" width="1" height="1" fill="#0080ff"/><rect x="6" y="11" width="1" height="1" fill="#000000"/><rect x="7" y="11" width="1" height="1" fill="#00ffff"/><rect x="8" y="11" width="3" height="1" fill="#0080ff"/><rect x="11" y="11" width="1" height="1" fill="#ff0000"/><rect x="12" y="11" width="1" height="1" fill="#800000"/><rect x="0" y="12" width="1" height="1" fill="#800000"/><rect x="1" y="12" width="11" height="1" fill="#ff0000"/><rect x="12" y="12" width="1" height="1" fill="#800000"/><rect x="0" y="13" width="13" height="1" fill="#800000"/></svg>
<svg class="a" style="left:235px;top:580px" width="16" height="15" shape-rendering="crispEdges"><rect x="2" y="0" width="1" height="1" fill="#000000"/><rect x="8" y="0" width="3" height="1" fill="#000000"/><rect x="13" y="0" width="2" height="1" fill="#000000"/><rect x="1" y="1" width="1" height="1" fill="#000000"/><rect x="2" y="1" width="1" height="1" fill="#ffffff"/><rect x="3" y="1" width="1" height="1" fill="#000000"/><rect x="6" y="1" width="3" height="1" fill="#000000"/><rect x="9" y="1" width="1" height="1" fill="#ffffff"/><rect x="10" y="1" width="1" height="1" fill="#000000"/><rect x="12" y="1" width="1" height="1" fill="#000000"/><rect x="13" y="1" width="1" height="1" fill="#ffffff"/><rect x="14" y="1" width="1" height="1" fill="#000000"/><rect x="2" y="2" width="1" height="1" fill="#000000"/><rect x="3" y="2" width="1" height="1" fill="#ffffff"/><rect x="4" y="2" width="2" height="1" fill="#000000"/><rect x="6" y="2" width="2" height="1" fill="#ff0000"/><rect x="8" y="2" width="1" height="1" fill="#000000"/><rect x="9" y="2" width="1" height="1" fill="#008080"/><rect x="10" y="2" width="1" height="1" fill="#000000"/><rect x="12" y="2" width="1" height="1" fill="#000000"/><rect x="13" y="2" width="1" height="1" fill="#ffffff"/><rect x="14" y="2" width="1" height="1" fill="#000000"/><rect x="3" y="3" width="1" height="1" fill="#000000"/><rect x="4" y="3" width="1" height="1" fill="#0000ff"/><rect x="5" y="3" width="1" height="1" fill="#000000"/><rect x="6" y="3" width="2" height="1" fill="#ff0000"/><rect x="8" y="3" width="1" height="1" fill="#000000"/><rect x="9" y="3" width="1" height="1" fill="#008080"/><rect x="10" y="3" width="2" height="1" fill="#000000"/><rect x="12" y="3" width="1" height="1" fill="#ffffff"/><rect x="13" y="3" width="1" height="1" fill="#000000"/><rect x="3" y="4" width="1" height="1" fill="#000000"/><rect x="4" y="4" width="2" height="1" fill="#0000ff"/><rect x="6" y="4" width="2" height="1" fill="#ff0000"/><rect x="8" y="4" width="2" height="1" fill="#008080"/><rect x="10" y="4" width="1" height="1" fill="#000000"/><rect x="11" y="4" width="1" height="1" fill="#ffff00"/><rect x="12" y="4" width="1" height="1" fill="#000000"/><rect x="4" y="5" width="1" height="1" fill="#000000"/><rect x="5" y="5" width="1" height="1" fill="#0000ff"/><rect x="6" y="5" width="2" height="1" fill="#ff0000"/><rect x="8" y="5" width="2" height="1" fill="#008080"/><rect x="10" y="5" width="2" height="1" fill="#ffff00"/><rect x="12" y="5" width="1" height="1" fill="#000000"/><rect x="4" y="6" width="1" height="1" fill="#000000"/><rect x="5" y="6" width="1" height="1" fill="#0000ff"/><rect x="6" y="6" width="2" height="1" fill="#ff0000"/><rect x="8" y="6" width="1" height="1" fill="#008080"/><rect x="9" y="6" width="2" height="1" fill="#ffff00"/><rect x="11" y="6" width="1" height="1" fill="#000000"/><rect x="2" y="7" width="13" height="1" fill="#000000"/><rect x="2" y="8" width="1" height="1" fill="#000000"/><rect x="3" y="8" width="10" height="1" fill="#ffffff"/><rect x="13" y="8" width="1" height="1" fill="#c0c0c0"/><rect x="14" y="8" width="1" height="1" fill="#000000"/><rect x="3" y="9" width="1" height="1" fill="#000000"/><rect x="4" y="9" width="2" height="1" fill="#ffffff"/><rect x="6" y="9" width="4" height="1" fill="#dfdfdf"/><rect x="10" y="9" width="2" height="1" fill="#c0c0c0"/><rect x="12" y="9" width="1" height="1" fill="#808080"/><rect x="13" y="9" width="1" height="1" fill="#000000"/><rect x="3" y="10" width="1" height="1" fill="#000000"/><rect x="4" y="10" width="2" height="1" fill="#ffffff"/><rect x="6" y="10" width="3" height="1" fill="#dfdfdf"/><rect x="9" y="10" width="3" height="1" fill="#c0c0c0"/><rect x="12" y="10" width="1" height="1" fill="#808080"/><rect x="13" y="10" width="1" height="1" fill="#000000"/><rect x="3" y="11" width="1" height="1" fill="#000000"/><rect x="4" y="11" width="1" height="1" fill="#ffffff"/><rect x="5" y="11" width="3" height="1" fill="#dfdfdf"/><rect x="8" y="11" width="4" height="1" fill="#c0c0c0"/><rect x="12" y="11" width="1" height="1" fill="#808080"/><rect x="13" y="11" width="1" height="1" fill="#000000"/><rect x="3" y="12" width="1" height="1" fill="#000000"/><rect x="4" y="12" width="1" height="1" fill="#ffffff"/><rect x="5" y="12" width="2" height="1" fill="#dfdfdf"/><rect x="7" y="12" width="5" height="1" fill="#c0c0c0"/><rect x="12" y="12" width="1" height="1" fill="#808080"/><rect x="13" y="12" width="1" height="1" fill="#000000"/><rect x="3" y="13" width="1" height="1" fill="#000000"/><rect x="4" y="13" width="1" height="1" fill="#ffffff"/><rect x="5" y="13" width="1" height="1" fill="#dfdfdf"/><rect x="6" y="13" width="6" height="1" fill="#c0c0c0"/><rect x="12" y="13" width="1" height="1" fill="#808080"/><rect x="13" y="13" width="1" height="1" fill="#000000"/><rect x="4" y="14" width="9" height="1" fill="#000000"/></svg>
<svg class="a" style="left:258px;top:579px" width="16" height="16" shape-rendering="crispEdges"><rect x="0" y="0" width="1" height="1" fill="#0000ff"/><rect x="1" y="0" width="1" height="1" fill="#000000"/><rect x="2" y="0" width="1" height="1" fill="#0000ff"/><rect x="3" y="0" width="1" height="1" fill="#000000"/><rect x="4" y="0" width="1" height="1" fill="#0000ff"/><rect x="5" y="0" width="1" height="1" fill="#000000"/><rect x="6" y="0" width="1" height="1" fill="#0000ff"/><rect x="7" y="0" width="1" height="1" fill="#000000"/><rect x="8" y="0" width="1" height="1" fill="#0000ff"/><rect x="9" y="0" width="1" height="1" fill="#000000"/><rect x="10" y="0" width="1" height="1" fill="#0000ff"/><rect x="11" y="0" width="1" height="1" fill="#000000"/><rect x="12" y="0" width="1" height="1" fill="#0000ff"/><rect x="13" y="0" width="1" height="1" fill="#000000"/><rect x="14" y="0" width="1" height="1" fill="#0000ff"/><rect x="15" y="0" width="1" height="1" fill="#000000"/><rect x="0" y="1" width="1" height="1" fill="#000000"/><rect x="1" y="1" width="1" height="1" fill="#0000ff"/><rect x="2" y="1" width="1" height="1" fill="#000000"/><rect x="3" y="1" width="1" height="1" fill="#0000ff"/><rect x="4" y="1" width="1" height="1" fill="#000000"/><rect x="5" y="1" width="1" height="1" fill="#0000ff"/><rect x="6" y="1" width="1" height="1" fill="#000000"/><rect x="7" y="1" width="1" height="1" fill="#0000ff"/><rect x="8" y="1" width="1" height="1" fill="#000000"/><rect x="9" y="1" width="1" height="1" fill="#0000ff"/><rect x="10" y="1" width="1" height="1" fill="#000000"/><rect x="11" y="1" width="1" height="1" fill="#0000ff"/><rect x="12" y="1" width="1" height="1" fill="#000000"/><rect x="13" y="1" width="1" height="1" fill="#0000ff"/><rect x="14" y="1" width="1" height="1" fill="#000000"/><rect x="15" y="1" width="1" height="1" fill="#0000ff"/><rect x="0" y="2" width="1" height="1" fill="#0000ff"/><rect x="1" y="2" width="1" height="1" fill="#000000"/><rect x="2" y="2" width="12" height="1" fill="#ffffff"/><rect x="14" y="2" width="1" height="1" fill="#0000ff"/><rect x="15" y="2" width="1" height="1" fill="#000000"/><rect x="0" y="3" width="1" height="1" fill="#000000"/><rect x="1" y="3" width="1" height="1" fill="#0000ff"/><rect x="2" y="3" width="12" height="1" fill="#ffffff"/><rect x="14" y="3" width="1" height="1" fill="#000000"/><rect x="15" y="3" width="1" height="1" fill="#0000ff"/><rect x="0" y="4" width="1" height="1" fill="#0000ff"/><rect x="1" y="4" width="1" height="1" fill="#000000"/><rect x="2" y="4" width="1" height="1" fill="#0000ff"/><rect x="3" y="4" width="1" height="1" fill="#000000"/><rect x="4" y="4" width="1" height="1" fill="#0000ff"/><rect x="5" y="4" width="1" height="1" fill="#000000"/><rect x="6" y="4" width="1" height="1" fill="#0000ff"/><rect x="7" y="4" width="1" height="1" fill="#000000"/><rect x="8" y="4" width="1" height="1" fill="#0000ff"/><rect x="9" y="4" width="1" height="1" fill="#000000"/><rect x="10" y="4" width="1" height="1" fill="#0000ff"/><rect x="11" y="4" width="1" height="1" fill="#000000"/><rect x="12" y="4" width="1" height="1" fill="#0000ff"/><rect x="13" y="4" width="1" height="1" fill="#000000"/><rect x="14" y="4" width="1" height="1" fill="#0000ff"/><rect x="15" y="4" width="1" height="1" fill="#000000"/><rect x="0" y="5" width="1" height="1" fill="#000000"/><rect x="1" y="5" width="1" height="1" fill="#0000ff"/><rect x="2" y="5" width="1" height="1" fill="#000000"/><rect x="3" y="5" width="1" height="1" fill="#0000ff"/><rect x="4" y="5" width="1" height="1" fill="#000000"/><rect x="5" y="5" width="1" height="1" fill="#ffffff"/><rect x="6" y="5" width="1" height="1" fill="#000000"/><rect x="7" y="5" width="1" height="1" fill="#0000ff"/><rect x="8" y="5" width="1" height="1" fill="#000000"/><rect x="9" y="5" width="1" height="1" fill="#ffffff"/><rect x="10" y="5" width="1" height="1" fill="#000000"/><rect x="11" y="5" width="1" height="1" fill="#0000ff"/><rect x="12" y="5" width="1" height="1" fill="#000000"/><rect x="13" y="5" width="1" height="1" fill="#0000ff"/><rect x="14" y="5" width="1" height="1" fill="#000000"/><rect x="15" y="5" width="1" height="1" fill="#0000ff"/><rect x="0" y="6" width="1" height="1" fill="#0000ff"/><rect x="1" y="6" width="1" height="1" fill="#000000"/><rect x="2" y="6" width="1" height="1" fill="#ffffff"/><rect x="3" y="6" width="1" height="1" fill="#000000"/><rect x="4" y="6" width="1" height="1" fill="#0000ff"/><rect x="5" y="6" width="1" height="1" fill="#ffffff"/><rect x="6" y="6" width="1" height="1" fill="#0000ff"/><rect x="7" y="6" width="1" height="1" fill="#000000"/><rect x="8" y="6" width="1" height="1" fill="#0000ff"/><rect x="9" y="6" width="1" height="1" fill="#ffffff"/><rect x="10" y="6" width="1" height="1" fill="#0000ff"/><rect x="11" y="6" width="1" height="1" fill="#000000"/><rect x="12" y="6" width="1" height="1" fill="#0000ff"/><rect x="13" y="6" width="1" height="1" fill="#ffffff"/><rect x="14" y="6" width="1" height="1" fill="#0000ff"/><rect x="15" y="6" width="1" height="1" fill="#000000"/><rect x="0" y="7" width="1" height="1" fill="#000000"/><rect x="1" y="7" width="1" height="1" fill="#0000ff"/><rect x="2" y="7" width="1" height="1" fill="#ffffff"/><rect x="3" y="7" width="1" height="1" fill="#0000ff"/><rect x="4" y="7" width="1" height="1" fill="#000000"/><rect x="5" y="7" width="1" height="1" fill="#ffffff"/><rect x="6" y="7" width="1" height="1" fill="#000000"/><rect x="7" y="7" width="1" height="1" fill="#0000ff"/><rect x="8" y="7" width="1" height="1" fill="#000000"/><rect x="9" y="7" width="1" height="1" fill="#ffffff"/><rect x="10" y="7" width="1" height="1" fill="#000000"/><rect x="11" y="7" width="1" height="1" fill="#0000ff"/><rect x="12" y="7" width="1" height="1" fill="#000000"/><rect x="13" y="7" width="1" height="1" fill="#ffffff"/><rect x="14" y="7" width="1" height="1" fill="#000000"/><rect x="15" y="7" width="1" height="1" fill="#0000ff"/><rect x="0" y="8" width="1" height="1" fill="#0000ff"/><rect x="1" y="8" width="1" height="1" fill="#000000"/><rect x="2" y="8" width="1" height="1" fill="#ffffff"/><rect x="3" y="8" width="1" height="1" fill="#000000"/><rect x="4" y="8" width="1" height="1" fill="#0000ff"/><rect x="5" y="8" width="1" height="1" fill="#000000"/><rect x="6" y="8" width="1" height="1" fill="#0000ff"/><rect x="7" y="8" width="1" height="1" fill="#000000"/><rect x="8" y="8" width="1" height="1" fill="#0000ff"/><rect x="9" y="8" width="1" height="1" fill="#000000"/><rect x="10" y="8" width="1" height="1" fill="#0000ff"/><rect x="11" y="8" width="1" height="1" fill="#000000"/><rect x="12" y="8" width="2" height="1" fill="#ffffff"/><rect x="14" y="8" width="1" height="1" fill="#0000ff"/><rect x="15" y="8" width="1" height="1" fill="#000000"/><rect x="0" y="9" width="1" height="1" fill="#000000"/><rect x="1" y="9" width="1" height="1" fill="#0000ff"/><rect x="2" y="9" width="1" height="1" fill="#ffffff"/><rect x="3" y="9" width="1" height="1" fill="#0000ff"/><rect x="4" y="9" width="1" height="1" fill="#000000"/><rect x="5" y="9" width="1" height="1" fill="#0000ff"/><rect x="6" y="9" width="1" height="1" fill="#000000"/><rect x="7" y="9" width="1" height="1" fill="#0000ff"/><rect x="8" y="9" width="1" height="1" fill="#000000"/><rect x="9" y="9" width="1" height="1" fill="#0000ff"/><rect x="10" y="9" width="1" height="1" fill="#000000"/><rect x="11" y="9" width="1" height="1" fill="#0000ff"/><rect x="12" y="9" width="2" height="1" fill="#ffffff"/><rect x="14" y="9" width="1" height="1" fill="#000000"/><rect x="15" y="9" width="1" height="1" fill="#0000ff"/><rect x="0" y="10" width="1" height="1" fill="#0000ff"/><rect x="1" y="10" width="1" height="1" fill="#000000"/><rect x="2" y="10" width="1" height="1" fill="#ffffff"/><rect x="3" y="10" width="1" height="1" fill="#000000"/><rect x="4" y="10" width="1" height="1" fill="#0000ff"/><rect x="5" y="10" width="1" height="1" fill="#000000"/><rect x="6" y="10" width="1" height="1" fill="#0000ff"/><rect x="7" y="10" width="1" height="1" fill="#000000"/><rect x="8" y="10" width="1" height="1" fill="#0000ff"/><rect x="9" y="10" width="1" height="1" fill="#000000"/><rect x="10" y="10" width="1" height="1" fill="#0000ff"/><rect x="11" y="10" width="3" height="1" fill="#ffffff"/><rect x="14" y="10" width="1" height="1" fill="#0000ff"/><rect x="15" y="10" width="1" height="1" fill="#000000"/><rect x="0" y="11" width="1" height="1" fill="#000000"/><rect x="1" y="11" width="1" height="1" fill="#0000ff"/><rect x="2" y="11" width="2" height="1" fill="#ffffff"/><rect x="4" y="11" width="1" height="1" fill="#000000"/><rect x="5" y="11" width="1" height="1" fill="#0000ff"/><rect x="6" y="11" width="1" height="1" fill="#000000"/><rect x="7" y="11" width="1" height="1" fill="#0000ff"/><rect x="8" y="11" width="1" height="1" fill="#000000"/><rect x="9" y="11" width="1" height="1" fill="#0000ff"/><rect x="10" y="11" width="4" height="1" fill="#ffffff"/><rect x="14" y="11" width="1" height="1" fill="#000000"/><rect x="15" y="11" width="1" height="1" fill="#0000ff"/><rect x="0" y="12" width="1" height="1" fill="#0000ff"/><rect x="1" y="12" width="1" height="1" fill="#000000"/><rect x="2" y="12" width="12" height="1" fill="#ffffff"/><rect x="14" y="12" width="1" height="1" fill="#0000ff"/><rect x="15" y="12" width="1" height="1" fill="#000000"/><rect x="0" y="13" width="1" height="1" fill="#000000"/><rect x="1" y="13" width="1" height="1" fill="#0000ff"/><rect x="2" y="13" width="12" height="1" fill="#ffffff"/><rect x="14" y="13" width="1" height="1" fill="#000000"/><rect x="15" y="13" width="1" height="1" fill="#0000ff"/><rect x="0" y="14" width="1" height="1" fill="#0000ff"/><rect x="1" y="14" width="1" height="1" fill="#000000"/><rect x="2" y="14" width="1" height="1" fill="#0000ff"/><rect x="3" y="14" width="1" height="1" fill="#000000"/><rect x="4" y="14" width="1" height="1" fill="#0000ff"/><rect x="5" y="14" width="1" height="1" fill="#000000"/><rect x="6" y="14" width="1" height="1" fill="#0000ff"/><rect x="7" y="14" width="1" height="1" fill="#000000"/><rect x="8" y="14" width="1" height="1" fill="#0000ff"/><rect x="9" y="14" width="1" height="1" fill="#000000"/><rect x="10" y="14" width="1" height="1" fill="#0000ff"/><rect x="11" y="14" width="1" height="1" fill="#000000"/><rect x="12" y="14" width="1" height="1" fill="#0000ff"/><rect x="13" y="14" width="1" height="1" fill="#000000"/><rect x="14" y="14" width="1" height="1" fill="#0000ff"/><rect x="15" y="14" width="1" height="1" fill="#000000"/><rect x="0" y="15" width="1" height="1" fill="#000000"/><rect x="1" y="15" width="1" height="1" fill="#0000ff"/><rect x="2" y="15" width="1" height="1" fill="#000000"/><rect x="3" y="15" width="1" height="1" fill="#0000ff"/><rect x="4" y="15" width="1" height="1" fill="#000000"/><rect x="5" y="15" width="1" height="1" fill="#0000ff"/><rect x="6" y="15" width="1" height="1" fill="#000000"/><rect x="7" y="15" width="1" height="1" fill="#0000ff"/><rect x="8" y="15" width="1" height="1" fill="#000000"/><rect x="9" y="15" width="1" height="1" fill="#0000ff"/><rect x="10" y="15" width="1" height="1" fill="#000000"/><rect x="11" y="15" width="1" height="1" fill="#0000ff"/><rect x="12" y="15" width="1" height="1" fill="#000000"/><rect x="13" y="15" width="1" height="1" fill="#0000ff"/><rect x="14" y="15" width="1" height="1" fill="#000000"/><rect x="15" y="15" width="1" height="1" fill="#0000ff"/></svg>
<div class="a" style="left:296px;top:576px;width:1px;height:22px;background:#808080"></div>
<div class="a" style="left:297px;top:576px;width:1px;height:22px;background:#fff"></div>
<div class="a" style="left:300px;top:578px;width:3px;height:18px;box-shadow:inset 1px 1px #fff,inset -1px -1px #808080"></div>
<div class="a raised" style="left:307px;top:576px;width:160px;height:22px;"></div>
<svg class="a" style="left:311px;top:580px" width="17" height="15" shape-rendering="crispEdges"><rect x="4" y="0" width="9" height="1" fill="#000000"/><rect x="0" y="1" width="1" height="1" fill="#0000ff"/><rect x="1" y="1" width="1" height="1" fill="#000080"/><rect x="2" y="1" width="1" height="1" fill="#0000ff"/><rect x="3" y="1" width="1" height="1" fill="#000080"/><rect x="4" y="1" width="1" height="1" fill="#0000ff"/><rect x="5" y="1" width="1" height="1" fill="#000080"/><rect x="6" y="1" width="1" height="1" fill="#0000ff"/><rect x="7" y="1" width="1" height="1" fill="#000080"/><rect x="8" y="1" width="1" height="1" fill="#0000ff"/><rect x="9" y="1" width="1" height="1" fill="#000080"/><rect x="10" y="1" width="2" height="1" fill="#ffffff"/><rect x="12" y="1" width="2" height="1" fill="#000000"/><rect x="0" y="2" width="1" height="1" fill="#000080"/><rect x="1" y="2" width="8" height="1" fill="#ffffff"/><rect x="9" y="2" width="1" height="1" fill="#0000ff"/><rect x="10" y="2" width="2" height="1" fill="#ffffff"/><rect x="12" y="2" width="1" height="1" fill="#000000"/><rect x="13" y="2" width="1" height="1" fill="#ffffff"/><rect x="14" y="2" width="1" height="1" fill="#000000"/><rect x="0" y="3" width="1" height="1" fill="#0000ff"/><rect x="1" y="3" width="1" height="1" fill="#ffffff"/><rect x="2" y="3" width="1" height="1" fill="#0000ff"/><rect x="3" y="3" width="2" height="1" fill="#ffffff"/><rect x="5" y="3" width="1" height="1" fill="#0000ff"/><rect x="6" y="3" width="2" height="1" fill="#ffffff"/><rect x="8" y="3" width="1" height="1" fill="#0000ff"/><rect x="9" y="3" width="1" height="1" fill="#000080"/><rect x="10" y="3" width="2" height="1" fill="#ffffff"/><rect x="12" y="3" width="4" height="1" fill="#000000"/><rect x="0" y="4" width="1" height="1" fill="#000080"/><rect x="1" y="4" width="1" height="1" fill="#ffffff"/><rect x="2" y="4" width="1" height="1" fill="#0000ff"/><rect x="3" y="4" width="2" height="1" fill="#ffffff"/><rect x="5" y="4" width="1" height="1" fill="#0000ff"/><rect x="6" y="4" width="2" height="1" fill="#ffffff"/><rect x="8" y="4" width="2" height="1" fill="#0000ff"/><rect x="10" y="4" width="5" height="1" fill="#ffffff"/><rect x="15" y="4" width="1" height="1" fill="#000000"/><rect x="0" y="5" width="1" height="1" fill="#0000ff"/><rect x="1" y="5" width="1" height="1" fill="#ffffff"/><rect x="2" y="5" width="1" height="1" fill="#0000ff"/><rect x="3" y="5" width="1" height="1" fill="#ffffff"/><rect x="4" y="5" width="1" height="1" fill="#0000ff"/><rect x="5" y="5" width="1" height="1" fill="#ffffff"/><rect x="6" y="5" width="1" height="1" fill="#0000ff"/><rect x="7" y="5" width="1" height="1" fill="#ffffff"/><rect x="8" y="5" width="1" height="1" fill="#0000ff"/><rect x="9" y="5" width="1" height="1" fill="#000080"/><rect x="10" y="5" width="4" height="1" fill="#000000"/><rect x="14" y="5" width="1" height="1" fill="#ffffff"/><rect x="15" y="5" width="1" height="1" fill="#000000"/><rect x="0" y="6" width="1" height="1" fill="#000080"/><rect x="1" y="6" width="2" height="1" fill="#ffffff"/><rect x="3" y="6" width="1" height="1" fill="#0000ff"/><rect x="4" y="6" width="1" height="1" fill="#ffffff"/><rect x="5" y="6" width="1" height="1" fill="#0000ff"/><rect x="6" y="6" width="1" height="1" fill="#ffffff"/><rect x="7" y="6" width="1" height="1" fill="#0000ff"/><rect x="8" y="6" width="1" height="1" fill="#ffffff"/><rect x="9" y="6" width="1" height="1" fill="#0000ff"/><rect x="10" y="6" width="5" height="1" fill="#ffffff"/><rect x="15" y="6" width="1" height="1" fill="#000000"/><rect x="0" y="7" width="1" height="1" fill="#0000ff"/><rect x="1" y="7" width="2" height="1" fill="#ffffff"/><rect x="3" y="7" width="1" height="1" fill="#0000ff"/><rect x="4" y="7" width="1" height="1" fill="#ffffff"/><rect x="5" y="7" width="1" height="1" fill="#0000ff"/><rect x="6" y="7" width="1" height="1" fill="#ffffff"/><rect x="7" y="7" width="1" height="1" fill="#0000ff"/><rect x="8" y="7" width="1" height="1" fill="#ffffff"/><rect x="9" y="7" width="1" height="1" fill="#000080"/><rect x="10" y="7" width="4" height="1" fill="#000000"/><rect x="14" y="7" width="1" height="1" fill="#ffffff"/><rect x="15" y="7" width="1" height="1" fill="#000000"/><rect x="0" y="8" width="1" height="1" fill="#000080"/><rect x="1" y="8" width="8" height="1" fill="#ffffff"/><rect x="9" y="8" width="1" height="1" fill="#0000ff"/><rect x="10" y="8" width="5" height="1" fill="#ffffff"/><rect x="15" y="8" width="1" height="1" fill="#000000"/><rect x="0" y="9" width="1" height="1" fill="#0000ff"/><rect x="1" y="9" width="1" height="1" fill="#000080"/><rect x="2" y="9" width="1" height="1" fill="#0000ff"/><rect x="3" y="9" width="1" height="1" fill="#000080"/><rect x="4" y="9" width="1" height="1" fill="#0000ff"/><rect x="5" y="9" width="1" height="1" fill="#000080"/><rect x="6" y="9" width="1" height="1" fill="#0000ff"/><rect x="7" y="9" width="1" height="1" fill="#000080"/><rect x="8" y="9" width="1" height="1" fill="#0000ff"/><rect x="9" y="9" width="1" height="1" fill="#000080"/><rect x="10" y="9" width="4" height="1" fill="#000000"/><rect x="14" y="9" width="1" height="1" fill="#ffffff"/><rect x="15" y="9" width="1" height="1" fill="#000000"/><rect x="4" y="10" width="1" height="1" fill="#000000"/><rect x="5" y="10" width="10" height="1" fill="#ffffff"/><rect x="15" y="10" width="1" height="1" fill="#000000"/><rect x="4" y="11" width="1" height="1" fill="#000000"/><rect x="5" y="11" width="1" height="1" fill="#ffffff"/><rect x="6" y="11" width="8" height="1" fill="#000000"/><rect x="14" y="11" width="1" height="1" fill="#ffffff"/><rect x="15" y="11" width="1" height="1" fill="#000000"/><rect x="4" y="12" width="1" height="1" fill="#000000"/><rect x="5" y="12" width="10" height="1" fill="#ffffff"/><rect x="15" y="12" width="1" height="1" fill="#000000"/><rect x="4" y="13" width="1" height="1" fill="#000000"/><rect x="5" y="13" width="10" height="1" fill="#ffffff"/><rect x="15" y="13" width="1" height="1" fill="#000000"/><rect x="4" y="14" width="12" height="1" fill="#000000"/></svg>
<div class="t " style="left:330px;top:581px;">Пособие по КОМПАСУ.d...</div>
<div class="a dith" style="left:470px;top:576px;width:160px;height:22px;box-shadow:inset 1px 1px #000,inset -1px -1px #fff,inset 2px 2px #808080,inset -2px -2px #dfdfdf"></div>
<svg class="a" style="left:472px;top:579px" width="20" height="16" shape-rendering="crispEdges"><rect x="7" y="2" width="6" height="1" fill="#ffff00"/><rect x="5" y="3" width="2" height="1" fill="#ffff00"/><rect x="7" y="3" width="6" height="1" fill="#606090"/><rect x="13" y="3" width="2" height="1" fill="#ffff00"/><rect x="4" y="4" width="1" height="1" fill="#ffff00"/><rect x="5" y="4" width="1" height="1" fill="#606090"/><rect x="14" y="4" width="1" height="1" fill="#606090"/><rect x="15" y="4" width="1" height="1" fill="#ffff00"/><rect x="4" y="5" width="1" height="1" fill="#ffff00"/><rect x="5" y="5" width="1" height="1" fill="#606090"/><rect x="7" y="5" width="3" height="1" fill="#ffff00"/><rect x="12" y="5" width="2" height="1" fill="#ffff00"/><rect x="14" y="5" width="1" height="1" fill="#606090"/><rect x="15" y="5" width="1" height="1" fill="#ffff00"/><rect x="3" y="6" width="1" height="1" fill="#ffff00"/><rect x="4" y="6" width="1" height="1" fill="#606090"/><rect x="7" y="6" width="1" height="1" fill="#ffff00"/><rect x="8" y="6" width="1" height="1" fill="#606090"/><rect x="9" y="6" width="1" height="1" fill="#ffff00"/><rect x="11" y="6" width="2" height="1" fill="#ffff00"/><rect x="13" y="6" width="1" height="1" fill="#606090"/><rect x="16" y="6" width="1" height="1" fill="#ffff00"/><rect x="3" y="7" width="1" height="1" fill="#ffff00"/><rect x="4" y="7" width="1" height="1" fill="#606090"/><rect x="7" y="7" width="1" height="1" fill="#ffff00"/><rect x="8" y="7" width="1" height="1" fill="#606090"/><rect x="9" y="7" width="3" height="1" fill="#ffff00"/><rect x="12" y="7" width="1" height="1" fill="#606090"/><rect x="16" y="7" width="1" height="1" fill="#ffff00"/><rect x="3" y="8" width="1" height="1" fill="#ffff00"/><rect x="4" y="8" width="1" height="1" fill="#606090"/><rect x="7" y="8" width="1" height="1" fill="#ffff00"/><rect x="8" y="8" width="1" height="1" fill="#606090"/><rect x="9" y="8" width="2" height="1" fill="#ffff00"/><rect x="11" y="8" width="1" height="1" fill="#606090"/><rect x="16" y="8" width="1" height="1" fill="#ffff00"/><rect x="3" y="9" width="1" height="1" fill="#ffff00"/><rect x="4" y="9" width="1" height="1" fill="#606090"/><rect x="7" y="9" width="1" height="1" fill="#ffff00"/><rect x="8" y="9" width="2" height="1" fill="#606090"/><rect x="10" y="9" width="2" height="1" fill="#ffff00"/><rect x="16" y="9" width="1" height="1" fill="#ffff00"/><rect x="3" y="10" width="1" height="1" fill="#ffff00"/><rect x="4" y="10" width="1" height="1" fill="#606090"/><rect x="7" y="10" width="1" height="1" fill="#ffff00"/><rect x="8" y="10" width="1" height="1" fill="#606090"/><rect x="10" y="10" width="1" height="1" fill="#606090"/><rect x="11" y="10" width="2" height="1" fill="#ffff00"/><rect x="16" y="10" width="1" height="1" fill="#ffff00"/><rect x="3" y="11" width="1" height="1" fill="#ffff00"/><rect x="4" y="11" width="1" height="1" fill="#606090"/><rect x="7" y="11" width="3" height="1" fill="#ffff00"/><rect x="11" y="11" width="1" height="1" fill="#606090"/><rect x="12" y="11" width="2" height="1" fill="#ffff00"/><rect x="16" y="11" width="1" height="1" fill="#ffff00"/><rect x="4" y="12" width="1" height="1" fill="#ffff00"/><rect x="5" y="12" width="1" height="1" fill="#606090"/><rect x="7" y="12" width="3" height="1" fill="#606090"/><rect x="12" y="12" width="1" height="1" fill="#606090"/><rect x="13" y="12" width="3" height="1" fill="#ffff00"/><rect x="4" y="13" width="1" height="1" fill="#ffff00"/><rect x="5" y="13" width="1" height="1" fill="#606090"/><rect x="13" y="13" width="2" height="1" fill="#606090"/><rect x="15" y="13" width="1" height="1" fill="#ffff00"/><rect x="5" y="14" width="2" height="1" fill="#ffff00"/><rect x="7" y="14" width="6" height="1" fill="#606090"/><rect x="13" y="14" width="2" height="1" fill="#ffff00"/><rect x="7" y="15" width="6" height="1" fill="#ffff00"/></svg>
<div class="t b" style="left:493px;top:581px;font-size:12px;letter-spacing:0.12px">Компас-График 5.5</div>
<div class="a" style="left:698px;top:576px;width:100px;height:22px;box-shadow:inset 1px 1px #808080,inset -1px -1px #fff"></div>
<div class="a" style="left:705px;top:579px;width:16px;height:16px;background:#000080"></div>
<div class="t " style="left:706px;top:581px;color:#fff">Ru</div>
<svg class="a" style="left:722px;top:581px" width="16" height="10" shape-rendering="crispEdges"><rect x="2" y="0" width="1" height="1" fill="#000000"/><rect x="3" y="0" width="1" height="1" fill="#ffffff"/><rect x="6" y="0" width="1" height="1" fill="#ffffff"/><rect x="7" y="0" width="1" height="1" fill="#000000"/><rect x="1" y="1" width="2" height="1" fill="#ffffff"/><rect x="3" y="1" width="1" height="1" fill="#000000"/><rect x="4" y="1" width="3" height="1" fill="#ffffff"/><rect x="7" y="1" width="1" height="1" fill="#000000"/><rect x="8" y="1" width="1" height="1" fill="#ffffff"/><rect x="0" y="2" width="1" height="1" fill="#000000"/><rect x="1" y="2" width="1" height="1" fill="#ffffff"/><rect x="3" y="2" width="1" height="1" fill="#ffffff"/><rect x="4" y="2" width="1" height="1" fill="#000000"/><rect x="6" y="2" width="1" height="1" fill="#000000"/><rect x="7" y="2" width="1" height="1" fill="#ffffff"/><rect x="8" y="2" width="1" height="1" fill="#000000"/><rect x="1" y="3" width="1" height="1" fill="#ffffff"/><rect x="2" y="3" width="1" height="1" fill="#000000"/><rect x="3" y="3" width="1" height="1" fill="#ffffff"/><rect x="4" y="3" width="1" height="1" fill="#000000"/><rect x="5" y="3" width="1" height="1" fill="#ffffff"/><rect x="6" y="3" width="1" height="1" fill="#000000"/><rect x="7" y="3" width="1" height="1" fill="#ffffff"/><rect x="8" y="3" width="2" height="1" fill="#000000"/><rect x="0" y="4" width="1" height="1" fill="#ffffff"/><rect x="1" y="4" width="1" height="1" fill="#000000"/><rect x="2" y="4" width="1" height="1" fill="#ffffff"/><rect x="4" y="4" width="1" height="1" fill="#ffffff"/><rect x="5" y="4" width="2" height="1" fill="#ff0000"/><rect x="8" y="4" width="1" height="1" fill="#000000"/><rect x="9" y="4" width="1" height="1" fill="#ffffff"/><rect x="1" y="5" width="1" height="1" fill="#000000"/><rect x="2" y="5" width="2" height="1" fill="#ffffff"/><rect x="4" y="5" width="1" height="1" fill="#000000"/><rect x="5" y="5" width="2" height="1" fill="#ff0000"/><rect x="7" y="5" width="1" height="1" fill="#000000"/><rect x="8" y="5" width="1" height="1" fill="#ffffff"/><rect x="9" y="5" width="1" height="1" fill="#000000"/><rect x="0" y="6" width="1" height="1" fill="#ffffff"/><rect x="1" y="6" width="1" height="1" fill="#000000"/><rect x="2" y="6" width="2" height="1" fill="#ffffff"/><rect x="5" y="6" width="1" height="1" fill="#ffffff"/><rect x="6" y="6" width="3" height="1" fill="#000000"/><rect x="9" y="6" width="1" height="1" fill="#ffffff"/><rect x="0" y="7" width="1" height="1" fill="#000000"/><rect x="1" y="7" width="1" height="1" fill="#ffffff"/><rect x="2" y="7" width="1" height="1" fill="#000000"/><rect x="3" y="7" width="1" height="1" fill="#ffffff"/><rect x="4" y="7" width="1" height="1" fill="#000000"/><rect x="5" y="7" width="1" height="1" fill="#ffffff"/><rect x="6" y="7" width="1" height="1" fill="#000000"/><rect x="7" y="7" width="1" height="1" fill="#ffffff"/><rect x="8" y="7" width="1" height="1" fill="#000000"/><rect x="9" y="7" width="1" height="1" fill="#ffffff"/><rect x="1" y="8" width="1" height="1" fill="#ffffff"/><rect x="2" y="8" width="1" height="1" fill="#000000"/><rect x="3" y="8" width="1" height="1" fill="#ffffff"/><rect x="5" y="8" width="1" height="1" fill="#ffffff"/><rect x="6" y="8" width="1" height="1" fill="#000000"/><rect x="8" y="8" width="1" height="1" fill="#000000"/><rect x="9" y="8" width="1" height="1" fill="#ffffff"/><rect x="2" y="9" width="1" height="1" fill="#000000"/><rect x="3" y="9" width="1" height="1" fill="#ffffff"/><rect x="5" y="9" width="1" height="1" fill="#000000"/><rect x="6" y="9" width="2" height="1" fill="#ffffff"/><rect x="8" y="9" width="1" height="1" fill="#000000"/></svg>
<svg class="a" style="left:739px;top:580px" width="17" height="14" shape-rendering="crispEdges"><rect x="0" y="0" width="15" height="1" fill="#000000"/><rect x="0" y="1" width="1" height="1" fill="#000000"/><rect x="1" y="1" width="1" height="1" fill="#ffffff"/><rect x="2" y="1" width="1" height="1" fill="#000000"/><rect x="3" y="1" width="9" height="1" fill="#ffffff"/><rect x="12" y="1" width="3" height="1" fill="#000000"/><rect x="0" y="2" width="1" height="1" fill="#000000"/><rect x="1" y="2" width="2" height="1" fill="#ffffff"/><rect x="3" y="2" width="1" height="1" fill="#000000"/><rect x="4" y="2" width="7" height="1" fill="#ffffff"/><rect x="11" y="2" width="1" height="1" fill="#000000"/><rect x="12" y="2" width="1" height="1" fill="#ffffff"/><rect x="13" y="2" width="2" height="1" fill="#000000"/><rect x="0" y="3" width="1" height="1" fill="#000000"/><rect x="1" y="3" width="3" height="1" fill="#ffffff"/><rect x="4" y="3" width="1" height="1" fill="#000000"/><rect x="5" y="3" width="5" height="1" fill="#ffffff"/><rect x="10" y="3" width="1" height="1" fill="#000000"/><rect x="11" y="3" width="3" height="1" fill="#ffffff"/><rect x="14" y="3" width="1" height="1" fill="#000000"/><rect x="15" y="3" width="2" height="1" fill="#ff0000"/><rect x="0" y="4" width="1" height="1" fill="#000000"/><rect x="1" y="4" width="4" height="1" fill="#ffffff"/><rect x="5" y="4" width="1" height="1" fill="#000000"/><rect x="6" y="4" width="3" height="1" fill="#ffffff"/><rect x="9" y="4" width="1" height="1" fill="#000000"/><rect x="10" y="4" width="2" height="1" fill="#ffffff"/><rect x="12" y="4" width="4" height="1" fill="#ff0000"/><rect x="0" y="5" width="1" height="1" fill="#000000"/><rect x="1" y="5" width="5" height="1" fill="#ffffff"/><rect x="6" y="5" width="1" height="1" fill="#000000"/><rect x="7" y="5" width="1" height="1" fill="#ffffff"/><rect x="8" y="5" width="1" height="1" fill="#000000"/><rect x="9" y="5" width="2" height="1" fill="#ffffff"/><rect x="11" y="5" width="3" height="1" fill="#ff0000"/><rect x="14" y="5" width="1" height="1" fill="#ffffff"/><rect x="15" y="5" width="1" height="1" fill="#000000"/><rect x="0" y="6" width="1" height="1" fill="#000000"/><rect x="1" y="6" width="6" height="1" fill="#ffffff"/><rect x="7" y="6" width="1" height="1" fill="#000000"/><rect x="8" y="6" width="2" height="1" fill="#ffffff"/><rect x="10" y="6" width="2" height="1" fill="#ff0000"/><rect x="12" y="6" width="3" height="1" fill="#ffffff"/><rect x="15" y="6" width="1" height="1" fill="#000000"/><rect x="0" y="7" width="1" height="1" fill="#000000"/><rect x="1" y="7" width="8" height="1" fill="#ffffff"/><rect x="9" y="7" width="2" height="1" fill="#ff0000"/><rect x="11" y="7" width="4" height="1" fill="#ffffff"/><rect x="15" y="7" width="1" height="1" fill="#000000"/><rect x="0" y="8" width="1" height="1" fill="#000000"/><rect x="1" y="8" width="5" height="1" fill="#ffffff"/><rect x="6" y="8" width="1" height="1" fill="#000000"/><rect x="7" y="8" width="1" height="1" fill="#ffffff"/><rect x="8" y="8" width="2" height="1" fill="#ff0000"/><rect x="10" y="8" width="1" height="1" fill="#ffffff"/><rect x="11" y="8" width="1" height="1" fill="#000000"/><rect x="12" y="8" width="3" height="1" fill="#ffffff"/><rect x="15" y="8" width="1" height="1" fill="#000000"/><rect x="0" y="9" width="1" height="1" fill="#000000"/><rect x="1" y="9" width="2" height="1" fill="#ff0000"/><rect x="3" y="9" width="2" height="1" fill="#ffffff"/><rect x="5" y="9" width="1" height="1" fill="#000000"/><rect x="6" y="9" width="1" height="1" fill="#ffffff"/><rect x="7" y="9" width="2" height="1" fill="#ff0000"/><rect x="9" y="9" width="3" height="1" fill="#ffffff"/><rect x="12" y="9" width="1" height="1" fill="#000000"/><rect x="13" y="9" width="2" height="1" fill="#ffffff"/><rect x="15" y="9" width="1" height="1" fill="#000000"/><rect x="0" y="10" width="1" height="1" fill="#000000"/><rect x="1" y="10" width="3" height="1" fill="#ff0000"/><rect x="4" y="10" width="1" height="1" fill="#000000"/><rect x="5" y="10" width="3" height="1" fill="#ff0000"/><rect x="8" y="10" width="5" height="1" fill="#ffffff"/><rect x="13" y="10" width="1" height="1" fill="#000000"/><rect x="14" y="10" width="1" height="1" fill="#ffffff"/><rect x="15" y="10" width="1" height="1" fill="#000000"/><rect x="0" y="11" width="1" height="1" fill="#000000"/><rect x="1" y="11" width="6" height="1" fill="#ff0000"/><rect x="7" y="11" width="9" height="1" fill="#000000"/><rect x="1" y="12" width="4" height="1" fill="#ff0000"/><rect x="0" y="13" width="3" height="1" fill="#ff0000"/></svg>
<div class="t " style="left:766px;top:581px;">9:28</div>
</body></html>
